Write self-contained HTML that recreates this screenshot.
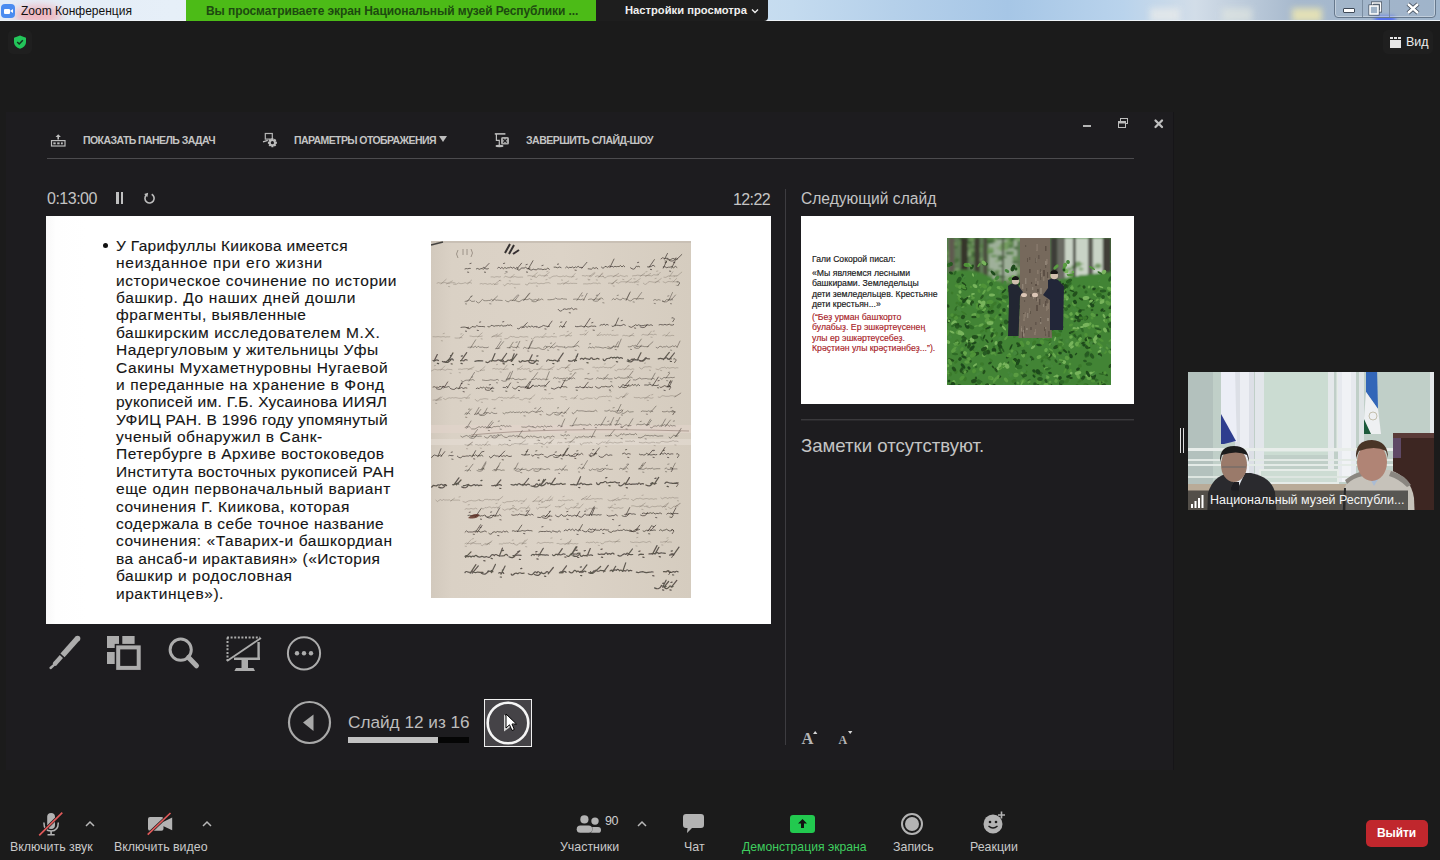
<!DOCTYPE html>
<html><head><meta charset="utf-8">
<style>
*{margin:0;padding:0;box-sizing:border-box}
html,body{width:1440px;height:860px;overflow:hidden;background:#1b1b1b;font-family:"Liberation Sans",sans-serif}
.a{position:absolute}
.t{position:absolute;white-space:nowrap;line-height:1}
svg{position:absolute;overflow:visible}
</style></head><body>
<!-- ===== title bar ===== -->
<div class="a" style="left:0;top:0;width:1440px;height:21px;overflow:hidden;background:linear-gradient(90deg,#e3ecf6 0%,#e6eff8 12%,#dbe8f4 40%,#c4dbef 55%,#b5d0ea 62%,#a6c6e6 70%,#b9d3ec 78%,#d2dde8 83%,#a7b9cd 90%,#9fb5cc 100%)">
  <div class="a" style="left:14px;top:6px;width:48px;height:18px;border-radius:50%;background:#f2a6ae;filter:blur(5px);opacity:.8"></div>
  <div class="a" style="left:1150px;top:8px;width:30px;height:14px;background:#e6e9ea;filter:blur(3px);opacity:.8"></div>
  <div class="a" style="left:1222px;top:8px;width:30px;height:14px;background:#dfe5e0;filter:blur(3px);opacity:.7"></div>
  <div class="a" style="left:1292px;top:8px;width:30px;height:14px;background:#f2eab0;filter:blur(3px);opacity:.8"></div>
  <div class="a" style="left:1375px;top:16px;width:20px;height:6px;background:#3050ff;filter:blur(2px);opacity:.8"></div>
</div>
<div class="a" style="left:0;top:20px;width:1440px;height:1px;background:#eef3f8"></div>
<div class="a" style="left:1px;top:4px;width:14px;height:14px;border-radius:4px;background:#4a8cf0"></div>
<div class="a" style="left:4px;top:9px;width:6px;height:5px;border-radius:1px;background:#fff"></div>
<div class="a" style="left:10px;top:9px;width:0;height:0;border-top:2.5px solid transparent;border-bottom:2.5px solid transparent;border-right:3px solid #fff"></div>
<div class="t" id="tb1" style="left:21px;top:5px;font-size:12px;color:#111">Zoom Конференция</div>
<div class="a" style="left:186px;top:0;width:410px;height:21px;background:#4cbb17"></div>
<div class="t" id="tb2" style="left:206px;top:5px;font-size:12px;letter-spacing:-0.08px;font-weight:bold;color:#1d4a10">Вы просматриваете экран Национальный музей Республики ...</div>
<div class="a" style="left:596px;top:0;width:172px;height:21px;background:#1e1e1e;border-bottom-right-radius:4px"></div>
<div class="t" id="tb3" style="left:625px;top:5px;font-size:11.2px;font-weight:bold;color:#f0f0f0">Настройки просмотра</div>
<svg style="left:751px;top:8px" width="8" height="6"><path d="M1 1.5 L4 4.5 L7 1.5" stroke="#eee" stroke-width="1.4" fill="none"/></svg>
<!-- window buttons -->
<div class="a" style="left:1334px;top:-4px;width:102px;height:22px;border:1px solid #66788c;border-radius:4px;background:rgba(160,178,198,.35);box-shadow:inset 0 0 0 1px rgba(255,255,255,.35)"></div>
<div class="a" style="left:1362px;top:0;width:1px;height:17px;background:#7a8ca0"></div>
<div class="a" style="left:1389px;top:0;width:1px;height:17px;background:#7a8ca0"></div>
<div class="a" style="left:1343px;top:8px;width:12px;height:5px;background:#fff;border:1px solid #3f4a58;border-radius:1px"></div>
<svg style="left:1369px;top:2px" width="13" height="13"><rect x="3.5" y="1" width="8" height="8" fill="none" stroke="#3f4a58" stroke-width="3"/><rect x="3.5" y="1" width="8" height="8" fill="none" stroke="#fff" stroke-width="1.5"/><rect x="1" y="4" width="8" height="8" fill="#8fa2b8" stroke="#3f4a58" stroke-width="3"/><rect x="1" y="4" width="8" height="8" fill="#9fb2c6" stroke="#fff" stroke-width="1.6"/></svg>
<svg style="left:1406px;top:3px" width="14" height="11"><path d="M2 1 L12 10 M12 1 L2 10" stroke="#3f4a58" stroke-width="4.2"/><path d="M2 1 L12 10 M12 1 L2 10" stroke="#fff" stroke-width="2.4"/></svg>
<!-- shield -->
<div class="a" style="left:8px;top:30px;width:24px;height:24px;border-radius:5px;background:#1f1f1f"></div>
<svg style="left:13px;top:35px" width="14" height="14"><path d="M7 0.5 L13 2.8 L13 7 C13 10.3 10.5 12.6 7 13.8 C3.5 12.6 1 10.3 1 7 L1 2.8 Z" fill="#23c55a"/><path d="M4.2 7 L6.2 9 L9.8 5.2" stroke="#13321f" stroke-width="1.5" fill="none"/></svg>
<!-- view button -->
<div class="a" style="left:1383px;top:30px;width:50px;height:24px;border-radius:5px;background:#1f1f1f"></div>
<svg style="left:1390px;top:37px" width="12" height="11"><rect x="0" y="3" width="11" height="8" fill="#e6e6e6"/><rect x="0" y="0" width="3" height="2" fill="#e6e6e6"/><rect x="4" y="0" width="3" height="2" fill="#e6e6e6"/><rect x="8" y="0" width="3" height="2" fill="#e6e6e6"/></svg>
<div class="t" id="vid" style="left:1406px;top:36px;font-size:12.5px;color:#eee">Вид</div>

<!-- ===== presenter window ===== -->
<div class="a" style="left:6px;top:112px;width:1168px;height:658px;background:#1d1c1f;border-right:1px solid #161518"></div>
<!-- toolbar -->
<svg style="left:50px;top:133px" width="17" height="14"><path d="M8.2 1.3 L10.9 4 L9 4 L9 6.6 L7.4 6.6 L7.4 4 L5.5 4 Z" fill="#bdbdbd"/><rect x="1.5" y="7.6" width="13.5" height="5.4" fill="none" stroke="#bdbdbd" stroke-width="1.2"/><rect x="3.3" y="9.4" width="2.4" height="1.9" fill="#bdbdbd"/><rect x="7.2" y="9.4" width="2.4" height="1.9" fill="#bdbdbd"/><rect x="11" y="9.4" width="1.8" height="1.9" fill="#bdbdbd"/></svg>
<svg style="left:262px;top:132px" width="18" height="18"><rect x="3.3" y="1.5" width="7" height="5.6" fill="none" stroke="#b5b5b5" stroke-width="1.2"/><path d="M1 9.8 L5.8 8.3" stroke="#c0c0c0" stroke-width="1.4"/><path d="M14.89 9.70 L14.89 11.70 L13.45 11.95 L13.45 11.97 L14.28 13.16 L12.86 14.58 L11.67 13.75 L11.65 13.75 L11.40 15.19 L9.40 15.19 L9.15 13.75 L9.13 13.75 L7.94 14.58 L6.52 13.16 L7.35 11.97 L7.35 11.95 L5.91 11.70 L5.91 9.70 L7.35 9.45 L7.35 9.43 L6.52 8.24 L7.94 6.82 L9.13 7.65 L9.15 7.65 L9.40 6.21 L11.40 6.21 L11.65 7.65 L11.67 7.65 L12.86 6.82 L14.28 8.24 L13.45 9.43 L13.45 9.45 Z" fill="#bdbdbd"/><circle cx="10.4" cy="10.7" r="1.6" fill="#1e1d20"/></svg>
<div class="t" id="tl1" style="left:83px;top:135px;font-size:10.5px;letter-spacing:-0.57px;font-weight:bold;color:#c4c4c4">ПОКАЗАТЬ ПАНЕЛЬ ЗАДАЧ</div>

<div class="t" id="tl2" style="left:294px;top:135px;font-size:10.5px;letter-spacing:-0.58px;font-weight:bold;color:#c4c4c4">ПАРАМЕТРЫ ОТОБРАЖЕНИЯ</div>
<svg style="left:439px;top:136px" width="9" height="7"><path d="M0 0 L8 0 L4 6 Z" fill="#bdbdbd"/></svg>
<svg style="left:494px;top:132px" width="17" height="16"><path d="M0.8 1.9 L11.4 1.9" stroke="#c4c4c4" stroke-width="1.5"/><path d="M2.4 2 L2.4 8.4 L5.3 8.4 L5.3 13.6" stroke="#bdbdbd" stroke-width="1.2" fill="none"/><ellipse cx="5.5" cy="14" rx="4" ry="1.2" fill="#bdbdbd"/><rect x="7" y="5" width="8" height="7.5" rx="1.5" fill="#aaaaaa"/><path d="M9.2 7 L12.8 10.6 M12.8 7 L9.2 10.6" stroke="#1e1d20" stroke-width="1.2"/></svg>
<div class="t" id="tl3" style="left:526px;top:135px;font-size:10.5px;letter-spacing:-0.5px;font-weight:bold;color:#c4c4c4">ЗАВЕРШИТЬ СЛАЙД-ШОУ</div>
<div class="a" style="left:47px;top:158px;width:1087px;height:1px;background:#4c4b4e"></div>
<!-- window ctrls -->
<div class="a" style="left:1083px;top:125px;width:8px;height:2px;background:#b5b5b5"></div>
<svg style="left:1118px;top:118px" width="10" height="10"><rect x="2.5" y="0.5" width="7" height="5" fill="none" stroke="#bdbdbd"/><rect x="0.5" y="3.5" width="7" height="6" fill="#1e1d20" stroke="#bdbdbd"/><rect x="0.5" y="3.5" width="7" height="2" fill="#bdbdbd"/></svg>
<svg style="left:1154px;top:119px" width="10" height="10"><path d="M1.5 1.5 L8 8 M8 1.5 L1.5 8" stroke="#bfbfbf" stroke-width="2.3" stroke-linecap="round"/></svg>
<!-- timer -->
<div class="t" id="timer" style="left:47px;top:191px;font-size:16px;letter-spacing:-0.5px;color:#c4c4c4">0:13:00</div>
<div class="a" style="left:116px;top:192px;width:2.7px;height:12px;background:#c0c0c0"></div>
<div class="a" style="left:120.7px;top:192px;width:2.7px;height:12px;background:#c0c0c0"></div>
<svg style="left:143px;top:191px" width="14" height="14"><path d="M8.7 3.3 A4.6 4.6 0 1 1 3.4 4" stroke="#bdbdbd" stroke-width="1.6" fill="none"/><path d="M5.2 1.8 L4.3 6.2 L1.2 3.1 Z" fill="#bdbdbd"/></svg>
<div class="t" id="clock" style="left:733px;top:191.5px;font-size:16px;letter-spacing:-0.6px;color:#c4c4c4">12:22</div>
<div class="a" style="left:785px;top:189px;width:1px;height:556px;background:#3d3c40"></div>
<div class="t" id="nexth" style="left:801px;top:191px;font-size:15.6px;color:#c4c4c4">Следующий слайд</div>
<!-- tools -->
<svg style="left:48px;top:636px" width="36" height="36"><path d="M29.6 2.4 L14.5 19.4" stroke="#acacac" stroke-width="5.5"/><circle cx="29.6" cy="2.6" r="2.75" fill="#acacac"/><path d="M13.4 20.6 L7.2 27.4" stroke="#acacac" stroke-width="4.4"/><circle cx="7" cy="27.7" r="2.2" fill="#acacac"/><path d="M5.5 29.3 L2.6 32" stroke="#acacac" stroke-width="2.4" stroke-linecap="round"/></svg>
<svg style="left:106px;top:636px" width="36" height="36"><rect x="1" y="0" width="12" height="12" fill="#acacac"/><rect x="16.3" y="0" width="12.3" height="10" fill="#acacac"/><rect x="1" y="16" width="10" height="12" fill="#acacac"/><rect x="8.7" y="7.9" width="27.5" height="27.5" fill="#1e1d20"/><rect x="12.2" y="11.4" width="20.5" height="20.5" fill="none" stroke="#acacac" stroke-width="4"/></svg>
<svg style="left:166px;top:636px" width="36" height="36"><circle cx="14.7" cy="13.7" r="10.6" fill="none" stroke="#acacac" stroke-width="3"/><path d="M22.5 21.5 L30.5 29.8" stroke="#acacac" stroke-width="5" stroke-linecap="round"/></svg>
<svg style="left:226px;top:636px" width="36" height="36"><path d="M1 1.5 L34 1.5 M1.5 1.5 L1.5 25" stroke="#acacac" stroke-width="2" stroke-dasharray="2 1.6" fill="none"/><path d="M1 25 L35 2" stroke="#acacac" stroke-width="1.8"/><path d="M32.6 6 L32.6 24 M8 22.8 L34 22.8" stroke="#acacac" stroke-width="2.4"/><rect x="15.5" y="23.5" width="6.5" height="9" fill="#acacac"/><path d="M8.4 35 L29 35 L27.5 32 L10 32 Z" fill="#acacac"/></svg>
<svg style="left:286px;top:636px" width="36" height="36"><circle cx="18" cy="17.3" r="16.1" fill="none" stroke="#acacac" stroke-width="2"/><circle cx="11" cy="17.3" r="2.2" fill="#acacac"/><circle cx="18" cy="17.3" r="2.2" fill="#acacac"/><circle cx="25" cy="17.3" r="2.2" fill="#acacac"/></svg>
<!-- nav -->
<svg style="left:287px;top:700px" width="45" height="45"><circle cx="22.5" cy="22.5" r="20.5" fill="none" stroke="#a9a9a9" stroke-width="2.2"/><path d="M16 22.5 L26.5 14.5 L26.5 31 Z" fill="#a9a9a9"/></svg>
<div class="t" id="slidenum" style="left:348px;top:713.5px;font-size:17.2px;color:#bdbdbd">Слайд 12 из 16</div>
<div class="a" style="left:348px;top:737px;width:121px;height:6px;background:#050505"></div>
<div class="a" style="left:348px;top:737px;width:90px;height:6px;background:#c2c2c2"></div>
<div class="a" style="left:484px;top:699px;width:48px;height:48px;background:#454347;border:1px solid #f0f0f0"></div>
<svg style="left:486px;top:701px" width="45" height="45"><circle cx="22" cy="22" r="20.3" fill="none" stroke="#f5f5f5" stroke-width="2.6"/><path d="M29 22.5 L18 13.5 L18 30.5 Z" fill="#d8d8d8"/></svg>
<svg style="left:505px;top:713px" width="14" height="20"><path d="M1 1 L1 15 L4.5 11.8 L7 17.5 L9.3 16.5 L7 11 L11.5 11 Z" fill="#fff" stroke="#000" stroke-width="1"/></svg>
<!-- notes -->
<div class="a" style="left:801px;top:418.5px;width:333px;height:1px;background:#3a393c"></div><div class="a" style="left:801px;top:419.5px;width:333px;height:1px;background:#29282b"></div>
<div class="t" id="notes" style="left:801px;top:437px;font-size:18.6px;color:#c4c4c4">Заметки отсутствуют.</div>
<div class="t" id="aplus" style="left:801.5px;top:730.5px;font-family:'Liberation Serif',serif;font-size:16.5px;font-weight:bold;color:#b5b5b5">A</div>
<svg style="left:812.7px;top:731px" width="5" height="4"><path d="M0 3 L2.2 0 L4.4 3 Z" fill="#d5d5d5"/></svg>
<div class="t" id="aminus" style="left:838.5px;top:734px;font-family:'Liberation Serif',serif;font-size:12px;font-weight:bold;color:#b5b5b5">A</div>
<svg style="left:847.7px;top:731px" width="5" height="4"><path d="M0 0 L4.4 0 L2.2 3 Z" fill="#d5d5d5"/></svg>
<!-- splitter -->
<div class="a" style="left:1180px;top:428px;width:1px;height:25px;background:#e0e0e0"></div>
<div class="a" style="left:1183px;top:428px;width:1px;height:25px;background:#e0e0e0"></div>

<!-- ===== current slide ===== -->
<div class="a" style="left:46px;top:216px;width:725px;height:408px;background:#fff"></div>
<div class="a" style="left:46px;top:216px;width:725px;height:408px;background:linear-gradient(90deg,#f8f8f8 0,#fefefe 10px,#fff 40px)"></div>
<div class="a" style="left:103px;top:243px;width:5.2px;height:5.2px;border-radius:50%;background:#111"></div>
<div class="a" id="slidetxt" style="left:0;top:0;font-size:15.5px;color:#151515;-webkit-text-stroke:0.12px #151515">
<div class="t" style="left:116px;top:237.90px;letter-spacing:0.326px">У Гарифуллы Киикова имеется</div>
<div class="t" style="left:116px;top:255.28px;letter-spacing:0.742px">неизданное при его жизни</div>
<div class="t" style="left:116px;top:272.66px;letter-spacing:0.589px">историческое сочинение по истории</div>
<div class="t" style="left:116px;top:290.04px;letter-spacing:0.624px">башкир. До наших дней дошли</div>
<div class="t" style="left:116px;top:307.42px;letter-spacing:0.469px">фрагменты, выявленные</div>
<div class="t" style="left:116px;top:324.80px;letter-spacing:0.583px">башкирским исследователем М.Х.</div>
<div class="t" style="left:116px;top:342.18px;letter-spacing:0.441px">Надергуловым у жительницы Уфы</div>
<div class="t" style="left:116px;top:359.56px;letter-spacing:0.583px">Сакины Мухаметнуровны Нугаевой</div>
<div class="t" style="left:116px;top:376.94px;letter-spacing:0.601px">и переданные на хранение в Фонд</div>
<div class="t" style="left:116px;top:394.32px;letter-spacing:0.341px">рукописей им. Г.Б. Хусаинова ИИЯЛ</div>
<div class="t" style="left:116px;top:411.70px;letter-spacing:0.293px">УФИЦ РАН. В 1996 году упомянутый</div>
<div class="t" style="left:116px;top:429.08px;letter-spacing:0.549px">ученый обнаружил в Санк-</div>
<div class="t" style="left:116px;top:446.46px;letter-spacing:0.49px">Петербурге в Архиве востоковедов</div>
<div class="t" style="left:116px;top:463.84px;letter-spacing:0.361px">Института восточных рукописей РАН</div>
<div class="t" style="left:116px;top:481.22px;letter-spacing:0.582px">еще один первоначальный вариант</div>
<div class="t" style="left:116px;top:498.60px;letter-spacing:0.522px">сочинения Г. Киикова, которая</div>
<div class="t" style="left:116px;top:515.98px;letter-spacing:0.447px">содержала в себе точное название</div>
<div class="t" style="left:116px;top:533.36px;letter-spacing:0.568px">сочинения: «Таварих-и башкордиан</div>
<div class="t" style="left:116px;top:550.74px;letter-spacing:0.429px">ва ансаб-и ирактавиян» («История</div>
<div class="t" style="left:116px;top:568.12px;letter-spacing:0.586px">башкир и родословная</div>
<div class="t" style="left:116px;top:585.50px;letter-spacing:0.548px">ирактинцев»).</div>
</div>
<svg style="left:431px;top:241px;overflow:hidden" width="260" height="357" viewBox="0 0 260 357">
<defs><linearGradient id="pg" x1="0" y1="0" x2="1" y2="0"><stop offset="0" stop-color="#d2c9bd"/><stop offset="0.08" stop-color="#dad1c5"/><stop offset="0.5" stop-color="#dcd3c7"/><stop offset="1" stop-color="#d5ccbf"/></linearGradient>
<filter id="msb"><feGaussianBlur stdDeviation="0.35"/></filter></defs>
<rect width="260" height="357" fill="url(#pg)"/>
<rect x="0" y="184" width="260" height="8" fill="#e3d3cb" opacity="0.6"/>
<rect x="0" y="198" width="260" height="6" fill="#e8e0d8" opacity="0.5"/>
<rect x="0" y="0" width="260" height="2" fill="#c9c0b5"/>
<g filter="url(#msb)"><path d="M237 17.4 Q235.2 17.1 233.5 17.5 Q231.7 15.6 230 17.8 M233.5 18.2 L236.5 12.4 M234.1 20 l1.2 0.2 M246.6 17.9 Q245.4 17.9 244.2 18.4 Q243 17.5 241.8 17.5 q-2 2.2 -5.9 0.6 M245.4 18.7 L250.8 13.5 M242.6 21.5 l1.2 0.2 M245 16.9 q-2 5 -7 2.5 M39.3 27.4 Q38 27.2 36.7 27.8 Q35.3 27.2 34 27.9 M36.5 31.1 l1.2 0.2 M38.9 22.6 l1.2 -0.3 M57.4 27.7 Q55.9 28.6 54.4 27.6 Q52.8 25.2 51.3 27.4 Q49.8 27.6 48.3 28.3 Q46.8 26.8 45.3 27.8 M52.2 28.5 L58.1 22.4 M53.4 31.1 l1.2 0.2 M87.2 27.2 Q85.7 25.2 84.3 27.7 Q82.8 25.2 81.3 27.2 Q79.8 25.1 78.3 26.8 Q76.9 26.4 75.4 27.4 Q73.9 25.4 72.4 27.7 Q70.9 25.2 69.4 27.5 Q68 24.6 66.5 27.1 M85.9 28 L90.6 22.2 M74.9 30.8 l1.2 0.2 M72.5 22.5 l1.2 -0.3 M99 27.2 Q97.6 27.8 96.1 27.5 Q94.7 25.2 93.3 27 Q91.9 27.2 90.5 26.9 q-2.3 3.8 -4.4 1.4 M97.2 28 L102 19.7 M95.4 31 l1.2 0.2 M95 23.7 l1.2 -0.3 M118.4 28.2 Q116.8 25.7 115.1 28.4 Q113.5 27.9 111.9 28.7 Q110.2 27.7 108.6 28.1 Q107 27.1 105.3 28.8 Q103.7 28.9 102.1 28 q-1.2 2.1 -4.3 0.2 M110.9 24.6 l1.2 -0.3 M130.1 26.5 Q128.4 25.2 126.6 26.8 Q124.9 25.9 123.1 26.1 M126.4 23.3 l1.2 -0.3 M151.3 26.5 Q149.9 26.4 148.5 26.4 Q147.1 24.1 145.7 26.5 Q144.3 25 142.9 27 Q141.5 25 140.1 26.6 Q138.7 25.9 137.3 27 Q135.9 24.3 134.5 26.7 M150.8 27.3 L155.9 21.3 M144 29.1 l1.2 0.2 M166.9 27.8 Q165.3 25.5 163.7 27.4 Q162 25.4 160.4 28.2 Q158.8 27.9 157.2 27.8 M193.8 25.7 Q192.4 23.2 191 26 Q189.5 23.3 188.1 25.6 Q186.7 25.3 185.3 25.7 Q183.9 24.7 182.5 26.1 Q181.1 24.6 179.7 25.7 Q178.3 24 176.8 26.3 Q175.4 25.5 174 25.4 q-1.7 3.2 -3.6 0.7 M178.9 26.5 L183 18.1 M208.8 25.9 Q207.8 24.4 206.7 25.9 Q205.7 23.8 204.7 26.1 q-1.6 3.9 -5.2 0.7 M206.5 21.6 l1.2 -0.3 M223.9 25.3 Q222 22.8 220.2 25.5 Q218.3 26.1 216.5 25.9 M218.2 26.1 L223.4 18.6 M219.4 28.4 l1.2 0.2 M246 26.3 Q244.3 24 242.6 26.8 Q240.8 24.4 239.1 26.2 Q237.4 25.9 235.7 26.7 Q233.9 25 232.2 25.9 M240.6 27.1 L244.3 19.5 M232.3 27.1 L235.6 20.1 M238.5 30.1 l1.2 0.2 M234.1 21.7 l1.2 -0.3 M145.9 68 Q144.2 67.1 142.4 68.6 Q140.7 65.7 139 68 Q137.2 67.4 135.5 68.4 Q133.7 67.3 132 68.4 q-2.4 3.6 -4.8 0 M138.2 71.7 l1.2 0.2 M37.7 86.4 Q35.8 87.1 33.9 86.1 Q31.9 86 30 86.4 M34.4 90.1 l1.2 0.2 M53.7 85.8 Q52.1 85.3 50.5 85.5 Q48.9 85.5 47.4 85.4 Q45.8 83.4 44.2 86.1 Q42.6 85.8 41 85.5 q-2.6 3.8 -5.3 1.3 M46.2 89.3 l1.2 0.2 M48.5 81.2 l1.2 -0.3 M81 84.8 Q79.5 83 78 84.4 Q76.5 83.3 75 84.9 Q73.5 84.7 72 85.2 Q70.5 83.2 69 85.1 Q67.5 84.1 66.1 84.8 Q64.6 84.5 63.1 85.3 Q61.6 84.3 60.1 84.4 q-1.5 2.8 -3.3 1.3 M71.6 80.9 l1.2 -0.3 M105.6 86 Q104.1 84.7 102.5 86.1 Q100.9 83.8 99.3 86 Q97.7 84.1 96.1 86.4 Q94.5 83.9 93 86.5 Q91.4 85.6 89.8 86.1 q-1.9 3.1 -3.4 1.5 M91 86.8 L96.3 81.7 M118.5 85.2 Q116.5 86 114.4 85 Q112.4 83.6 110.4 85.6 q-2.8 2.3 -4.8 0 M116.8 86 L121 80.1 M113.9 87.9 l1.2 0.2 M133.8 85.6 Q132.4 84.6 131.1 85.9 Q129.7 83.5 128.3 85.8 M131.7 86.4 L135.3 80.5 M129.6 81.3 l1.2 -0.3 M164.8 85.4 Q163.3 84.8 161.9 85.3 Q160.4 84.6 158.9 85.5 Q157.5 86.3 156 85.8 Q154.6 83.9 153.1 85.9 Q151.7 85.6 150.2 85 Q148.8 85.4 147.3 85.6 Q145.8 85.9 144.4 85.4 M153.3 86.2 L159.1 77.4 M162.1 89.1 l1.2 0.2 M160.7 81.8 l1.2 -0.3 M177.3 83.9 Q175.9 82.4 174.5 84.3 Q173.1 82 171.7 83.9 Q170.3 83.1 168.9 84.4 M194.4 84.2 Q192.6 82.4 190.9 84.3 Q189.1 85 187.4 84.4 Q185.6 84.3 183.9 84 q-2.2 2.8 -3 1.3 M184 85 L187.5 77 M190.2 79.7 l1.2 -0.3 M221.5 84.4 Q219.9 82.9 218.4 84.3 Q216.8 83.6 215.3 84.3 Q213.8 83.9 212.2 84.6 Q210.7 84.9 209.1 84.4 Q207.6 83.1 206.1 84.6 Q204.5 82.8 203 84.9 q-2.8 2.9 -5.1 0.6 M203.5 87 l1.2 0.2 M216.2 83.4 q-2 5 -7 2.5 M242.7 83.6 Q241.2 84.6 239.8 84 Q238.3 82.5 236.9 83.7 Q235.4 84.3 233.9 83.4 Q232.5 84.2 231 83.8 Q229.6 83.1 228.1 83.8 M18.8 146.2 Q17.4 144.9 16 146 Q14.6 146.7 13.2 145.9 Q11.8 144.8 10.4 146 Q9 144.3 7.6 146.5 Q6.2 145.9 4.8 146.4 Q3.4 145 2 146 M12.9 147 L16.7 140.9 M12.5 145.2 q-2 5 -7 2.5 M35.9 147 Q34.1 146.2 32.3 147.5 Q30.5 145.5 28.7 147.4 Q26.8 147.4 25 146.8 q-1.3 3.1 -5.6 0.7 M27.8 147.8 L30.8 141.8 M32.1 150.6 l1.2 0.2 M30.3 142.4 l1.2 -0.3 M62.8 147.2 Q61.3 146.9 59.8 147.5 Q58.4 146.6 56.9 147 Q55.5 145.3 54 147.5 Q52.5 144.6 51.1 147.2 Q49.6 144.8 48.1 147.7 Q46.7 146.3 45.2 147.5 M60.8 150 l1.2 0.2 M58.3 143.9 l1.2 -0.3 M61.4 146.2 q-2 5 -7 2.5 M76.9 146.3 Q75.7 144 74.5 146.6 Q73.3 146.3 72.1 146.4 M76.1 147.1 L79.6 142 M74.7 150.1 l1.2 0.2 M97.3 146.2 Q95.5 144.6 93.6 146.1 Q91.8 145.9 89.9 146.2 Q88.1 144.3 86.3 146.1 q-1.8 3.8 -4.7 0.4 M96.5 147 L99.9 140.6 M94.3 147 L99.2 140.4 M87.4 149.4 l1.2 0.2 M115.1 145.2 Q113.7 143.4 112.3 144.9 Q110.8 144.9 109.4 145.1 Q107.9 143 106.5 145.3 Q105.1 144.6 103.6 145.4 Q102.2 142.7 100.7 145.7 q-2.2 2.4 -4.6 1.4 M113.4 146 L118.5 140.2 M113.8 148.7 l1.2 0.2 M101.6 144.2 q-2 5 -7 2.5 M136 146.3 Q134.4 145.3 132.7 145.9 Q131 144.2 129.3 146.8 Q127.7 145.5 126 146.8 q-2.6 2.7 -5.7 0.5 M129.5 147.1 L134.2 138.7 M161.7 146.3 Q160.3 147.1 158.9 146.4 Q157.5 145.4 156.1 146.8 Q154.7 145.3 153.3 146.5 Q151.9 146.4 150.5 146.5 Q149.1 144.7 147.6 146.5 Q146.2 146 144.8 146.4 M152.4 147.1 L157.2 141.2 M145.2 149.1 l1.2 0.2 M182.1 145.6 Q180.6 143 179.1 145.8 Q177.7 146 176.2 145.8 Q174.7 144.8 173.2 145.8 Q171.8 145.8 170.3 145.6 q-2.3 3.3 -5.8 0 M178.3 149 l1.2 0.2 M208.7 144.5 Q207.2 142 205.7 144.9 Q204.2 142.5 202.6 144.3 Q201.1 142.3 199.6 145 Q198.1 145.1 196.6 144.6 Q195.1 144.6 193.5 144.4 Q192 142.4 190.5 144.8 q-1.1 3.4 -3 1 M193.5 145.3 L199.1 139 M197.9 143.5 q-2 5 -7 2.5 M227.5 144.1 Q225.7 144.9 224 144.5 Q222.3 144 220.5 144.1 Q218.8 142.2 217 144.2 Q215.3 143.8 213.6 144 M221.6 144.9 L227.3 136.1 M226.5 146.7 l1.2 0.2 M227 139.8 l1.2 -0.3 M238.6 145.4 Q236.9 146 235.2 145.3 Q233.6 143.9 231.9 145.5 q-2.3 2.2 -3.2 0.5 M238 146.2 L241.1 139.9 M236.3 146.2 L239.7 139.5 M233 149.3 l1.2 0.2 M238.5 141.3 l1.2 -0.3 M10.8 214.8 Q9.3 212.8 7.8 214.9 Q6.4 215 4.9 214.5 Q3.5 213.4 2 214.8 q-1.4 3.3 -3.7 0.1 M9.9 215.6 L13.8 210.6 M6.9 215.6 L10 207.7 M22.1 214.6 Q21 214.7 19.9 214.6 Q18.8 213.9 17.7 214.7 M20.8 218.1 l1.2 0.2 M20.2 211.3 l1.2 -0.3 M52 215.1 Q50.6 213.2 49.1 215 Q47.7 213.8 46.2 215.1 Q44.7 212.5 43.3 214.8 Q41.8 213.1 40.4 215.2 Q38.9 213.8 37.4 215.1 Q36 214.7 34.5 215.2 Q33 215.7 31.6 215.1 q-1.9 3.5 -5.3 0.1 M46.7 215.9 L51.1 210.5 M41.2 215.9 L44.6 209.7 M42.6 217.8 l1.2 0.2 M51.7 210.7 l1.2 -0.3 M80.5 215.2 Q79 215.9 77.4 215.3 Q75.9 213.4 74.3 215.3 Q72.7 214 71.2 215.4 Q69.6 213.8 68.1 215.5 Q66.5 214.7 64.9 215 Q63.4 213.4 61.8 214.9 q-2.2 3.9 -3.3 0.7 M68 216 L73.7 210.1 M71.2 218.7 l1.2 0.2 M98.5 213.6 Q96.5 214.2 94.6 213.8 Q92.6 214.3 90.7 213.6 M93.9 214.4 L97 208.4 M95.1 210.5 l1.2 -0.3 M112.3 213.6 Q110.2 212.4 108.1 214 Q106 214.1 103.9 213.4 q-2.7 3.3 -3.2 0.7 M106.7 216.7 l1.2 0.2 M104.7 210 l1.2 -0.3 M138.9 214.4 Q137.5 212.2 136 214.7 Q134.6 213.9 133.2 214 Q131.8 213.7 130.3 214.3 Q128.9 214.6 127.5 214.7 Q126.1 215.2 124.6 214.6 Q123.2 211.8 121.8 214.1 Q120.4 214.3 118.9 214.8 q-2.5 3.1 -5.2 0.8 M131.6 215.2 L136.6 207.1 M132.2 215.2 L137.5 207 M130.1 217.7 l1.2 0.2 M124.2 211.2 l1.2 -0.3 M129.6 213.4 q-2 5 -7 2.5 M152 213.3 Q150.5 211.1 149 213.6 Q147.5 214.2 146 213.4 Q144.6 211.9 143.1 213.1 q-2.8 3.7 -5.5 1.1 M143.7 217.3 l1.2 0.2 M145.7 210 l1.2 -0.3 M147.1 212.3 q-2 5 -7 2.5 M165.7 212.7 Q164 212.6 162.3 213.2 Q160.6 210.9 158.9 213.3 M163 213.5 L168.3 206.9 M159.1 215.4 l1.2 0.2 M161.6 208.8 l1.2 -0.3 M165.1 211.7 q-2 5 -7 2.5 M180.9 214.1 Q179.1 213.5 177.4 214.5 Q175.6 212.3 173.8 214.3 q-2.5 3.9 -5.9 0.8 M199.3 213 Q197.3 211.9 195.3 213.4 Q193.4 210.8 191.4 212.7 M196.7 216.3 l1.2 0.2 M194.5 208.8 l1.2 -0.3 M225.8 213.6 Q224.3 214.2 222.9 213.4 Q221.4 213.8 219.9 214 Q218.5 213.6 217 213.2 Q215.6 211 214.1 213.8 Q212.7 214.4 211.2 213.6 Q209.8 214.4 208.3 213.2 M217.1 214.4 L221.8 209.1 M222 216.3 l1.2 0.2 M222.3 209.7 l1.2 -0.3 M241.9 212.9 Q240.3 212.6 238.7 213.3 Q237.1 211.3 235.4 213.4 Q233.8 210.6 232.2 213.1 Q230.6 211.7 229 213.3 M229.1 213.7 L233.9 206.5 M236.5 216.4 l1.2 0.2 M232.3 209.6 l1.2 -0.3 M54.8 274.7 Q53.3 273.3 51.8 274.9 Q50.3 274.3 48.8 275.3 Q47.4 272.6 45.9 274.5 Q44.4 275.7 42.9 274.6 Q41.4 274.7 40 274.6 Q38.5 273.9 37 274.4 M44.6 275.5 L50.1 267.6 M49.4 278.1 l1.2 0.2 M38.2 271.4 l1.2 -0.3 M70.2 274.8 Q68.8 272.4 67.3 274.8 Q65.9 274.9 64.5 274.8 Q63.1 274.6 61.6 274.5 Q60.2 274 58.8 274.9 q-1.2 2.3 -4.2 0.4 M63.9 275.6 L68.6 266.9 M68.9 278.7 l1.2 0.2 M59.5 271.2 l1.2 -0.3 M62.9 273.8 q-2 5 -7 2.5 M102.3 274 Q100.8 271.9 99.2 274.1 Q97.7 272.3 96.1 274.5 Q94.6 274.3 93 274 Q91.5 273.6 89.9 273.6 Q88.4 272.2 86.8 274 Q85.3 273.4 83.7 274.2 Q82.2 274.6 80.7 273.9 M94.5 274.8 L98.4 269 M95.2 270.1 l1.2 -0.3 M120.9 275.2 Q119.3 274.7 117.7 275.4 Q116.1 274 114.5 275.5 Q113 274 111.4 275.2 q-1.6 2.2 -4.7 1.2 M114.1 276 L118.8 271.1 M118.7 278.8 l1.2 0.2 M118.3 270.5 l1.2 -0.3 M118.6 274.2 q-2 5 -7 2.5 M146.6 274.6 Q145.1 275.5 143.7 274.2 Q142.2 274.8 140.8 275.2 Q139.3 273.9 137.9 274.7 Q136.4 272.4 135 275.1 Q133.5 275.4 132.1 275.1 Q130.6 272.3 129.2 274.3 q-1.5 3.2 -4.7 0 M145.5 275.4 L148.7 270.4 M135.9 278.2 l1.2 0.2 M135.7 270.7 l1.2 -0.3 M170.2 273.8 Q168.7 274.5 167.3 273.6 Q165.8 274.5 164.3 273.8 Q162.8 273.5 161.4 273.9 Q159.9 272 158.4 274.1 Q157 273.9 155.5 274.1 Q154 271.8 152.6 273.9 q-1.6 3.9 -5.1 1.3 M160.4 274.6 L163.6 266.8 M158.3 274.6 L163 266 M153.6 270.3 l1.2 -0.3 M186.4 274.6 Q184.7 272.3 182.9 274.6 Q181.2 274.4 179.4 275 Q177.7 275.6 176 274.3 M181.5 278.5 l1.2 0.2 M204.4 273.3 Q202.6 272.5 200.9 273.1 Q199.1 271.7 197.3 273.2 Q195.6 273.1 193.8 273.4 M195 274.1 L198.7 266.6 M198.1 272.3 q-2 5 -7 2.5 M230.6 272.6 Q229 271 227.4 272.6 Q225.8 271.9 224.1 273 Q222.5 270.8 220.9 272.4 Q219.3 271.1 217.7 272.4 Q216.1 272.2 214.5 272.6 Q212.9 271.4 211.3 272.4 M224.6 276.5 l1.2 0.2 M216.6 271.6 q-2 5 -7 2.5 M247 272.6 Q245.6 272.6 244.2 272.4 Q242.8 272.3 241.3 273 Q239.9 271.3 238.5 272.5 Q237.1 271.3 235.7 273.1 M241.4 273.4 L244.9 266.9 M238.9 276.1 l1.2 0.2 M55.4 290.6 Q53.8 289.1 52.3 290.5 Q50.8 291.1 49.3 291.2 Q47.7 289.2 46.2 290.5 Q44.7 289.6 43.2 290.5 Q41.6 291.2 40.1 291 Q38.6 290.9 37.1 291.1 Q35.5 288.5 34 291.1 M44.3 291.4 L49.6 283.6 M46.3 291.4 L51.1 284.4 M42.2 293.2 l1.2 0.2 M49 286.5 l1.2 -0.3 M77.1 291.1 Q75.5 289.2 74 291 Q72.5 288.9 71 291.4 Q69.5 290.6 67.9 290.9 Q66.4 289.8 64.9 291.4 Q63.4 290.2 61.8 291.2 q-1.7 3.5 -4 1.1 M66.7 294.5 l1.2 0.2 M101.1 289.9 Q99.7 289.4 98.3 289.6 Q96.9 289 95.5 289.5 Q94.1 290.5 92.6 289.8 Q91.2 289.1 89.8 290.1 Q88.4 290.3 87 290.3 Q85.5 289.7 84.1 290.4 Q82.7 289.2 81.3 289.9 M86.3 290.7 L90.8 284.1 M92.6 292.5 l1.2 0.2 M129.6 290.8 Q128 288.4 126.5 291 Q124.9 291 123.4 290.4 Q121.8 288.8 120.3 291.3 Q118.7 289.9 117.2 290.5 Q115.6 289.7 114.1 290.6 Q112.5 290.4 111 290.5 Q109.4 290 107.9 291 M110.8 285.9 l1.2 -0.3 M149.9 289.3 Q148.2 287.8 146.5 289.6 Q144.8 287 143.2 289.7 Q141.5 286.7 139.8 289.3 Q138.1 286.7 136.4 289.7 Q134.8 287.9 133.1 289.7 M147.7 290.1 L151.4 283.6 M145.9 293.3 l1.2 0.2 M177.5 289 Q176 289.2 174.5 288.8 Q173.1 287.2 171.6 289.4 Q170.2 286.5 168.7 289.4 Q167.3 289.1 165.8 289.2 Q164.3 288.7 162.9 288.8 Q161.4 287.2 160 289 Q158.5 286.4 157.1 289.2 q-1.7 3.4 -5.7 0.2 M171.8 292.4 l1.2 0.2 M164.4 288 q-2 5 -7 2.5 M200.4 289.6 Q198.8 288.5 197.3 289.6 Q195.8 288.9 194.3 289.4 Q192.7 287.3 191.2 289.4 Q189.7 289.2 188.2 289.5 Q186.6 288.4 185.1 289.9 Q183.6 290.4 182.1 290 q-1.6 2.9 -4.5 0.6 M187.9 284.6 l1.2 -0.3 M208.5 288.5 Q207.4 288.8 206.3 289 Q205.1 286.7 204 289 q-1.7 2.2 -5.4 1.3 M204.8 289.3 L208.7 284.2 M205.9 292 l1.2 0.2 M207 287.5 q-2 5 -7 2.5 M224.4 289.2 Q222.9 288.4 221.5 289.5 Q220 289.3 218.6 288.8 Q217.1 290.1 215.6 289.2 q-2.9 2.3 -3.7 0.9 M219.2 290 L224.8 284.2 M217 290 L221 284.3 M217.6 292.7 l1.2 0.2 M221.7 285.7 l1.2 -0.3 M242.7 289.4 Q241.3 287.5 239.9 289.8 Q238.4 290.3 237 289.2 Q235.6 287.4 234.1 289 Q232.7 289.1 231.3 289.9 Q229.9 287.5 228.4 289.3" stroke="#2b241f" stroke-width="1.0" fill="none" opacity="0.62" stroke-linecap="round" stroke-linejoin="round"/><path d="M69.6 35.8 Q68 36.4 66.4 35.7 Q64.8 35.6 63.2 36.3 Q61.6 35.6 60 35.9 M68.6 39.5 l1.2 0.2 M91.7 36.1 Q90.2 36 88.6 36.2 Q87 36.4 85.5 36 Q83.9 35.1 82.4 36 Q80.8 35.2 79.3 36.3 Q77.7 36.6 76.1 35.8 Q74.6 34.6 73 36.2 M79.8 36.9 L83.2 33.4 M78.2 39.8 l1.2 0.2 M73.6 32.6 l1.2 -0.3 M104.3 35 Q102.4 35.7 100.5 35 Q98.6 34.2 96.7 34.8 M101.3 35.8 L106.2 31.8 M99.5 38.2 l1.2 0.2 M116.5 34.6 Q115 34.7 113.5 34.9 Q112 34.5 110.5 34.8 Q108.9 33.3 107.4 34.5 q-1.9 3.4 -4.1 1.4 M113 35.4 L118.3 31.4 M115.8 30.6 l1.2 -0.3 M143.1 35.5 Q141.5 35.8 140 35.8 Q138.4 36 136.8 35.5 Q135.2 34.1 133.7 35.5 Q132.1 34.3 130.5 35.6 Q129 35.9 127.4 35.5 Q125.8 34.2 124.3 35.1 Q122.7 34.9 121.1 35.7 q-2.3 2.4 -3.3 1.4 M140.8 36.3 L144.2 32.5 M130.4 39 l1.2 0.2 M159.9 34.9 Q158.4 34.3 157 35 Q155.6 34 154.2 35.1 Q152.7 34.4 151.3 34.6 M158.2 35.7 L163.4 31.5 M159.8 35.7 L164 32.2 M157 38.3 l1.2 0.2 M172.5 35.4 Q170.5 35.8 168.5 35.5 Q166.5 34 164.4 35.4 M167.1 36.2 L171.8 32.7 M168.1 36.2 L171.3 32 M165.3 38.9 l1.2 0.2 M196.6 35 Q195.2 34.2 193.7 35.5 Q192.3 35.2 190.9 34.9 Q189.4 33.7 188 35.4 Q186.6 35.7 185.1 34.7 Q183.7 34.9 182.3 35.3 Q180.8 34.7 179.4 34.8 Q178 35.3 176.5 35.1 q-2.8 3.8 -4.6 0 M182.2 35.8 L187.7 32.5 M191.7 38.4 l1.2 0.2 M218.2 34.6 Q216.5 34.3 214.8 34.7 Q213.2 34 211.5 34.2 Q209.8 35.2 208.1 34.3 Q206.5 33.9 204.8 34.6 Q203.1 34.5 201.5 34.9 M214.6 35.4 L219.6 32.5 M209.1 35.4 L213.8 32.1 M202.9 37.8 l1.2 0.2 M214.8 30.9 l1.2 -0.3 M227.7 33.7 Q226.5 32.5 225.3 34 Q224.1 34.2 222.9 33.6 q-2.1 2.2 -4.2 1.1 M226.3 34.5 L229.3 31.3 M225.6 30.3 l1.2 -0.3 M246 34.6 Q244.5 35 243 34.6 Q241.5 35.3 240 35 Q238.5 34.7 237.1 35.1 q-2.2 2.1 -4.2 1.2 M238.7 35.4 L241.9 30.8 M245.7 35.4 L250.8 31.1 M238.5 37.6 l1.2 0.2 M24.4 42.1 Q22.9 41.2 21.4 41.8 Q19.8 41.3 18.3 42.5 Q16.7 42.3 15.2 41.9 Q13.7 41.2 12.1 41.8 Q10.6 42.1 9.1 42.1 Q7.5 41.1 6 42.1 M15.4 42.9 L21.4 39.9 M10 42.9 L15.2 38.3 M17.5 45.5 l1.2 0.2 M40.6 42.1 Q39 41 37.4 41.9 Q35.7 42.8 34.1 41.7 Q32.5 42.4 30.8 42.6 Q29.2 42.8 27.6 42 q-2.7 2.4 -5.1 1.3 M36.6 42.9 L40.6 39.1 M67 42.9 Q65.5 43.6 64 43.4 Q62.5 41.9 61 43.5 Q59.5 42.1 58 42.9 Q56.5 43.7 55 42.7 Q53.5 42.3 52 43.1 Q50.5 42 49.1 42.8 M63.2 43.7 L68.9 39.2 M88.8 43.2 Q87.2 43.2 85.5 43.3 Q83.8 43.2 82.2 43.1 Q80.5 42 78.9 43.2 Q77.2 42 75.6 42.8 q-1.9 3.5 -3.1 1 M83.3 46.7 l1.2 0.2 M119.1 42.2 Q117.6 41.3 116.1 41.8 Q114.5 41.6 113 42.6 Q111.5 42.7 110 42.3 Q108.5 42.8 107 42.7 Q105.5 41.2 104 42.1 Q102.5 41.9 101 42.4 Q99.5 42.1 97.9 42 q-1.2 3.6 -3.5 1.5 M105.3 45 l1.2 0.2 M114.9 38.8 l1.2 -0.3 M145.8 42.5 Q144.2 42.4 142.6 42.3 Q141 42.7 139.4 42.2 Q137.8 43.1 136.1 42.4 Q134.5 41.5 132.9 42.3 Q131.3 41.8 129.7 42.9 Q128.1 42.9 126.5 42.8 M132.3 43.3 L137.7 40 M144.9 38.3 l1.2 -0.3 M169.3 42.4 Q167.9 41.2 166.5 42.7 Q165.1 41.9 163.7 42.1 Q162.3 41.7 160.9 42.5 Q159.5 43 158.1 42.6 Q156.7 43 155.3 42.9 Q153.9 42.8 152.5 42.9 M157.7 39.1 l1.2 -0.3 M182.5 42.2 Q181.2 42.9 179.9 42.2 Q178.6 42 177.4 42.2 M181.4 43 L185.2 39.2 M180.3 43 L186.2 38.9 M182.1 44.9 l1.2 0.2 M207.8 40.9 Q206.3 41.1 204.8 40.9 Q203.3 40.6 201.8 41.5 Q200.4 40.9 198.9 41.4 Q197.4 40.4 195.9 41 Q194.4 40.6 192.9 40.8 Q191.4 40.7 189.9 40.8 q-2.1 2.6 -4.8 0.7 M203.4 41.7 L209.2 37.7 M194.7 41.7 L200.6 37.6 M206.1 43.6 l1.2 0.2 M228.4 41 Q227 40 225.5 40.8 Q224.1 41.4 222.6 41.2 Q221.2 40.9 219.7 40.7 Q218.2 40.1 216.8 41.5 q-2.1 3.4 -4.5 0.8 M224.2 41.8 L230.2 37.6 M224 37.6 l1.2 -0.3 M246 40.5 Q244.5 41.1 243 40.8 Q241.6 39.6 240.1 40.8 Q238.6 40.5 237.1 40.5 q-2.5 2.5 -5 0.4 M241.8 41.3 L245.6 37.5 M245.1 44.3 l1.2 0.2 M242.9 35.7 l1.2 -0.3 M18.8 95.8 Q17.4 96 16 95.8 Q14.6 96.5 13.2 95.7 Q11.8 95.5 10.4 95.9 Q9 96.1 7.6 95.6 Q6.2 95.6 4.8 95.9 Q3.4 95.7 2 95.7 M10.3 99.7 l1.2 0.2 M12.1 92.7 l1.2 -0.3 M31.1 96.7 Q29.3 95.6 27.6 97 Q25.8 97.3 24 97 M28.7 97.5 L32.4 93.6 M29.7 93.1 l1.2 -0.3 M51.2 95.1 Q49.7 95.5 48.1 95.5 Q46.6 95.8 45.1 95.3 Q43.5 95.7 42 95.6 Q40.5 95.1 38.9 95 M46.7 95.9 L51.2 91.9 M50.1 97.8 l1.2 0.2 M70.3 95.2 Q68.8 94.9 67.2 95.4 Q65.6 93.8 64 95.4 Q62.4 94.6 60.8 95.7 M65.2 96 L71 92 M61 96 L66.5 93 M69.3 98 l1.2 0.2 M97 95.9 Q95.5 95.3 93.9 95.9 Q92.3 96.2 90.8 95.7 Q89.2 95 87.6 96.4 Q86 96.4 84.5 96.3 Q82.9 95.1 81.3 95.8 Q79.8 94.5 78.2 96.3 q-1.4 2 -4.4 1.5 M94.9 99.4 l1.2 0.2 M125.4 95.9 Q123.8 95.7 122.3 95.8 Q120.7 94.8 119.2 95.9 Q117.7 96.1 116.1 96 Q114.6 94.5 113 96.2 Q111.5 96.5 109.9 95.7 Q108.4 96.7 106.9 95.8 Q105.3 96.1 103.8 96 q-2.4 4 -3.5 1.3 M110.8 96.7 L115 92.3 M122.4 92.8 l1.2 -0.3 M140.7 94.7 Q139.2 95.4 137.7 94.4 Q136.2 94.9 134.7 94.9 Q133.2 93.1 131.8 94.4 Q130.3 94.3 128.8 95 M134.8 95.5 L140.5 91.7 M136.2 90.7 l1.2 -0.3 M155.1 93.6 Q153.6 92.3 152.1 93.5 Q150.6 93.8 149.1 93.6 M153.7 94.4 L157 90.9 M154.2 89.9 l1.2 -0.3 M187.1 94 Q185.6 93.8 184.1 94.5 Q182.6 93.9 181 94.4 Q179.5 92.5 178 94.2 Q176.5 92.4 175 94.3 Q173.5 92.7 171.9 94.2 Q170.4 93.2 168.9 94.2 Q167.4 94.7 165.9 94 M166.3 94.8 L169.4 91.5 M181.1 89.6 l1.2 -0.3 M203 94.7 Q201.6 94.1 200.1 94.5 Q198.7 94.7 197.3 95.1 Q195.9 94.2 194.4 94.7 Q193 93.4 191.6 94.7 M198.4 95.5 L202.5 92.5 M225.4 93.6 Q223.9 92.5 222.4 93.9 Q221 93.4 219.5 93.3 Q218 92.6 216.5 94 Q215.1 94.1 213.6 93.8 Q212.1 92.5 210.7 94 M217.1 94.4 L220.3 90.2 M219.9 96.1 l1.2 0.2 M222.2 90.3 l1.2 -0.3 M242.8 94.5 Q240.9 93.8 239.1 94.9 Q237.3 94.8 235.4 94.6 Q233.6 93.1 231.8 94.4 M234.8 95.3 L238.6 91.2 M21 128.7 Q19.4 128.4 17.9 128.4 Q16.3 127.6 14.7 129.2 Q13.1 129.1 11.5 128.4 Q9.9 128.3 8.3 128.6 Q6.8 129.3 5.2 128.6 Q3.6 127.6 2 129.1 q-2.7 2.8 -5.9 0.8 M9.3 129.5 L13.8 125 M19.1 132.2 l1.2 0.2 M3.3 124.8 l1.2 -0.3 M41.1 128 Q39.4 127.9 37.7 128 Q36 127.3 34.3 127.8 Q32.6 127.8 30.9 128.4 Q29.2 127.7 27.5 128.2 M37 128.8 L42.9 126 M28.2 131.6 l1.2 0.2 M53.6 129 Q52.4 129 51.2 129.4 Q50.1 128.5 48.9 129.5 q-1 2.2 -4 0.3 M49.3 129.8 L54 125.6 M77.1 128 Q75.6 127.7 74.1 128.4 Q72.5 128.4 71 128.2 Q69.4 127.3 67.9 128.3 Q66.4 127.3 64.8 128.1 Q63.3 126.8 61.7 127.7 M72.3 128.8 L76.1 124.1 M69.1 130.9 l1.2 0.2 M65.4 123.7 l1.2 -0.3 M99 128 Q97.4 126.9 95.8 128.2 Q94.3 127.5 92.7 128.3 Q91.1 126.5 89.5 128.5 Q87.9 127.5 86.3 127.6 M86.5 128.8 L91.4 124.9 M98.6 130.6 l1.2 0.2 M121.6 128.2 Q120.1 127.7 118.5 128.3 Q116.9 127.9 115.3 128.7 Q113.8 128.4 112.2 128.3 Q110.6 127.7 109 128 Q107.5 127.9 105.9 128.7 Q104.3 128.1 102.7 128.4 q-3 3.7 -4.6 1 M107.6 129 L111.4 125 M117.2 129 L123.1 125.6 M138.1 126.8 Q136.7 126.3 135.2 126.7 Q133.7 126.3 132.2 126.6 Q130.8 125.7 129.3 127.4 q-2.5 2.3 -3.3 1 M134.3 127.6 L138 123.5 M134.2 127.6 L139.2 123.5 M152.2 128.2 Q150.5 127.6 148.7 127.9 Q147 128.5 145.2 128.5 Q143.5 128.7 141.8 128.8 q-1.3 3.9 -4.7 0 M144 131.7 l1.2 0.2 M179.9 126.4 Q178.4 126.4 176.9 126.9 Q175.4 126.1 173.9 126.6 Q172.3 125.3 170.8 126.3 Q169.3 125.9 167.8 127 Q166.3 125.9 164.8 127 Q163.3 125.4 161.8 126.2 M179.7 127.2 L184.2 123.9 M166 129.8 l1.2 0.2 M173.2 123.1 l1.2 -0.3 M202.9 128.1 Q201.3 127.3 199.7 128.6 Q198.1 127.4 196.5 128.1 Q195 127.5 193.4 128.3 Q191.8 127.4 190.2 128.6 Q188.6 128 187 128.3 q-1.4 2.7 -3.2 0.9 M193.4 128.9 L197.5 124.6 M196.9 125 l1.2 -0.3 M220.2 126 Q218.2 125.1 216.2 125.9 Q214.2 125.6 212.2 126.4 q-1.5 3.4 -3.7 0 M218.4 129.2 l1.2 0.2 M213.4 122.3 l1.2 -0.3 M247 126.8 Q245.5 126.4 244.1 127.2 Q242.6 126.3 241.1 126.6 Q239.7 126.9 238.2 127.2 Q236.7 125.7 235.3 127.3 Q233.8 125.3 232.3 126.6 Q230.9 126.1 229.4 127.3 q-1.7 2.5 -4.4 0.8 M229.5 129.4 l1.2 0.2 M10.3 158.7 Q8.2 159.1 6.2 159.1 Q4.1 158.6 2 159.1 M5.5 159.5 L11 156 M4.5 159.5 L9.3 156.2 M4.5 162.3 l1.2 0.2 M38.6 156.9 Q37 157.2 35.5 157.1 Q33.9 155.8 32.3 156.8 Q30.8 157.5 29.2 157.3 Q27.6 157.4 26.1 156.9 Q24.5 156.3 22.9 157 Q21.4 156.3 19.8 157.1 Q18.2 156.4 16.7 157.3 q-2.1 2.6 -4.3 0.3 M34.9 157.7 L39.3 153.2 M29.2 159.8 l1.2 0.2 M56.9 158.1 Q54.9 157.6 53 157.7 Q51 158.4 49.1 158.3 q-3 3.7 -4.9 0.1 M50.3 161.2 l1.2 0.2 M87.8 156.7 Q86.3 156.5 84.7 157.3 Q83.2 155.6 81.7 156.8 Q80.2 156.7 78.7 157.1 Q77.1 155.8 75.6 157.1 Q74.1 156.7 72.6 157.1 Q71 155.9 69.5 156.5 Q68 155.3 66.5 157.3 q-1.6 2.5 -5.5 1.3 M79.9 157.5 L83.3 154.1 M70.4 159.5 l1.2 0.2 M100.3 157.6 Q98.5 158.1 96.8 157.9 Q95.1 156.6 93.3 157.6 q-1.6 2.3 -4.5 1 M98.6 158.4 L103.9 153.8 M97.8 161 l1.2 0.2 M122.2 157.5 Q120.7 157 119.2 158 Q117.6 157 116.1 158 Q114.6 156.2 113 158.1 Q111.5 156 110 158.1 M117.9 152.8 l1.2 -0.3 M135.2 155.9 Q133.9 155.2 132.6 156.1 Q131.3 155.6 130 155.6 M134.7 158.4 l1.2 0.2 M145.1 157.2 Q143.7 156.1 142.4 157.2 Q141.1 156.5 139.8 157.3 M143.1 158 L146.4 154.4 M161.3 157.3 Q159.7 157.4 158 157.3 Q156.3 156.5 154.6 157.1 q-2.6 2.3 -5.4 0.8 M180.7 155.7 Q179.1 154.1 177.4 155.7 Q175.8 154.4 174.2 155.6 Q172.6 155.2 170.9 155.6 Q169.3 155.9 167.7 156 q-2.1 4 -4.5 0.7 M177.9 159.6 l1.2 0.2 M179.1 151 l1.2 -0.3 M194 155.9 Q192.9 154.8 191.8 155.8 Q190.7 155.1 189.6 155.8 q-1.9 3.3 -4.7 1.3 M191.6 156.7 L195.7 152 M191.4 156.7 L197.1 152.8 M222.1 156.8 Q220.5 157.6 218.9 157 Q217.4 155.9 215.8 157 Q214.2 156.8 212.7 156.5 Q211.1 156.9 209.5 157.2 Q208 155.9 206.4 156.7 Q204.8 156.9 203.2 156.4 M213.6 157.6 L219 154.2 M216.2 159.3 l1.2 0.2 M220.6 153.8 l1.2 -0.3 M244.7 155 Q243 155.5 241.3 154.7 Q239.6 154.5 237.9 155.3 Q236.2 155.3 234.5 155.3 Q232.8 154.6 231.1 154.7 q-2.1 3 -3.9 1.5 M243.7 155.8 L249.5 152.5 M244.1 155.8 L249.9 151.9 M41.2 203.8 Q39.4 203.1 37.6 204.2 Q35.8 204.3 34 203.7 M36.6 204.6 L41 201.4 M36.9 204.6 L41.7 201.2 M35.4 207.6 l1.2 0.2 M59.3 203.8 Q57.8 202.5 56.4 204.4 Q54.9 202.5 53.4 203.9 Q51.9 202.7 50.5 204.3 Q49 203.2 47.5 204.3 Q46 203.3 44.6 203.5 M53.7 204.6 L57 200.4 M49.2 207.1 l1.2 0.2 M76.7 203.5 Q75.2 203.7 73.6 203.1 Q72.1 203.8 70.5 204.1 Q69 202.2 67.4 204 M96.9 202.9 Q95.3 203.4 93.7 203.3 Q92 203.4 90.4 202.9 Q88.8 202.1 87.2 202.9 Q85.6 202.7 83.9 202.5 Q82.3 203.5 80.7 203.2 q-1.2 2.9 -4.4 0.5 M88.5 203.7 L94.4 199.2 M111.9 202.4 Q110.5 203.1 109 202.3 Q107.5 201.2 106.1 202.9 Q104.6 202.3 103.1 202.7 M110.4 205.7 l1.2 0.2 M106.1 199.3 l1.2 -0.3 M120.2 202 Q118.9 200.7 117.7 201.7 Q116.4 200.5 115.2 201.7 q-2 3.8 -5.2 0.3 M118.5 202.8 L122.4 198.3 M117.7 202.8 L120.8 199.5 M115.5 206 l1.2 0.2 M118.7 197.8 l1.2 -0.3 M130.9 201.6 Q129.8 201.4 128.7 201.8 Q127.6 200.6 126.5 201.9 M143.6 201.1 Q142.1 201.1 140.5 200.8 Q138.9 200.6 137.4 200.8 Q135.8 201.6 134.2 201.4 M137.8 201.9 L143.4 198.2 M139.1 201.9 L142.5 198.2 M137.4 204.7 l1.2 0.2 M143.2 197.1 l1.2 -0.3 M161.1 201.7 Q159.6 200.3 158.1 202.2 Q156.7 201 155.2 202 Q153.7 201.8 152.2 202.1 q-2.4 3.7 -3 0.4 M191.4 201.5 Q189.9 200.6 188.3 201.7 Q186.8 202.1 185.2 201.8 Q183.7 200.6 182.1 202.1 Q180.6 201.6 179 201.2 Q177.5 202.3 175.9 202.1 Q174.4 200.1 172.8 201.4 Q171.2 200.1 169.7 202 q-2.4 2.7 -4.3 0.6 M175.2 202.3 L178.3 199 M174.6 205.5 l1.2 0.2 M203.7 200.4 Q202.2 199 200.7 200.6 Q199.1 199.5 197.6 200.3 Q196.1 200.3 194.6 200.2 M223.8 201.6 Q222.2 201 220.7 201.3 Q219.1 202.2 217.6 202 Q216 201.7 214.5 201.2 Q212.9 202.1 211.4 201.9 Q209.8 201.6 208.3 201.4 M223.1 204.5 l1.2 0.2 M247 200.5 Q245.4 199.8 243.7 200.3 Q242.1 198.9 240.4 200.3 Q238.8 200.2 237.1 201.1 Q235.5 201.1 233.8 200.9 Q232.2 200.1 230.5 200.5 q-1.6 2.5 -5.4 1.2 M243.8 203.9 l1.2 0.2 M28.7 259.3 Q27.2 258.9 25.8 259.1 Q24.3 259.1 22.8 259.2 Q21.3 258.3 19.8 259.7 Q18.4 258.2 16.9 259.1 Q15.4 258.8 13.9 259.1 Q12.4 257.7 11 259.6 Q9.5 257.7 8 259.3 q-1.3 2.7 -3.2 0 M19.8 260.1 L23.5 257.2 M28 256 l1.2 -0.3 M49.1 259.3 Q47.6 258.1 46.2 259.4 Q44.8 260.1 43.4 259.9 Q41.9 260 40.5 259.4 Q39.1 259.7 37.6 259.9 q-2.9 2.7 -5.6 0.8 M67.6 258.6 Q66.2 258.8 64.8 259.1 Q63.3 258.2 61.9 258.6 Q60.5 259.3 59 258.5 Q57.6 259.2 56.2 258.3 Q54.7 258.3 53.3 258.7 q-1.3 2.5 -4.8 0.2 M67.2 259.4 L71.8 255.5 M93.3 260.1 Q91.9 260.2 90.5 259.8 Q89 259.3 87.6 260.7 Q86.1 258.6 84.7 260.1 Q83.2 258.7 81.8 260.4 Q80.3 260.5 78.9 260.6 Q77.4 260.7 76 260.6 q-2.9 2.2 -4.3 0.9 M92.4 260.9 L95.6 257.9 M108.8 260 Q107 260.2 105.3 260.1 Q103.5 259.5 101.7 260.4 M102.4 260.8 L105.7 257.4 M107.9 260.8 L112 257.6 M107.6 263.3 l1.2 0.2 M106.8 256.2 l1.2 -0.3 M121.4 259 Q119.7 258.4 118 259.5 Q116.2 259.8 114.5 259.2 q-1.4 3.3 -5.4 0.2 M118.6 259.8 L122 256.5 M116 259.8 L120 255.1 M142.1 259.2 Q140.6 258 139.2 259.4 Q137.7 258.6 136.2 259.2 Q134.8 259.7 133.3 259.6 Q131.8 258.4 130.3 259.8 Q128.9 259 127.4 259.3 M132 255.7 l1.2 -0.3 M171.3 257.9 Q169.8 257.3 168.3 257.9 Q166.8 257.4 165.3 257.8 Q163.9 258.4 162.4 257.6 Q160.9 257.7 159.4 258.4 Q157.9 258.2 156.4 258.4 Q154.9 257.1 153.5 258.3 Q152 256.7 150.5 258.4 M150.6 258.7 L156 255.2 M155.1 258.7 L159.7 254.3 M164 260.5 l1.2 0.2 M188.3 259.3 Q186.9 258 185.5 259.5 Q184.1 258.2 182.6 259 Q181.2 259.1 179.8 259.8 Q178.4 260 177 258.9 M181.3 260.1 L187.2 256.8 M183.3 263.2 l1.2 0.2 M197.6 257.9 Q196.1 258.3 194.5 257.5 Q192.9 258 191.4 257.5 q-1.5 2.1 -4 0.9 M193.2 254.7 l1.2 -0.3 M225.7 257.9 Q224.2 257.4 222.6 258.3 Q221.1 257.4 219.6 257.8 Q218.1 258.7 216.6 257.7 Q215.1 257.2 213.6 257.8 Q212.1 258.7 210.6 257.7 Q209 256.4 207.5 257.7 Q206 257.2 204.5 257.9 q-2.2 3.2 -4 0.4 M211 254.4 l1.2 -0.3 M247 256.9 Q245.3 256.8 243.5 257 Q241.8 255.5 240.1 257 Q238.4 256 236.7 257.5 Q235 256 233.3 256.8 q-2.3 2.3 -3.5 0 M246.4 259.7 l1.2 0.2 M46.1 267.8 Q44.6 266.2 43 268 Q41.5 268 40 267.4 Q38.5 268.2 37 268 Q35.5 267 34 268.2 M37.1 263.9 l1.2 -0.3 M67.4 266.5 Q65.7 265.6 64 266.7 Q62.3 265.9 60.6 267 Q58.9 265 57.3 266.2 Q55.6 267.3 53.9 266.6 q-2.2 3.1 -3.1 0.4 M66.4 267.3 L70 263.9 M64.9 262.6 l1.2 -0.3 M85.4 268 Q83.9 267.1 82.3 267.6 Q80.7 267.6 79.1 268.2 Q77.6 268 76 268 q-2 2.7 -4.4 0.2 M78.6 268.8 L83.4 265.7 M81.7 270.6 l1.2 0.2 M81.4 264.8 l1.2 -0.3 M99 267.2 Q97.4 265.6 95.7 267.7 Q94 266.1 92.3 267 Q90.7 266.3 89 267.2 q-2.6 3.7 -5.3 0.8 M94.8 268 L98.1 264.7 M89.9 270 l1.2 0.2 M90.1 262.5 l1.2 -0.3 M115.3 266.2 Q113.6 266 111.9 266.3 Q110.2 266.6 108.5 266.4 q-2 3.1 -3.2 0.6 M114.6 267 L119.2 264.1 M110.5 261.7 l1.2 -0.3 M129.1 265.8 Q127.9 264.4 126.7 265.7 Q125.5 266 124.3 265.6 M127.9 266.6 L133.7 262.9 M148.4 266.5 Q147 267.2 145.6 266.7 Q144.2 265.7 142.8 266.2 Q141.3 267.2 139.9 266.2 q-2.7 3.9 -5.6 0.6 M148.2 267.3 L152.1 263 M142.7 267.3 L147.5 263 M145.9 262.5 l1.2 -0.3 M166.3 267.2 Q164.2 266.6 162.1 267.5 Q160.1 267.1 158 267.3 q-2.1 3.7 -3.1 0.3 M160.7 268 L163.8 265.1 M192.1 266.7 Q190.6 267.3 189.1 267.3 Q187.6 266.2 186.1 267 Q184.6 267.3 183.1 267.3 Q181.6 265.8 180.1 266.5 Q178.6 266.4 177.1 266.4 M178.4 267.5 L181.5 264 M180.8 269.7 l1.2 0.2 M217 265.1 Q215.4 264.6 213.7 265.6 Q212.1 263.7 210.4 265.3 Q208.7 264.7 207.1 265.6 Q205.4 265.8 203.8 265.1 Q202.1 264.5 200.5 264.9 M208.6 265.9 L214.2 262.1 M210.8 268.3 l1.2 0.2 M234.8 265.4 Q233.1 265.3 231.4 265.7 Q229.8 264.4 228.1 265.2 Q226.4 264.8 224.8 265.6 Q223.1 265.9 221.4 265.3 q-2.7 2.5 -5.9 0.5 M233.8 266.2 L237 262.7 M231.5 266.2 L237.4 261.9 M234.4 268.1 l1.2 0.2 M247 265.2 Q245.8 263.7 244.7 265.2 Q243.5 265 242.3 265.6 q-2.5 3.9 -4.8 0.6 M244.1 266 L248.6 262.4 M244.1 266 L249.4 262.5 M49.7 302.5 Q48.2 303 46.6 302.7 Q45 303 43.4 302.4 Q41.9 301.4 40.3 302.1 Q38.7 302.6 37.1 302.6 Q35.6 301.4 34 302.6 M39.6 303.3 L44.9 300.2 M35.9 303.3 L40.2 298.6 M34.2 305.2 l1.2 0.2 M41.3 297.9 l1.2 -0.3 M58.6 303.1 Q57.2 301.9 55.8 303.2 Q54.4 301.7 53 303.3 q-1.8 2.4 -3.1 0.8 M56 303.9 L61 299.9 M54.1 303.9 L60.1 301.1 M83 302.5 Q81.5 303.1 80 302.4 Q78.6 301 77.1 302.2 Q75.6 301.9 74.2 302.4 Q72.7 301.5 71.2 303.1 Q69.8 302.7 68.3 302.9 M81.2 299.3 l1.2 -0.3 M95.1 302.3 Q93.4 303 91.6 302.1 Q89.8 301.9 88.1 302.2 q-1.9 3.9 -5.6 0.2 M91.4 303.1 L96.4 298.4 M90.9 303.1 L94.2 299.1 M94.6 305.6 l1.2 0.2 M122.1 301.7 Q120.4 301.3 118.8 301.9 Q117.2 301 115.6 301.6 Q114 301.1 112.4 301.6 Q110.8 302.4 109.2 302.3 Q107.6 300.5 106 302.1 M119.9 297.2 l1.2 -0.3 M147 302.7 Q145.5 303.3 144 302.5 Q142.5 303.2 141 302.6 Q139.5 302 138 303 Q136.5 301.4 135 303 Q133.5 302.8 132 302.7 Q130.5 303.1 129 303.1 Q127.5 302.1 126 302.4 M133.8 303.5 L139.5 300.3 M136.9 303.5 L140.2 298.7 M129.5 298.5 l1.2 -0.3 M167.3 301.4 Q165.8 300.6 164.3 302 Q162.7 300 161.2 301.4 Q159.7 301 158.2 301.9 Q156.6 300.7 155.1 301.4 M167.2 304.3 l1.2 0.2 M189 300.7 Q187.4 300.9 185.9 300.4 Q184.4 300.7 182.9 300.7 Q181.4 301.3 179.9 300.5 Q178.3 299.6 176.8 300.6 Q175.3 300.8 173.8 301 q-2.8 3.5 -4.6 0.6 M183.9 301.5 L188.2 298.6 M219.9 301.2 Q218.5 299.7 217 300.8 Q215.6 301.9 214.1 301.2 Q212.6 300.4 211.2 300.9 Q209.7 301.4 208.3 301.6 Q206.8 301.1 205.4 301.2 Q203.9 300.9 202.5 301.5 Q201 301.5 199.5 300.8 M204.9 304.9 l1.2 0.2 M205.6 296.7 l1.2 -0.3 M240.6 301.1 Q238.8 300.5 236.9 301.3 Q235.1 299.8 233.2 300.7 Q231.3 301.5 229.5 301.1 M233.9 301.9 L237 298.8 M230.7 303.9 l1.2 0.2 M235.9 297.1 l1.2 -0.3" stroke="#5a4e44" stroke-width="0.7" fill="none" opacity="0.42" stroke-linecap="round" stroke-linejoin="round"/><path d="M43.7 60.1 Q42.1 60.8 40.4 60.3 Q38.8 57.6 37.2 59.7 Q35.6 59.9 34 60.5 M35.6 60.9 L41.1 54.5 M34.4 62.8 l1.2 0.2 M39.7 55.8 l1.2 -0.3 M71.2 59.5 Q69.7 59.3 68.2 59.3 Q66.7 58.8 65.1 59.3 Q63.6 57.3 62.1 59.5 Q60.6 57.3 59 59.5 Q57.5 59.3 56 59.7 Q54.5 59.8 53 59.6 Q51.4 57.2 49.9 59.9 q-2.5 4 -4.6 0.4 M60.9 60.3 L66.4 55.2 M58.7 62.7 l1.2 0.2 M84.2 59 Q82.9 59.7 81.7 59.4 Q80.4 59.1 79.2 59.2 q-1.5 3.1 -4.7 0.3 M81.1 59.8 L86.9 53.7 M83.7 59.8 L87.8 54.3 M112.1 58.6 Q110.6 57 109 58.9 Q107.5 59.3 106 59.2 Q104.5 57.7 103 59 Q101.4 59.5 99.9 58.5 Q98.4 56.8 96.9 58.5 Q95.3 58.8 93.8 58.4 Q92.3 58 90.8 59.1 q-2.3 3.1 -5.9 0.8 M93 59.4 L98.7 52.5 M92.6 59.4 L98.5 52.1 M107.7 57.6 q-2 5 -7 2.5 M135.6 58.2 Q134.1 57.9 132.5 58 Q131 56.8 129.4 58.2 Q127.8 58.1 126.3 58 Q124.7 56 123.2 58.2 Q121.6 58.6 120 58.6 Q118.5 58.9 116.9 58.7 M153.4 58.6 Q151.6 57.4 149.8 58.7 Q148 58.4 146.1 58.2 Q144.3 57.9 142.5 58.3 M145.9 59.4 L151.1 51.8 M152.4 59.4 L156.2 52.3 M150.6 55 l1.2 -0.3 M172.2 58.1 Q170.7 55.6 169.3 58 Q167.8 58.6 166.3 58.1 Q164.8 57.4 163.4 58.5 Q161.9 59 160.4 58 Q158.9 58 157.5 58.5 M163.1 58.9 L168.8 52.2 M171.8 61.7 l1.2 0.2 M165.3 54.4 l1.2 -0.3 M169.2 57.1 q-2 5 -7 2.5 M196.3 58.3 Q194.8 57.8 193.2 57.9 Q191.7 55.8 190.1 58.9 Q188.6 59.1 187 58 Q185.5 56.4 184 58.8 Q182.4 56.2 180.9 58.8 M195.1 59.1 L198.7 51.8 M195.4 59.1 L199.3 50.9 M186.2 54.5 l1.2 -0.3 M212.6 57.7 Q210.8 58.1 209 57.5 Q207.2 58.2 205.3 57.7 Q203.5 57.1 201.7 58.2 q-2.1 3.3 -4.7 0.6 M205.4 58.5 L210.6 51.5 M202.1 60.9 l1.2 0.2 M229.2 59 Q227.5 58 225.8 59.3 Q224.1 57.3 222.4 59.2 M223.2 62.4 l1.2 0.2 M241.8 58.8 Q240.3 57.1 238.7 58.7 Q237.2 59.1 235.6 58.6 q-1.9 3.3 -4.3 1.5 M237.8 59.6 L241.5 51.5 M239.7 59.6 L244.5 54 M239.4 62.6 l1.2 0.2 M236.7 55.1 l1.2 -0.3 M238.4 57.8 q-2 5 -7 2.5 M57.4 106.2 Q55.9 107.1 54.5 106.6 Q53 106.9 51.5 106 Q50.1 106.4 48.6 106.2 Q47.2 103.9 45.7 106.7 Q44.3 103.7 42.8 106.4 Q41.4 105.6 39.9 106.1 Q38.5 106.2 37 106.3 M39.5 107 L44.7 98.8 M51.1 110 l1.2 0.2 M68.9 107 Q67.8 107.4 66.8 107.6 Q65.7 107.2 64.7 107.6 M66.8 107.8 L72.5 100.7 M65 107.8 L70.1 100.1 M88.1 106.3 Q86.6 104.6 85.1 106.6 Q83.6 106.1 82.1 106.4 Q80.7 104.2 79.2 106.9 Q77.7 106.3 76.2 106.6 M85.6 107.1 L88.8 100.3 M78.2 107.1 L82.2 101.2 M82.1 109.2 l1.2 0.2 M85 101.3 l1.2 -0.3 M108.7 107 Q107 106.4 105.4 107.3 Q103.7 107.6 102.1 107.1 Q100.4 107 98.8 106.8 Q97.1 107.5 95.5 107.2 Q93.8 105.1 92.2 107.3 M97.5 107.8 L100.7 100.3 M97.7 107.8 L101.9 99.3 M96.6 110 l1.2 0.2 M119.9 106.3 Q118.1 104.2 116.3 106.2 Q114.4 103.8 112.6 106.4 M119 107.1 L124.3 102 M116.5 109.1 l1.2 0.2 M119.4 102.3 l1.2 -0.3 M116.3 105.3 q-2 5 -7 2.5 M133.9 105.9 Q132.3 106.5 130.7 105.8 Q129.1 105.9 127.5 105.7 Q125.9 104.1 124.4 105.7 q-1.8 2.4 -4.1 0.2 M126.7 108.7 l1.2 0.2 M148.1 105.6 Q146.3 103.3 144.4 105.3 Q142.6 105.3 140.7 106 Q138.9 106.1 137 105.8 q-2.3 2.5 -3.7 0.5 M142.3 106.4 L147.8 100.1 M144.1 109.2 l1.2 0.2 M175 106.5 Q173.6 106.2 172.1 107.1 Q170.6 106.6 169.1 106.4 Q167.6 106 166.1 106.2 Q164.7 105 163.2 107.1 Q161.7 105.2 160.2 106.9 Q158.7 105.1 157.2 106.8 M158.5 102.9 l1.2 -0.3 M187.3 105.6 Q186 105.4 184.8 105.8 Q183.6 105.2 182.4 105.5 q-2.5 2.6 -5.5 0.3 M183.9 106.4 L187.3 100.7 M186.8 106.4 L190.2 98.1 M184.2 108.5 l1.2 0.2 M182.9 104.6 q-2 5 -7 2.5 M217.7 105.2 Q216.2 106.1 214.8 105.6 Q213.3 105.8 211.8 105.2 Q210.4 105.4 208.9 105.3 Q207.4 105.4 206 105.7 Q204.5 102.9 203 105.2 Q201.6 103.8 200.1 105.5 Q198.6 106.1 197.2 105.8 M204.8 106 L210.3 98.1 M216.2 106 L221.9 100.8 M199.4 108.3 l1.2 0.2 M210.4 104.2 q-2 5 -7 2.5 M246 105.7 Q244.5 103.7 243.1 105.7 Q241.6 104 240.1 105.7 Q238.7 106.3 237.2 106.3 Q235.7 104.1 234.3 105.9 Q232.8 105.3 231.4 106.3 Q229.9 104.8 228.4 105.5 q-1.3 3 -3.3 1 M246 106.5 L249 100.1 M239.5 109.1 l1.2 0.2 M43.3 139.3 Q41.7 137.7 40.2 139 Q38.6 138.8 37.1 139.2 Q35.5 139.1 34 139.5 q-1.7 2.5 -3.8 0.3 M38 140.1 L43.5 131.4 M37 143.3 l1.2 0.2 M40.5 136.2 l1.2 -0.3 M67.6 139.1 Q66 137.3 64.4 139.1 Q62.8 139.6 61.1 139 Q59.5 138.4 57.9 139.3 Q56.3 139.6 54.7 139.5 Q53.1 139.3 51.4 139 M65.4 141.7 l1.2 0.2 M94.9 138.1 Q93.5 137.8 92 138.4 Q90.6 139.1 89.1 138.5 Q87.7 137.5 86.3 138.3 Q84.8 139 83.4 138.2 Q82 136.1 80.5 137.8 Q79.1 136.3 77.6 137.9 Q76.2 137.2 74.8 138.7 M78 138.9 L81.6 130.2 M75.3 138.9 L79.4 131.1 M86.2 141.3 l1.2 0.2 M77.7 137.1 q-2 5 -7 2.5 M117 138.3 Q115.3 138.6 113.6 138.2 Q111.9 137.5 110.3 138.8 Q108.6 137.3 106.9 138.3 Q105.3 136.5 103.6 138.4 Q101.9 138 100.2 138.8 M100.7 139.1 L106.6 131.6 M115 139.1 L118.3 130.7 M143.9 137.6 Q142.3 135.6 140.8 137.9 Q139.2 136.2 137.7 137.8 Q136.2 135.9 134.6 137.4 Q133.1 137.1 131.5 137.6 Q130 137.4 128.4 137.8 Q126.9 135.9 125.4 137.4 Q123.8 135.3 122.3 137.3 M138.6 138.4 L144.1 132 M127.8 140.8 l1.2 0.2 M139.1 133.1 l1.2 -0.3 M138.7 136.6 q-2 5 -7 2.5 M161.8 137.7 Q159.8 138.7 157.9 138.2 Q155.9 136.9 153.9 137.6 M156.8 132.8 l1.2 -0.3 M181.2 137.8 Q179.6 137.8 177.9 138 Q176.3 136.2 174.7 137.8 Q173.1 135.7 171.5 137.8 Q169.9 137 168.3 137.5 Q166.7 135.4 165.1 138 M172.6 138.6 L177.1 133.4 M179.6 140.6 l1.2 0.2 M201.3 136.6 Q199.8 135 198.3 136.9 Q196.8 134.2 195.4 136.8 Q193.9 137.3 192.4 137.2 Q190.9 136.8 189.5 137 Q188 135.1 186.5 136.6 q-1.1 2.2 -3.2 0.3 M196.4 137.4 L201.9 130.2 M223.5 138 Q221.9 135.9 220.3 138.1 Q218.6 138 217 138 Q215.3 137.2 213.7 137.6 Q212.1 137.8 210.4 138 Q208.8 135.9 207.1 137.8 q-2.3 2 -4.8 1.1 M220.4 138.8 L224.1 132.2 M218 141.8 l1.2 0.2 M243.4 136.4 Q241.6 137 239.8 136.4 Q238 137.2 236.2 136.6 Q234.4 136.6 232.6 136.5 q-2 3.3 -3.3 0.6 M234.9 137.2 L238.6 132.3 M235.6 139.6 l1.2 0.2 M237.3 131.5 l1.2 -0.3 M38.9 172.8 Q37.7 170.7 36.5 172.9 Q35.2 170.2 34 173.2 M35.3 173.6 L40.4 168 M34.6 176.2 l1.2 0.2 M37.5 168.3 l1.2 -0.3 M48.2 172.8 Q47 170.2 45.8 173 Q44.7 172.6 43.5 173.3 M45.8 173.6 L49.8 168.4 M43.8 173.6 L48 166.5 M65.8 172.4 Q64.1 172.9 62.4 172.3 Q60.7 169.9 59 172.7 Q57.3 170.9 55.7 172 Q54 170.8 52.3 172.5 q-2.5 3.4 -4.6 0.6 M52.9 173.2 L56.2 167.1 M63 167.5 l1.2 -0.3 M56 171.4 q-2 5 -7 2.5 M95.9 171.6 Q94.4 169.9 92.9 171.4 Q91.4 169.9 89.9 172 Q88.4 170.3 86.9 171.4 Q85.4 170.9 83.9 171.7 Q82.4 170.1 80.9 171.5 Q79.4 170.3 77.9 171.5 Q76.4 172.2 74.9 171.6 q-1.2 2.5 -3 0.5 M93 174.8 l1.2 0.2 M112 170.7 Q110.5 168.7 109 170.6 Q107.5 170.2 106 171.3 Q104.5 171.1 103.1 170.7 Q101.6 169.6 100.1 170.7 q-2.4 2.8 -4.2 0.4 M104.9 171.5 L109.8 166.3 M109 173.6 l1.2 0.2 M103.7 167.4 l1.2 -0.3 M135.3 171.9 Q133.9 169.6 132.5 172.2 Q131 170.7 129.6 171.8 Q128.2 172.5 126.8 172 Q125.3 170.7 123.9 171.7 Q122.5 171.2 121.1 172.3 q-1.4 3.5 -5.7 0.8 M133.2 172.7 L138.1 166.8 M130.9 174.8 l1.2 0.2 M126.4 167 l1.2 -0.3 M130.7 170.9 q-2 5 -7 2.5 M166.1 170.2 Q164.6 168 163 170.3 Q161.5 170.5 160 170.4 Q158.4 170.1 156.9 170.2 Q155.3 170.7 153.8 170.3 Q152.3 169.9 150.7 169.8 Q149.2 169.9 147.6 169.9 Q146.1 168.2 144.6 170.7 q-2.8 3.8 -3.4 0.9 M191.8 170 Q190.3 167.4 188.8 170 Q187.3 168.4 185.8 169.9 Q184.3 170.6 182.8 170.3 Q181.3 169.6 179.8 170.3 Q178.3 167.9 176.8 169.8 Q175.3 170.5 173.8 169.9 M186.4 170.8 L190 163.4 M190.3 173.9 l1.2 0.2 M182 166.9 l1.2 -0.3 M191.8 169 q-2 5 -7 2.5 M202.2 170.7 Q200.4 170.9 198.6 171.1 Q196.8 168.5 195 171 q-2.3 2.3 -4.1 1.3 M221.8 170.5 Q220.4 169.4 218.9 170.3 Q217.5 169.3 216 170.5 Q214.6 170.1 213.1 170.2 Q211.7 169.4 210.2 170.5 M219.6 171.3 L225 165.1 M215.3 173.1 l1.2 0.2 M244.6 170.9 Q243 170.4 241.3 170.9 Q239.6 170 238 171.1 Q236.3 169.4 234.7 170.7 Q233 171.1 231.4 170.6 M239.7 166.8 l1.2 -0.3 M39.5 186.6 Q38.1 184.2 36.7 186.3 Q35.4 184.3 34 186.7 M35.4 187.4 L40 180 M59.2 186.4 Q57.6 186.5 56.1 186.8 Q54.5 184.9 52.9 186.5 Q51.3 184.4 49.7 186.5 Q48.1 184.8 46.5 186.5 q-1.8 2.3 -6 1.5 M57.4 187.2 L62.3 181.3 M55.4 187.2 L61.1 180 M57.3 189.4 l1.2 0.2 M80.1 185.3 Q78.6 184.2 77.2 185.5 Q75.8 184 74.3 185.8 Q72.9 183.5 71.5 184.9 Q70 183.2 68.6 185.8 Q67.2 184.9 65.8 185.4 Q64.3 185.9 62.9 185.5 q-1.9 2.6 -5.2 0.4 M69.1 188.1 l1.2 0.2 M67.2 180.3 l1.2 -0.3 M102.3 186 Q100.9 185.9 99.4 185.6 Q98 184.2 96.5 185.7 Q95.1 186.7 93.6 186.1 Q92.1 186.4 90.7 185.9 M97.7 189 l1.2 0.2 M121.1 185.6 Q119.7 184.3 118.2 185.6 Q116.8 184.8 115.3 186.1 Q113.8 183.2 112.4 186 Q110.9 184.4 109.4 186.1 Q108 186.2 106.5 185.2 q-1.8 3.1 -4.9 0.5 M112.6 188.6 l1.2 0.2 M131.5 185.2 Q130.3 185.8 129.1 184.9 Q128 182.6 126.8 185.2 M130.1 186 L133.7 178 M160.3 184.2 Q158.8 181.7 157.3 184.1 Q155.8 184.8 154.3 183.9 Q152.7 183.9 151.2 183.9 Q149.7 182.8 148.2 183.9 Q146.7 184.2 145.2 184 Q143.7 183.6 142.1 184.6 Q140.6 184.9 139.1 184.7 M141.4 185 L145.7 176.9 M152.4 187.6 l1.2 0.2 M180.6 183.8 Q179.1 182 177.7 183.5 Q176.3 184.3 174.9 184 Q173.5 183.7 172.1 183.8 Q170.7 182.4 169.3 183.9 Q167.9 182.7 166.5 184.4 Q165.1 182 163.6 184.2 M169.9 184.6 L174.7 176.1 M178.9 184.6 L182.7 176.5 M164.3 186.5 l1.2 0.2 M176.7 180.4 l1.2 -0.3 M190.4 183.7 Q188.7 181.7 187 183.8 Q185.4 182.8 183.7 183.5 M184.7 184.5 L188.9 176.4 M190.1 186.3 l1.2 0.2 M185.1 179.9 l1.2 -0.3 M200 184.6 Q198.4 184.9 196.8 184.6 Q195.2 182.8 193.5 184.6 q-1.1 2 -3.7 1.4 M197.2 185.4 L201.9 177.7 M195 188 l1.2 0.2 M218.2 183.7 Q216.6 182.9 215 184 Q213.4 182 211.8 183.4 Q210.2 184 208.6 183.6 Q207 182.3 205.4 183.9 M216.5 184.5 L220.4 179.3 M215.5 184.5 L219.4 178.2 M209.1 180.6 l1.2 -0.3 M244.3 184.9 Q242.7 184 241.2 185 Q239.7 183.1 238.1 185.4 Q236.6 182.3 235 184.5 Q233.5 182.7 231.9 184.7 Q230.4 183.1 228.8 185.3 Q227.3 183.1 225.8 185.2 Q224.2 184.6 222.7 185.2 q-2.8 2.9 -3.3 1.1 M230.2 185.7 L234.5 178 M234.1 185.7 L239.4 179.1 M242.3 180.2 l1.2 -0.3 M50.4 195.2 Q48.8 195 47.1 195.4 Q45.5 194.1 43.8 195.7 Q42.2 195 40.6 195.8 Q38.9 193.5 37.3 195.4 Q35.6 193.8 34 195 q-2.8 2.5 -4.3 0.3 M40.8 196 L46.6 188.4 M45.6 194.2 q-2 5 -7 2.5 M71.8 194.8 Q70.1 192.4 68.4 194.6 Q66.7 192.5 65 195.4 Q63.3 193.8 61.6 195.3 Q59.9 193.7 58.2 195.3 q-1.4 3.5 -4.7 0.4 M67.8 193.8 q-2 5 -7 2.5 M91.1 195.4 Q89.4 195 87.7 195.5 Q85.9 193.7 84.2 195.5 Q82.5 193.4 80.7 195.2 Q79 194.8 77.3 195.4 q-1.4 2.3 -4.7 0.2 M86.8 196.2 L91.2 189.6 M78.1 199.3 l1.2 0.2 M110.6 195.9 Q109.1 195.3 107.6 196.5 Q106 196.8 104.5 195.7 Q102.9 194.2 101.4 196 Q99.8 193.8 98.3 196 Q96.8 194.3 95.2 195.6 q-1.1 2.6 -4.2 0.9 M107.5 199.3 l1.2 0.2 M123.3 195.7 Q121.4 193.9 119.5 196.2 Q117.6 195.2 115.7 195.8 q-2.3 3.4 -3 0 M138.5 194.3 Q137 193 135.6 194.7 Q134.1 192.1 132.7 194.8 Q131.2 194.5 129.8 194 M134 197.6 l1.2 0.2 M134.1 191.1 l1.2 -0.3 M164 195.7 Q162.4 194.7 160.7 195.9 Q159.1 194.3 157.4 196.2 Q155.8 195.8 154.2 196 Q152.5 194.1 150.9 196 Q149.2 196.3 147.6 195.8 q-1.7 2.7 -3.1 0.2 M160.5 196.5 L164.4 189.1 M180.6 194.6 Q179.1 195 177.5 194.4 Q176 195.1 174.4 194.9 M178 195.4 L183.5 188.8 M205.9 193.6 Q204.5 191.1 203.1 193.7 Q201.7 193.4 200.2 193.5 Q198.8 192 197.4 193.5 Q196 193.1 194.5 194.1 Q193.1 191.2 191.7 193.7 Q190.3 192.1 188.8 193.7 q-2.5 3.4 -4.7 0.1 M190 197.5 l1.2 0.2 M231.8 194.9 Q230.2 194.9 228.6 195 Q227 195.8 225.4 194.8 Q223.8 193.4 222.2 195 Q220.6 194.1 219 194.9 Q217.4 194.2 215.8 194.5 Q214.2 193.5 212.6 195.4 q-2.7 2.2 -5.2 1.3 M214.1 197.8 l1.2 0.2 M247 194.9 Q245.6 195.8 244.2 194.6 Q242.7 193.4 241.3 195.4 q-2.1 3.4 -3.2 0.7 M244.7 195.7 L250.2 187.3 M244 195.7 L249.4 190.4 M39.8 229.7 Q38.4 227.9 36.9 229.3 Q35.5 228.8 34 229.6 M36.2 230.5 L41.9 223.2 M34.8 225.4 l1.2 -0.3 M53.3 228.1 Q51.9 225.8 50.4 228.3 Q49 228.9 47.5 228.4 M51.3 228.9 L55 222 M50 228.9 L54.9 220.7 M53 227.1 q-2 5 -7 2.5 M73.3 229.1 Q71.8 228.6 70.4 229.5 Q68.9 228.4 67.5 228.7 Q66.1 228.1 64.6 229.3 Q63.2 226.9 61.7 229.6 M63.5 229.9 L67.7 224.9 M65 229.9 L69.2 221.6 M95 228.1 Q93.5 228.6 91.9 228.5 Q90.4 228 88.9 228.6 Q87.4 227 85.8 228.4 Q84.3 225.7 82.8 227.7 M83.6 228.9 L87.1 222 M89.6 231.5 l1.2 0.2 M91.4 227.1 q-2 5 -7 2.5 M118.8 228.3 Q117.2 227.2 115.7 228 Q114.1 229.3 112.6 228.3 Q111 227.5 109.4 228.2 Q107.9 227.4 106.3 228.1 Q104.8 227.3 103.2 228.2 Q101.7 226.7 100.1 228.6 q-2.2 2.1 -4.6 0.6 M109.9 227.3 q-2 5 -7 2.5 M136.6 229 Q135 228.4 133.4 229.1 Q131.8 226.6 130.3 228.9 Q128.7 226.8 127.1 228.8 Q125.6 228.6 124 229.1 M130.8 229.8 L134.8 224.7 M127.5 232.3 l1.2 0.2 M153.5 227.2 Q151.9 225.2 150.3 227.7 Q148.7 225.1 147 227.4 M151.3 228 L156.4 219.6 M147.5 230.9 l1.2 0.2 M150.1 223.5 l1.2 -0.3 M181.4 228.3 Q180 228.5 178.6 228.4 Q177.1 227.5 175.7 228.1 Q174.3 226.2 172.8 228.8 Q171.4 226.4 170 228.2 Q168.6 229.2 167.1 227.9 Q165.7 227.4 164.3 228.8 Q162.8 229 161.4 227.9 q-2.8 3.2 -3.2 0.7 M175.4 224.5 l1.2 -0.3 M173.2 227.3 q-2 5 -7 2.5 M197 227.6 Q195.6 225.2 194.2 227.9 Q192.7 228.4 191.3 227.9 Q189.9 226.3 188.4 228.1 M192 228.4 L197.7 223.3 M195 230.6 l1.2 0.2 M195.9 223.3 l1.2 -0.3 M228.9 227.7 Q227.4 227.7 225.9 227.7 Q224.3 227.8 222.8 228.2 Q221.3 226.2 219.8 227.7 Q218.3 227.3 216.7 227.9 Q215.2 226.2 213.7 227.8 Q212.2 228.7 210.7 228.2 Q209.2 227.2 207.6 227.4 M209.1 228.5 L214.6 221.3 M207.9 228.5 L212.4 222 M211.7 231.1 l1.2 0.2 M210.7 224.6 l1.2 -0.3 M246 227.9 Q244.5 227.9 243 227.9 Q241.4 227.3 239.9 228.1 Q238.4 228.5 236.9 228.5 Q235.3 225.7 233.8 227.6 M240.8 228.7 L244.3 222.1 M234.5 230.6 l1.2 0.2 M236.8 223.3 l1.2 -0.3" stroke="#3a322b" stroke-width="0.85" fill="none" opacity="0.52" stroke-linecap="round" stroke-linejoin="round"/><path d="M7.4 119.5 Q6 118.4 4.7 119.2 Q3.3 120.3 2 119.5 M3 120.3 L6.3 113.6 M6.4 122.4 l1.2 0.2 M22.3 119.1 Q20.9 116.7 19.6 119.3 Q18.2 116.6 16.9 119.4 q-2.8 2.8 -5.5 1.1 M17.3 119.9 L22 111.9 M20.1 122.8 l1.2 0.2 M19.5 114.6 l1.2 -0.3 M20 118.1 q-2 5 -7 2.5 M36.1 119.2 Q34.5 117.6 32.8 119.8 Q31.1 119.3 29.5 119.7 M29.9 120 L35.7 111.7 M30 122.4 l1.2 0.2 M30.3 115.2 l1.2 -0.3 M51.7 119.9 Q49.7 119.6 47.8 119.6 Q45.9 119.8 43.9 120.4 M72.4 119.5 Q70.7 118.3 69 119.6 Q67.3 118.3 65.6 119.7 Q63.9 120.3 62.2 119.5 Q60.5 119.9 58.8 120 q-1.7 2.5 -3.9 1 M60.7 120.3 L64 112.5 M69.9 120.3 L75.6 112.5 M72.1 122.7 l1.2 0.2 M81.5 119.6 Q80.2 117.9 79 119.5 Q77.8 118.8 76.6 119.4 q-1.4 2.2 -5.4 1.3 M80.5 120.4 L85.9 113.2 M80.2 120.4 L83.2 112.8 M81.3 123.5 l1.2 0.2 M107.4 120 Q105.8 119.1 104.1 120.6 Q102.5 119.3 100.9 119.8 Q99.3 118.6 97.7 119.7 Q96.1 119.4 94.4 120.3 Q92.8 120.4 91.2 119.6 q-1.9 2.8 -3.1 0.5 M97.8 120.8 L101.2 113.8 M105.5 123 l1.2 0.2 M105.8 115.1 l1.2 -0.3 M105.4 119 q-2 5 -7 2.5 M128.4 119.8 Q126.8 120.5 125.2 119.7 Q123.6 118.4 122 119.7 Q120.4 119.1 118.8 119.5 Q117.2 117.7 115.6 120.2 M126.4 120.6 L132.2 112.1 M121.7 122.5 l1.2 0.2 M145.5 119.6 Q143.5 118.2 141.5 119.8 Q139.4 120.4 137.4 119.6 M143.6 120.4 L146.9 112.8 M145.3 115.3 l1.2 -0.3 M168 118 Q166.4 116.6 164.9 118 Q163.3 118.8 161.8 118.1 Q160.2 115.6 158.7 118.5 Q157.1 117.8 155.6 118 Q154 116 152.5 118.4 Q150.9 116.5 149.4 118 M155.9 121.7 l1.2 0.2 M191.4 117.3 Q189.8 116.1 188.2 117.4 Q186.6 114.9 185 117.2 Q183.4 115.7 181.8 117 Q180.2 115.4 178.6 117.3 Q177 117.1 175.4 117.8 q-2.6 3.4 -3.3 0.3 M185.4 120.7 l1.2 0.2 M207.4 118.5 Q205.8 119.1 204.2 118.7 Q202.6 119.3 200.9 118.1 q-2.9 2.6 -4 0.4 M206.2 119.3 L210 111.7 M203.2 117.5 q-2 5 -7 2.5 M218.5 117.9 Q217.3 117.6 216 117.6 Q214.7 115.8 213.5 118.2 q-2.9 2.1 -3.7 1.4 M215 116.9 q-2 5 -7 2.5 M240.2 117.8 Q238.6 117.5 237 118.3 Q235.4 115.6 233.8 117.5 Q232.2 118 230.6 117.6 Q229 117.2 227.3 117.9 M232.5 118.6 L238.3 111.4 M238.2 118.6 L243.4 112 M239.3 120.3 l1.2 0.2 M15.6 244.6 Q13.9 242.5 12.2 244.6 Q10.5 242.1 8.8 244.2 Q7.1 243.2 5.4 245 Q3.7 244.4 2 244.4 q-1.2 2.9 -5.3 1 M14.7 243.6 q-2 5 -7 2.5 M27.7 243.1 Q26.2 240.9 24.7 243.2 Q23.2 243.5 21.7 243.6 M22.8 243.9 L27.9 236.8 M25.5 243.9 L30 239 M50.8 244.4 Q49.2 243.8 47.7 244.7 Q46.2 243.3 44.6 244.5 Q43.1 242.9 41.6 244.3 Q40.1 245.2 38.5 244.4 Q37 243.3 35.5 244 Q33.9 244.9 32.4 244.6 M49.9 239.6 l1.2 -0.3 M37.7 243.4 q-2 5 -7 2.5 M70.3 244.3 Q68.7 242.9 67.1 244 Q65.6 244.8 64 244.2 Q62.4 245 60.8 244.6 M64.7 245.1 L69.8 238.9 M68.7 247.3 l1.2 0.2 M98.5 243.7 Q96.9 242.3 95.4 244.2 Q93.8 243.2 92.3 243.3 Q90.7 244.3 89.2 243.3 Q87.7 241.8 86.1 244.2 Q84.6 242.6 83 244.2 Q81.5 243.9 80 243.5 M92 244.5 L97.6 237.5 M109.9 243.6 Q108.5 243.6 107.1 244 Q105.7 241.7 104.3 244.1 q-2.2 2.3 -4.4 0.7 M109.5 244.4 L114.6 238.4 M109.8 244.4 L112.8 238.5 M107.3 239.4 l1.2 -0.3 M109 242.6 q-2 5 -7 2.5 M134.3 242.9 Q132.9 242.9 131.5 243.5 Q130 241.5 128.6 243.1 Q127.1 243.2 125.7 242.9 Q124.2 243.8 122.8 243.5 Q121.4 243.9 119.9 242.7 Q118.5 241.5 117 242.9 Q115.6 240.4 114.1 243.2 q-3 2.7 -5.9 0.9 M119.8 243.7 L124.3 237.2 M160.7 243.3 Q159.2 243 157.7 243.7 Q156.2 243.8 154.7 243.5 Q153.2 242.3 151.7 243.5 Q150.2 241.1 148.7 243.1 Q147.2 242.8 145.7 243.6 Q144.2 244.2 142.7 243.4 Q141.2 243.8 139.7 243.6 M145.8 244.1 L149.6 235.7 M147.6 246.5 l1.2 0.2 M188.5 241.6 Q187 242.1 185.4 241.6 Q183.8 240.1 182.2 241.4 Q180.6 241.6 179.1 241.2 Q177.5 241.8 175.9 242 Q174.3 239.3 172.7 241.4 Q171.2 241.7 169.6 241.6 q-2.8 3.9 -4.1 0.2 M177.9 244.7 l1.2 0.2 M174.7 236.8 l1.2 -0.3 M212.5 242.9 Q211 242.2 209.6 243.4 Q208.2 240.6 206.8 243.3 Q205.3 242.4 203.9 243.2 Q202.5 243.1 201.1 243.1 Q199.6 243.9 198.2 242.6 Q196.8 243.9 195.3 243.2 Q193.9 241.2 192.5 243.1 q-2.9 3 -4.7 0.9 M194.2 243.7 L198.4 236.6 M195.2 246.6 l1.2 0.2 M225.1 242.5 Q223.7 243.3 222.4 242.5 Q221.1 241.1 219.8 242.7 M223.1 243.3 L227.7 236.4 M223.9 237.5 l1.2 -0.3 M221.9 241.5 q-2 5 -7 2.5 M247 241.7 Q245.4 242.6 243.7 242.2 Q242.1 242.6 240.5 242.2 Q238.8 242.3 237.2 241.5 Q235.6 240.3 233.9 242.3 M236.1 245.4 l1.2 0.2 M55.5 315.6 Q54 316.5 52.4 315.9 Q50.9 314.6 49.4 316 Q47.8 316.2 46.3 315.4 Q44.8 313.3 43.2 315.7 Q41.7 314.4 40.1 316.1 Q38.6 314.4 37.1 315.9 Q35.5 313.6 34 315.3 M34.6 316.4 L40 310.9 M52.8 319.6 l1.2 0.2 M76.7 314.5 Q75 312.1 73.3 314.6 Q71.7 314.7 70 315 Q68.3 314.6 66.6 314.4 Q64.9 312.6 63.3 314.5 Q61.6 312.9 59.9 314.6 q-1 2.5 -3.5 1.4 M68.3 315.3 L71.5 307 M60.1 317.4 l1.2 0.2 M71.4 309.6 l1.2 -0.3 M90.1 314.3 Q88.1 313.9 86.1 314.2 Q84 314.3 82 314.6 M82.9 315.1 L88.9 309.8 M88.3 318.3 l1.2 0.2 M86.8 310.6 l1.2 -0.3 M84.9 313.3 q-2 5 -7 2.5 M117.4 314.2 Q116 313.6 114.6 314.1 Q113.2 313.8 111.7 313.9 Q110.3 313.4 108.9 313.9 Q107.4 312.7 106 313.9 Q104.6 312.4 103.2 314.2 Q101.7 312.6 100.3 314.5 M107.6 315 L112.3 307.3 M105.9 317.9 l1.2 0.2 M104.8 310.8 l1.2 -0.3 M134 313.3 Q132.5 312.3 130.9 313.5 Q129.3 314.3 127.8 313.2 Q126.2 313.3 124.6 313.4 q-1.5 2.1 -3.1 0.4 M126.8 314.1 L131.3 307.7 M133.7 316 l1.2 0.2 M149.1 313.1 Q147.5 311.1 145.9 313.2 Q144.3 312.8 142.7 313.2 Q141.1 311.7 139.5 313.4 q-2 3.4 -3.7 1.2 M140.2 313.9 L145.1 305.7 M140.3 313.9 L145.9 305.8 M146.6 316.3 l1.2 0.2 M145 309.5 l1.2 -0.3 M148.9 312.1 q-2 5 -7 2.5 M161.6 314.4 Q160.1 313.4 158.5 314.2 Q157 313.4 155.5 314.2 Q154 315.2 152.4 314.3 q-2.5 2.1 -3.2 0 M156 315.2 L159.3 307.6 M153.2 309.8 l1.2 -0.3 M183 313 Q181.4 311.2 179.8 313.3 Q178.2 312.1 176.7 313.4 Q175.1 310.5 173.5 313.3 Q171.9 313.2 170.3 313.1 Q168.7 314 167.2 312.9 M170.4 316.2 l1.2 0.2 M170 308.3 l1.2 -0.3 M201.7 313.5 Q200 313.7 198.4 313.5 Q196.7 311 195 313.4 Q193.4 312.2 191.7 313.7 q-2.4 2.5 -4.8 0.6 M196.6 314.3 L201.4 308 M212.4 313.4 Q211.2 313.4 210.1 313.2 Q208.9 313.4 207.7 314 M211.8 316.1 l1.2 0.2 M207.9 310.3 l1.2 -0.3 M234.3 312.3 Q232.7 312 231 311.9 Q229.4 311.7 227.8 312.6 Q226.1 310.7 224.5 312.5 Q222.9 312.7 221.2 312.6 Q219.6 312.9 218 312.9 M221.5 313.1 L226 304.6 M224 313.1 L227.9 306.3 M228.2 315.6 l1.2 0.2 M243.1 313.5 Q241.9 312 240.8 313.6 Q239.6 313.8 238.5 314.1 M242.2 314.3 L248 306.2 M240.2 310.1 l1.2 -0.3 M52 331.4 Q50.5 331.4 49 331.4 Q47.5 331.1 46 331.2 Q44.5 332 43 331.2 Q41.5 329.2 40 331.5 Q38.5 331.2 37 331.2 Q35.5 329.7 34 331.5 M41.3 332.2 L47.3 324.9 M39.3 332.2 L44.9 323.7 M61.9 330.8 Q60.7 328.2 59.6 330.7 Q58.4 329.3 57.2 330.9 M60.5 331.6 L64.4 323.4 M57.3 329.8 q-2 5 -7 2.5 M72.7 332.4 Q71.5 330.3 70.3 332.8 Q69 330.9 67.8 332 M70 333.2 L74.1 325.1 M69.2 336 l1.2 0.2 M71.3 329.2 l1.2 -0.3 M93.1 332.2 Q91.6 332.4 90 332.1 Q88.4 331.2 86.8 332.7 Q85.2 331.8 83.7 332.5 q-2.8 3 -3.5 0.5 M89.7 327.6 l1.2 -0.3 M117.7 332 Q116.2 329.4 114.7 331.7 Q113.3 332.9 111.8 332.4 Q110.3 331.3 108.9 332 Q107.4 329.5 105.9 331.9 Q104.5 329.8 103 331.7 q-1.5 3.4 -5.7 1.1 M117.2 332.8 L122.3 326.5 M113.5 335.2 l1.2 0.2 M110.5 331 q-2 5 -7 2.5 M135.1 331.4 Q133.4 329.2 131.7 331.8 Q130.1 330 128.4 331.9 M130 332.2 L135.5 324.8 M154.9 330.7 Q153.3 329.4 151.8 331.3 Q150.2 329.4 148.6 331.3 Q147.1 329.3 145.5 330.8 Q144 328.2 142.4 330.5 q-1.3 2.8 -4.2 0.2 M150.1 331.5 L155.9 323.9 M149.5 334.5 l1.2 0.2 M149.3 326.2 l1.2 -0.3 M174.1 330.1 Q172.7 329.5 171.3 329.7 Q169.8 328.8 168.4 329.9 Q167 330.7 165.6 329.7 Q164.2 329.6 162.8 329.8 q-2.5 3.3 -3.3 0.8 M163.7 330.9 L169.6 325.5 M172.6 330.9 L177.3 324.4 M164.8 329.1 q-2 5 -7 2.5 M200.8 329.7 Q199.3 328.7 197.7 330 Q196.2 327.5 194.6 330.1 Q193.1 328.9 191.5 330.3 Q190 328.3 188.4 329.8 Q186.9 327.2 185.3 329.4 Q183.8 328.2 182.2 330.1 Q180.7 328.5 179.1 329.9 M181.4 330.5 L184.7 325.3 M191.7 330.5 L194.7 321.9 M222.1 331 Q220.4 330.5 218.8 331.2 Q217.1 331.2 215.4 331.6 Q213.8 331.5 212.1 330.7 Q210.4 331 208.7 331.2 Q207.1 331.9 205.4 331.1 M221.7 334.7 l1.2 0.2 M247 330.8 Q245.5 329.5 244.1 331.2 Q242.6 330.1 241.2 331.1 Q239.7 331.6 238.3 331.3 Q236.8 328.6 235.4 330.8 Q233.9 330.4 232.5 330.6 M241.5 333.8 l1.2 0.2 M235.1 345.4 Q233.9 345.8 232.6 345.3 Q231.3 344.6 230 345.1 M231.6 346.2 L235.1 339.2 M233 346.2 L237.6 340.5 M231.5 348.9 l1.2 0.2 M231.7 342.4 l1.2 -0.3 M230.5 344.4 q-2 5 -7 2.5 M242 345.4 Q241.1 346 240.2 345.9 Q239.3 344.2 238.4 345.6 q-2.7 3.4 -4.8 1 M240.4 346.2 L245.8 339.4 M238.9 348.9 l1.2 0.2 M239.9 341.5 l1.2 -0.3" stroke="#201a16" stroke-width="1.2" fill="none" opacity="0.66" stroke-linecap="round" stroke-linejoin="round"/><path d="M74 12 L79 3 M78 13 L83 4 M82 13 L88 9" stroke="#1a1418" stroke-width="2" opacity="0.85"/><path d="M27 9 q-3 4 0 8 M32 8 l0 6 M36 8 l0 6 M40 8 q3 4 0 8" stroke="#6a5e54" stroke-width="0.9" fill="none" opacity="0.6"/><path d="M0 4 L12 1" stroke="#222" stroke-width="1.6" opacity="0.8"/><path d="M37 277 q6 -6 12 -3 q-4 5 -12 3 Z" fill="#5a2a22" opacity="0.8"/><path d="M40 194 Q120 186 258 190" stroke="#6a5048" stroke-width="0.8" fill="none" opacity="0.5"/><path d="M245.7 41 q2 -1 3 1 l-2 3" stroke="#3a322b" stroke-width="0.9" fill="none" opacity="0.7"/><path d="M240.5 77 q2 -1 3 1 l-2 3" stroke="#3a322b" stroke-width="0.9" fill="none" opacity="0.7"/><path d="M242.3 118 q2 -1 3 1 l-2 3" stroke="#3a322b" stroke-width="0.9" fill="none" opacity="0.7"/><path d="M237 145 q2 -1 3 1 l-2 3" stroke="#3a322b" stroke-width="0.9" fill="none" opacity="0.7"/><path d="M240.6 170 q2 -1 3 1 l-2 3" stroke="#3a322b" stroke-width="0.9" fill="none" opacity="0.7"/><path d="M245.2 213 q2 -1 3 1 l-2 3" stroke="#3a322b" stroke-width="0.9" fill="none" opacity="0.7"/><path d="M239 227 q2 -1 3 1 l-2 3" stroke="#3a322b" stroke-width="0.9" fill="none" opacity="0.7"/><path d="M244.3 242 q2 -1 3 1 l-2 3" stroke="#3a322b" stroke-width="0.9" fill="none" opacity="0.7"/><path d="M239.4 273 q2 -1 3 1 l-2 3" stroke="#3a322b" stroke-width="0.9" fill="none" opacity="0.7"/><path d="M240 289 q2 -1 3 1 l-2 3" stroke="#3a322b" stroke-width="0.9" fill="none" opacity="0.7"/><path d="M239.4 313 q2 -1 3 1 l-2 3" stroke="#3a322b" stroke-width="0.9" fill="none" opacity="0.7"/><path d="M236.5 330 q2 -1 3 1 l-2 3" stroke="#3a322b" stroke-width="0.9" fill="none" opacity="0.7"/></g>
</svg>

<!-- ===== next slide ===== -->
<div class="a" style="left:801px;top:216px;width:333px;height:188px;background:#fff"></div>
<div class="a" id="ns1" style="left:812px;top:254px;font-size:8.6px;line-height:10px;color:#151515;-webkit-text-stroke:0.15px #151515;white-space:nowrap">Гали Сокорой писал:</div>
<div class="a" id="ns2" style="left:812px;top:268px;font-size:8.7px;line-height:10.3px;color:#151515;-webkit-text-stroke:0.15px #151515;white-space:nowrap">«Мы являемся лесными<br>башкирами. Земледельцы<br>дети земледельцев. Крестьяне<br>дети крестьян...»</div>
<div class="a" id="ns3" style="left:812px;top:312px;font-size:8.7px;line-height:10.4px;color:#a81c28;-webkit-text-stroke:0.15px #a81c28;white-space:nowrap">(“Беҙ урман башҡорто<br>булабыҙ. Ер эшкәртеүсенең<br>улы ер эшкәртеүсебеҙ.<br>Крәҫтиән улы крәҫтиәнбеҙ...”).</div>
<svg style="left:947px;top:238px;overflow:hidden" width="164" height="147" viewBox="0 0 164 147">
<defs><filter id="bl" x="-5%" y="-5%" width="110%" height="110%"><feGaussianBlur stdDeviation="0.8"/></filter>
<filter id="bl3"><feGaussianBlur stdDeviation="0.7"/></filter></defs>
<rect width="164" height="147" fill="#44873a"/>
<g filter="url(#bl)">
<rect x="0" y="0" width="164" height="60" fill="#5f7c55"/>
<rect x="42" y="2" width="28" height="40" fill="#9fb09a"/>
<rect x="117" y="0" width="40" height="40" fill="#c9d3c6"/>
<rect x="117" y="38" width="40" height="14" fill="#a9bca4"/>
<ellipse cx="43" cy="43" rx="3.7" ry="1.7" fill="#4f7a40" opacity="0.8"/><ellipse cx="69" cy="30" rx="2.3" ry="2.3" fill="#4f7a40" opacity="0.8"/><ellipse cx="52" cy="50" rx="3.4" ry="2.7" fill="#3f6634" opacity="0.8"/><ellipse cx="63" cy="46" rx="3.7" ry="1.2" fill="#3f6634" opacity="0.8"/><ellipse cx="43" cy="32" rx="3.7" ry="1.3" fill="#4f7a40" opacity="0.8"/><ellipse cx="14" cy="0" rx="2.7" ry="2.2" fill="#3f6634" opacity="0.8"/><ellipse cx="63" cy="9" rx="3.7" ry="1.5" fill="#4f7a40" opacity="0.8"/><ellipse cx="30" cy="22" rx="3.7" ry="1.4" fill="#3f6634" opacity="0.8"/><ellipse cx="9" cy="25" rx="2.2" ry="2.1" fill="#86a874" opacity="0.8"/><ellipse cx="44" cy="12" rx="2.9" ry="2.7" fill="#6f9a5a" opacity="0.8"/><ellipse cx="61" cy="40" rx="2.7" ry="1.9" fill="#86a874" opacity="0.8"/><ellipse cx="3" cy="16" rx="3.1" ry="1.2" fill="#4f7a40" opacity="0.8"/><ellipse cx="64" cy="44" rx="2.3" ry="1.5" fill="#5e8c4c" opacity="0.8"/><ellipse cx="27" cy="21" rx="3.0" ry="2.4" fill="#5e8c4c" opacity="0.8"/><ellipse cx="1" cy="39" rx="1.7" ry="1.4" fill="#6f9a5a" opacity="0.8"/><ellipse cx="18" cy="21" rx="3.9" ry="1.9" fill="#3f6634" opacity="0.8"/><ellipse cx="15" cy="5" rx="2.9" ry="2.3" fill="#5e8c4c" opacity="0.8"/><ellipse cx="31" cy="43" rx="2.9" ry="2.2" fill="#3f6634" opacity="0.8"/><ellipse cx="64" cy="6" rx="3.2" ry="2.5" fill="#4f7a40" opacity="0.8"/><ellipse cx="22" cy="15" rx="2.9" ry="2.6" fill="#86a874" opacity="0.8"/><ellipse cx="26" cy="33" rx="1.8" ry="1.6" fill="#86a874" opacity="0.8"/><ellipse cx="30" cy="9" rx="1.8" ry="2.0" fill="#4f7a40" opacity="0.8"/><ellipse cx="46" cy="36" rx="1.8" ry="1.4" fill="#4f7a40" opacity="0.8"/><ellipse cx="48" cy="2" rx="2.0" ry="2.6" fill="#86a874" opacity="0.8"/><ellipse cx="34" cy="21" rx="3.4" ry="1.4" fill="#6f9a5a" opacity="0.8"/><ellipse cx="65" cy="40" rx="2.4" ry="2.1" fill="#4f7a40" opacity="0.8"/><ellipse cx="71" cy="31" rx="2.5" ry="2.3" fill="#86a874" opacity="0.8"/><ellipse cx="70" cy="40" rx="2.5" ry="2.6" fill="#3f6634" opacity="0.8"/><ellipse cx="51" cy="10" rx="2.0" ry="1.3" fill="#86a874" opacity="0.8"/><ellipse cx="20" cy="40" rx="3.3" ry="1.4" fill="#6f9a5a" opacity="0.8"/><ellipse cx="9" cy="22" rx="3.4" ry="2.0" fill="#3f6634" opacity="0.8"/><ellipse cx="10" cy="50" rx="3.6" ry="2.5" fill="#86a874" opacity="0.8"/><ellipse cx="54" cy="47" rx="3.0" ry="2.1" fill="#6f9a5a" opacity="0.8"/><ellipse cx="44" cy="3" rx="3.8" ry="2.7" fill="#3f6634" opacity="0.8"/><ellipse cx="7" cy="5" rx="1.9" ry="1.4" fill="#5e8c4c" opacity="0.8"/><ellipse cx="35" cy="47" rx="1.7" ry="1.0" fill="#5e8c4c" opacity="0.8"/><ellipse cx="12" cy="40" rx="3.6" ry="2.0" fill="#6f9a5a" opacity="0.8"/><ellipse cx="31" cy="42" rx="1.8" ry="2.4" fill="#4f7a40" opacity="0.8"/><ellipse cx="24" cy="6" rx="2.7" ry="1.7" fill="#5e8c4c" opacity="0.8"/><ellipse cx="71" cy="2" rx="2.6" ry="1.4" fill="#86a874" opacity="0.8"/><ellipse cx="0" cy="15" rx="3.4" ry="2.6" fill="#6f9a5a" opacity="0.8"/><ellipse cx="26" cy="47" rx="2.3" ry="1.2" fill="#3f6634" opacity="0.8"/><ellipse cx="13" cy="43" rx="1.7" ry="1.1" fill="#86a874" opacity="0.8"/><ellipse cx="61" cy="44" rx="4.0" ry="1.5" fill="#6f9a5a" opacity="0.8"/><ellipse cx="31" cy="8" rx="2.7" ry="2.1" fill="#86a874" opacity="0.8"/><ellipse cx="20" cy="35" rx="2.2" ry="2.3" fill="#3f6634" opacity="0.8"/><ellipse cx="57" cy="7" rx="3.7" ry="2.9" fill="#6f9a5a" opacity="0.8"/><ellipse cx="44" cy="38" rx="1.7" ry="2.2" fill="#5e8c4c" opacity="0.8"/><ellipse cx="55" cy="39" rx="3.4" ry="1.7" fill="#3f6634" opacity="0.8"/><ellipse cx="36" cy="8" rx="3.7" ry="1.2" fill="#4f7a40" opacity="0.8"/><ellipse cx="22" cy="4" rx="2.8" ry="1.3" fill="#3f6634" opacity="0.8"/><ellipse cx="50" cy="23" rx="2.3" ry="1.2" fill="#86a874" opacity="0.8"/><ellipse cx="0" cy="45" rx="3.5" ry="1.9" fill="#86a874" opacity="0.8"/><ellipse cx="62" cy="15" rx="3.8" ry="1.5" fill="#3f6634" opacity="0.8"/><ellipse cx="63" cy="49" rx="3.8" ry="3.0" fill="#4f7a40" opacity="0.8"/><ellipse cx="25" cy="13" rx="3.6" ry="2.2" fill="#6f9a5a" opacity="0.8"/><ellipse cx="24" cy="7" rx="3.5" ry="2.4" fill="#86a874" opacity="0.8"/><ellipse cx="26" cy="16" rx="2.0" ry="2.7" fill="#3f6634" opacity="0.8"/><ellipse cx="60" cy="49" rx="3.1" ry="2.9" fill="#3f6634" opacity="0.8"/><ellipse cx="46" cy="48" rx="3.1" ry="2.0" fill="#6f9a5a" opacity="0.8"/><ellipse cx="63" cy="4" rx="2.9" ry="2.0" fill="#6f9a5a" opacity="0.8"/><ellipse cx="68" cy="20" rx="2.8" ry="1.9" fill="#5e8c4c" opacity="0.8"/><ellipse cx="23" cy="5" rx="2.3" ry="1.8" fill="#3f6634" opacity="0.8"/><ellipse cx="32" cy="12" rx="2.4" ry="2.8" fill="#6f9a5a" opacity="0.8"/><ellipse cx="58" cy="19" rx="1.7" ry="1.3" fill="#4f7a40" opacity="0.8"/><ellipse cx="68" cy="24" rx="2.8" ry="2.0" fill="#3f6634" opacity="0.8"/><ellipse cx="7" cy="6" rx="3.0" ry="1.6" fill="#6f9a5a" opacity="0.8"/><ellipse cx="69" cy="10" rx="2.4" ry="1.7" fill="#3f6634" opacity="0.8"/><ellipse cx="28" cy="33" rx="1.6" ry="2.3" fill="#3f6634" opacity="0.8"/><ellipse cx="66" cy="49" rx="2.2" ry="2.0" fill="#4f7a40" opacity="0.8"/><ellipse cx="54" cy="28" rx="2.7" ry="1.1" fill="#3f6634" opacity="0.8"/><ellipse cx="52" cy="42" rx="2.5" ry="1.7" fill="#6f9a5a" opacity="0.8"/><ellipse cx="3" cy="13" rx="3.6" ry="1.3" fill="#5e8c4c" opacity="0.8"/><ellipse cx="62" cy="1" rx="3.2" ry="1.7" fill="#6f9a5a" opacity="0.8"/><ellipse cx="9" cy="41" rx="2.4" ry="1.8" fill="#3f6634" opacity="0.8"/><ellipse cx="26" cy="18" rx="4.0" ry="1.0" fill="#3f6634" opacity="0.8"/><ellipse cx="31" cy="26" rx="2.8" ry="2.8" fill="#6f9a5a" opacity="0.8"/><ellipse cx="18" cy="2" rx="2.7" ry="2.9" fill="#4f7a40" opacity="0.8"/><ellipse cx="13" cy="43" rx="3.9" ry="2.4" fill="#3f6634" opacity="0.8"/><ellipse cx="30" cy="41" rx="2.5" ry="1.4" fill="#4f7a40" opacity="0.8"/><ellipse cx="31" cy="24" rx="2.8" ry="2.3" fill="#3f6634" opacity="0.8"/><ellipse cx="8" cy="36" rx="2.1" ry="1.7" fill="#86a874" opacity="0.8"/><ellipse cx="25" cy="1" rx="3.0" ry="2.7" fill="#6f9a5a" opacity="0.8"/><ellipse cx="9" cy="24" rx="1.5" ry="2.4" fill="#3f6634" opacity="0.8"/><ellipse cx="26" cy="40" rx="2.5" ry="1.0" fill="#6f9a5a" opacity="0.8"/><ellipse cx="19" cy="7" rx="2.6" ry="2.8" fill="#6f9a5a" opacity="0.8"/><ellipse cx="65" cy="41" rx="1.9" ry="2.7" fill="#4f7a40" opacity="0.8"/><ellipse cx="11" cy="33" rx="2.9" ry="2.2" fill="#4f7a40" opacity="0.8"/><ellipse cx="71" cy="1" rx="3.7" ry="1.7" fill="#86a874" opacity="0.8"/><ellipse cx="13" cy="40" rx="3.8" ry="1.2" fill="#4f7a40" opacity="0.8"/><ellipse cx="6" cy="21" rx="3.2" ry="2.1" fill="#4f7a40" opacity="0.8"/><ellipse cx="51" cy="38" rx="3.1" ry="1.3" fill="#3f6634" opacity="0.8"/><ellipse cx="72" cy="34" rx="1.9" ry="2.7" fill="#86a874" opacity="0.8"/><ellipse cx="54" cy="10" rx="1.9" ry="2.9" fill="#6f9a5a" opacity="0.8"/><ellipse cx="51" cy="33" rx="2.9" ry="1.6" fill="#6f9a5a" opacity="0.8"/><ellipse cx="24" cy="39" rx="1.7" ry="2.3" fill="#86a874" opacity="0.8"/><ellipse cx="4" cy="21" rx="3.6" ry="2.4" fill="#86a874" opacity="0.8"/><ellipse cx="60" cy="5" rx="3.1" ry="1.5" fill="#6f9a5a" opacity="0.8"/><ellipse cx="42" cy="3" rx="3.0" ry="2.8" fill="#3f6634" opacity="0.8"/><ellipse cx="65" cy="15" rx="2.2" ry="2.0" fill="#5e8c4c" opacity="0.8"/><ellipse cx="28" cy="42" rx="2.5" ry="2.6" fill="#86a874" opacity="0.8"/><ellipse cx="43" cy="14" rx="3.7" ry="1.7" fill="#5e8c4c" opacity="0.8"/><ellipse cx="34" cy="44" rx="2.6" ry="1.4" fill="#4f7a40" opacity="0.8"/><ellipse cx="2" cy="27" rx="2.5" ry="1.1" fill="#5e8c4c" opacity="0.8"/><ellipse cx="33" cy="22" rx="2.9" ry="1.3" fill="#86a874" opacity="0.8"/><ellipse cx="49" cy="35" rx="3.0" ry="2.2" fill="#4f7a40" opacity="0.8"/><ellipse cx="65" cy="49" rx="2.5" ry="2.9" fill="#5e8c4c" opacity="0.8"/><ellipse cx="37" cy="23" rx="2.6" ry="1.8" fill="#5e8c4c" opacity="0.8"/><ellipse cx="29" cy="46" rx="1.6" ry="1.3" fill="#4f7a40" opacity="0.8"/><ellipse cx="53" cy="43" rx="2.5" ry="1.3" fill="#5e8c4c" opacity="0.8"/><ellipse cx="21" cy="17" rx="3.6" ry="1.3" fill="#86a874" opacity="0.8"/><ellipse cx="65" cy="2" rx="2.6" ry="2.0" fill="#3f6634" opacity="0.8"/><ellipse cx="47" cy="18" rx="3.6" ry="1.3" fill="#5e8c4c" opacity="0.8"/><ellipse cx="16" cy="31" rx="2.6" ry="2.6" fill="#3f6634" opacity="0.8"/><ellipse cx="43" cy="0" rx="3.8" ry="1.8" fill="#5e8c4c" opacity="0.8"/><ellipse cx="59" cy="10" rx="2.5" ry="2.7" fill="#6f9a5a" opacity="0.8"/><ellipse cx="9" cy="9" rx="1.6" ry="1.5" fill="#3f6634" opacity="0.8"/><ellipse cx="10" cy="32" rx="2.8" ry="2.0" fill="#86a874" opacity="0.8"/><ellipse cx="53" cy="20" rx="2.3" ry="2.9" fill="#3f6634" opacity="0.8"/><ellipse cx="25" cy="8" rx="3.1" ry="1.6" fill="#4f7a40" opacity="0.8"/><ellipse cx="151" cy="28" rx="3.2" ry="2.4" fill="#5e8c4c" opacity="0.8"/><ellipse cx="124" cy="36" rx="3.0" ry="2.9" fill="#86a874" opacity="0.8"/><ellipse cx="146" cy="30" rx="1.9" ry="1.4" fill="#5e8c4c" opacity="0.8"/><ellipse cx="157" cy="37" rx="3.6" ry="2.4" fill="#6f9a5a" opacity="0.8"/><ellipse cx="124" cy="39" rx="2.6" ry="2.1" fill="#86a874" opacity="0.8"/><ellipse cx="122" cy="54" rx="2.9" ry="2.8" fill="#86a874" opacity="0.8"/><ellipse cx="131" cy="26" rx="3.1" ry="2.6" fill="#5e8c4c" opacity="0.8"/><ellipse cx="155" cy="40" rx="3.3" ry="1.7" fill="#86a874" opacity="0.8"/><ellipse cx="141" cy="42" rx="2.3" ry="1.7" fill="#5e8c4c" opacity="0.8"/><ellipse cx="132" cy="26" rx="1.9" ry="2.5" fill="#5e8c4c" opacity="0.8"/><ellipse cx="126" cy="36" rx="1.6" ry="2.9" fill="#5e8c4c" opacity="0.8"/><ellipse cx="128" cy="51" rx="3.9" ry="1.1" fill="#5e8c4c" opacity="0.8"/><ellipse cx="133" cy="44" rx="3.4" ry="2.0" fill="#86a874" opacity="0.8"/><ellipse cx="140" cy="49" rx="3.1" ry="2.5" fill="#6f9a5a" opacity="0.8"/><ellipse cx="135" cy="38" rx="3.2" ry="1.3" fill="#5e8c4c" opacity="0.8"/><ellipse cx="157" cy="54" rx="2.2" ry="2.6" fill="#6f9a5a" opacity="0.8"/><ellipse cx="124" cy="42" rx="2.9" ry="2.3" fill="#5e8c4c" opacity="0.8"/><ellipse cx="134" cy="31" rx="2.6" ry="1.6" fill="#6f9a5a" opacity="0.8"/><ellipse cx="127" cy="54" rx="1.8" ry="1.4" fill="#6f9a5a" opacity="0.8"/><ellipse cx="143" cy="50" rx="2.3" ry="1.7" fill="#5e8c4c" opacity="0.8"/><ellipse cx="161" cy="28" rx="3.4" ry="1.5" fill="#5e8c4c" opacity="0.8"/><ellipse cx="129" cy="53" rx="2.2" ry="2.4" fill="#6f9a5a" opacity="0.8"/><ellipse cx="159" cy="55" rx="3.7" ry="2.8" fill="#86a874" opacity="0.8"/><ellipse cx="134" cy="45" rx="2.4" ry="1.2" fill="#5e8c4c" opacity="0.8"/><ellipse cx="122" cy="42" rx="1.9" ry="2.7" fill="#86a874" opacity="0.8"/><ellipse cx="122" cy="31" rx="3.1" ry="1.6" fill="#5e8c4c" opacity="0.8"/><ellipse cx="118" cy="50" rx="3.2" ry="1.6" fill="#86a874" opacity="0.8"/><ellipse cx="133" cy="26" rx="3.7" ry="1.1" fill="#86a874" opacity="0.8"/><ellipse cx="151" cy="42" rx="2.8" ry="2.8" fill="#5e8c4c" opacity="0.8"/><ellipse cx="144" cy="40" rx="3.7" ry="1.5" fill="#5e8c4c" opacity="0.8"/><ellipse cx="127" cy="29" rx="3.1" ry="2.0" fill="#5e8c4c" opacity="0.8"/><ellipse cx="138" cy="50" rx="2.2" ry="1.3" fill="#6f9a5a" opacity="0.8"/><ellipse cx="139" cy="53" rx="3.9" ry="1.6" fill="#6f9a5a" opacity="0.8"/><ellipse cx="130" cy="45" rx="2.5" ry="2.4" fill="#5e8c4c" opacity="0.8"/><ellipse cx="151" cy="43" rx="1.6" ry="2.5" fill="#5e8c4c" opacity="0.8"/><ellipse cx="148" cy="42" rx="3.6" ry="2.2" fill="#86a874" opacity="0.8"/><ellipse cx="123" cy="41" rx="2.6" ry="2.1" fill="#86a874" opacity="0.8"/><ellipse cx="159" cy="41" rx="2.5" ry="1.2" fill="#86a874" opacity="0.8"/><ellipse cx="139" cy="41" rx="2.0" ry="2.8" fill="#6f9a5a" opacity="0.8"/><ellipse cx="141" cy="46" rx="3.1" ry="1.8" fill="#6f9a5a" opacity="0.8"/>
<rect x="2" y="0" width="5.5" height="50" fill="#5f5a50"/>
<rect x="14" y="0" width="6.7" height="35" fill="#36352c"/>
<rect x="27.5" y="0" width="5.2" height="45" fill="#3d3c33"/>
<rect x="36.5" y="0" width="3.5" height="52" fill="#4a4a3e"/>
<rect x="55" y="0" width="2" height="50" fill="#4f5a44"/>
<rect x="103.7" y="0" width="6.8" height="95" fill="#3c3c38"/>
<rect x="110.5" y="0" width="7.5" height="70" fill="#6a6a64"/>
<rect x="126" y="0" width="2.6" height="147" fill="#3a3a34"/>
<rect x="141" y="0" width="5" height="75" fill="#5c5c55"/>
<rect x="155.8" y="0" width="8" height="110" fill="#3f3e38"/>
<path d="M0 36 Q20 26 45 40 T95 46 T164 34 L164 147 L0 147 Z" fill="#428434"/>
</g>
<g filter="url(#bl3)"><ellipse cx="103" cy="117" rx="3.0" ry="2.1" fill="#22501c" transform="rotate(-66 103 117)"/><ellipse cx="76" cy="143" rx="2.7" ry="2.1" fill="#4f9338" transform="rotate(-18 76 143)"/><ellipse cx="145" cy="72" rx="1.4" ry="1.1" fill="#275a20" transform="rotate(-13 145 72)"/><ellipse cx="27" cy="133" rx="2.1" ry="1.9" fill="#4f9338" transform="rotate(-51 27 133)"/><ellipse cx="146" cy="50" rx="1.7" ry="2.2" fill="#66a84c" transform="rotate(-29 146 50)"/><ellipse cx="161" cy="92" rx="2.8" ry="1.1" fill="#275a20" transform="rotate(65 161 92)"/><ellipse cx="150" cy="62" rx="2.0" ry="1.0" fill="#66a84c" transform="rotate(-33 150 62)"/><ellipse cx="53" cy="127" rx="2.5" ry="1.6" fill="#78b45c" transform="rotate(-61 53 127)"/><ellipse cx="57" cy="63" rx="2.8" ry="1.1" fill="#5a9c42" transform="rotate(29 57 63)"/><ellipse cx="6" cy="147" rx="1.3" ry="1.8" fill="#2f6a26" transform="rotate(-67 6 147)"/><ellipse cx="131" cy="70" rx="2.5" ry="0.8" fill="#3a7a2c" transform="rotate(29 131 70)"/><ellipse cx="103" cy="144" rx="1.5" ry="1.1" fill="#5a9c42" transform="rotate(-22 103 144)"/><ellipse cx="57" cy="90" rx="3.0" ry="1.0" fill="#78b45c" transform="rotate(50 57 90)"/><ellipse cx="2" cy="143" rx="1.4" ry="1.3" fill="#1f4a1a" transform="rotate(-19 2 143)"/><ellipse cx="21" cy="59" rx="2.8" ry="0.9" fill="#78b45c" transform="rotate(-27 21 59)"/><ellipse cx="133" cy="103" rx="2.9" ry="1.2" fill="#5a9c42" transform="rotate(-47 133 103)"/><ellipse cx="4" cy="148" rx="2.4" ry="1.4" fill="#275a20" transform="rotate(34 4 148)"/><ellipse cx="55" cy="56" rx="2.7" ry="1.0" fill="#3a7a2c" transform="rotate(42 55 56)"/><ellipse cx="53" cy="50" rx="3.5" ry="1.6" fill="#66a84c" transform="rotate(18 53 50)"/><ellipse cx="22" cy="130" rx="1.9" ry="1.4" fill="#1f4a1a" transform="rotate(49 22 130)"/><ellipse cx="164" cy="81" rx="2.3" ry="1.8" fill="#5a9c42" transform="rotate(-32 164 81)"/><ellipse cx="77" cy="138" rx="1.5" ry="2.0" fill="#22501c" transform="rotate(64 77 138)"/><ellipse cx="104" cy="87" rx="2.0" ry="0.9" fill="#44863a" transform="rotate(2 104 87)"/><ellipse cx="90" cy="87" rx="1.3" ry="1.9" fill="#78b45c" transform="rotate(27 90 87)"/><ellipse cx="110" cy="120" rx="2.0" ry="1.8" fill="#44863a" transform="rotate(47 110 120)"/><ellipse cx="42" cy="148" rx="2.8" ry="2.1" fill="#78b45c" transform="rotate(21 42 148)"/><ellipse cx="39" cy="109" rx="2.3" ry="1.9" fill="#78b45c" transform="rotate(-21 39 109)"/><ellipse cx="107" cy="117" rx="3.1" ry="1.3" fill="#66a84c" transform="rotate(52 107 117)"/><ellipse cx="114" cy="147" rx="3.4" ry="1.5" fill="#22501c" transform="rotate(67 114 147)"/><ellipse cx="30" cy="70" rx="3.2" ry="1.2" fill="#4f9338" transform="rotate(31 30 70)"/><ellipse cx="122" cy="46" rx="3.0" ry="1.6" fill="#2f6a26" transform="rotate(-28 122 46)"/><ellipse cx="91" cy="133" rx="1.8" ry="2.2" fill="#275a20" transform="rotate(-48 91 133)"/><ellipse cx="72" cy="106" rx="1.7" ry="1.8" fill="#3a7a2c" transform="rotate(68 72 106)"/><ellipse cx="165" cy="45" rx="1.5" ry="2.2" fill="#5a9c42" transform="rotate(-43 165 45)"/><ellipse cx="2" cy="83" rx="2.1" ry="1.7" fill="#1f4a1a" transform="rotate(-41 2 83)"/><ellipse cx="119" cy="71" rx="2.0" ry="2.1" fill="#2f6a26" transform="rotate(51 119 71)"/><ellipse cx="114" cy="93" rx="3.4" ry="1.6" fill="#44863a" transform="rotate(-57 114 93)"/><ellipse cx="90" cy="67" rx="2.5" ry="2.1" fill="#66a84c" transform="rotate(-11 90 67)"/><ellipse cx="136" cy="105" rx="2.0" ry="1.0" fill="#1f4a1a" transform="rotate(-16 136 105)"/><ellipse cx="78" cy="49" rx="1.5" ry="0.9" fill="#3a7a2c" transform="rotate(-17 78 49)"/><ellipse cx="52" cy="139" rx="2.4" ry="1.3" fill="#1f4a1a" transform="rotate(-17 52 139)"/><ellipse cx="70" cy="53" rx="1.9" ry="2.2" fill="#2f6a26" transform="rotate(-16 70 53)"/><ellipse cx="123" cy="62" rx="1.8" ry="0.8" fill="#44863a" transform="rotate(-1 123 62)"/><ellipse cx="45" cy="84" rx="1.5" ry="1.7" fill="#5a9c42" transform="rotate(-36 45 84)"/><ellipse cx="79" cy="95" rx="1.8" ry="1.5" fill="#3a7a2c" transform="rotate(-36 79 95)"/><ellipse cx="42" cy="44" rx="1.9" ry="1.7" fill="#5a9c42" transform="rotate(3 42 44)"/><ellipse cx="145" cy="135" rx="3.3" ry="0.8" fill="#66a84c" transform="rotate(-28 145 135)"/><ellipse cx="88" cy="66" rx="1.9" ry="1.5" fill="#5a9c42" transform="rotate(-21 88 66)"/><ellipse cx="113" cy="126" rx="1.5" ry="0.8" fill="#22501c" transform="rotate(-6 113 126)"/><ellipse cx="154" cy="136" rx="2.5" ry="0.8" fill="#2f6a26" transform="rotate(13 154 136)"/><ellipse cx="115" cy="144" rx="2.7" ry="2.0" fill="#2f6a26" transform="rotate(-3 115 144)"/><ellipse cx="113" cy="115" rx="3.3" ry="1.5" fill="#4f9338" transform="rotate(-27 113 115)"/><ellipse cx="-3" cy="122" rx="2.5" ry="1.7" fill="#5a9c42" transform="rotate(57 -3 122)"/><ellipse cx="21" cy="84" rx="2.5" ry="1.5" fill="#78b45c" transform="rotate(5 21 84)"/><ellipse cx="69" cy="92" rx="1.3" ry="1.8" fill="#44863a" transform="rotate(45 69 92)"/><ellipse cx="132" cy="108" rx="1.3" ry="1.8" fill="#4f9338" transform="rotate(70 132 108)"/><ellipse cx="117" cy="30" rx="1.7" ry="1.7" fill="#4f9338" transform="rotate(30 117 30)"/><ellipse cx="19" cy="61" rx="3.3" ry="1.0" fill="#1f4a1a" transform="rotate(-44 19 61)"/><ellipse cx="92" cy="107" rx="2.9" ry="1.2" fill="#1f4a1a" transform="rotate(11 92 107)"/><ellipse cx="124" cy="135" rx="1.5" ry="1.4" fill="#78b45c" transform="rotate(26 124 135)"/><ellipse cx="80" cy="69" rx="2.7" ry="2.1" fill="#66a84c" transform="rotate(28 80 69)"/><ellipse cx="22" cy="104" rx="2.4" ry="2.1" fill="#22501c" transform="rotate(7 22 104)"/><ellipse cx="139" cy="60" rx="3.4" ry="1.9" fill="#78b45c" transform="rotate(-7 139 60)"/><ellipse cx="55" cy="96" rx="1.3" ry="2.0" fill="#22501c" transform="rotate(13 55 96)"/><ellipse cx="37" cy="134" rx="2.3" ry="1.3" fill="#22501c" transform="rotate(-66 37 134)"/><ellipse cx="160" cy="110" rx="1.7" ry="1.0" fill="#5a9c42" transform="rotate(45 160 110)"/><ellipse cx="20" cy="103" rx="2.0" ry="1.1" fill="#78b45c" transform="rotate(60 20 103)"/><ellipse cx="117" cy="124" rx="2.1" ry="1.8" fill="#78b45c" transform="rotate(21 117 124)"/><ellipse cx="134" cy="79" rx="3.2" ry="1.5" fill="#1f4a1a" transform="rotate(69 134 79)"/><ellipse cx="33" cy="47" rx="1.3" ry="0.9" fill="#66a84c" transform="rotate(-42 33 47)"/><ellipse cx="3" cy="136" rx="2.3" ry="1.9" fill="#3a7a2c" transform="rotate(-10 3 136)"/><ellipse cx="48" cy="142" rx="3.3" ry="1.3" fill="#5a9c42" transform="rotate(-56 48 142)"/><ellipse cx="62" cy="135" rx="1.5" ry="1.2" fill="#44863a" transform="rotate(45 62 135)"/><ellipse cx="125" cy="109" rx="1.3" ry="2.1" fill="#78b45c" transform="rotate(59 125 109)"/><ellipse cx="59" cy="142" rx="2.8" ry="1.7" fill="#5a9c42" transform="rotate(49 59 142)"/><ellipse cx="23" cy="123" rx="1.9" ry="1.4" fill="#275a20" transform="rotate(32 23 123)"/><ellipse cx="24" cy="49" rx="1.3" ry="1.1" fill="#4f9338" transform="rotate(16 24 49)"/><ellipse cx="153" cy="113" rx="2.8" ry="1.1" fill="#78b45c" transform="rotate(-30 153 113)"/><ellipse cx="122" cy="114" rx="1.6" ry="1.1" fill="#275a20" transform="rotate(62 122 114)"/><ellipse cx="107" cy="78" rx="3.4" ry="0.8" fill="#3a7a2c" transform="rotate(-7 107 78)"/><ellipse cx="113" cy="45" rx="1.3" ry="2.0" fill="#22501c" transform="rotate(9 113 45)"/><ellipse cx="158" cy="114" rx="1.7" ry="1.9" fill="#4f9338" transform="rotate(61 158 114)"/><ellipse cx="5" cy="55" rx="1.3" ry="1.4" fill="#3a7a2c" transform="rotate(-63 5 55)"/><ellipse cx="139" cy="80" rx="2.7" ry="2.0" fill="#275a20" transform="rotate(-45 139 80)"/><ellipse cx="83" cy="75" rx="2.4" ry="0.9" fill="#78b45c" transform="rotate(41 83 75)"/><ellipse cx="11" cy="148" rx="1.6" ry="0.9" fill="#275a20" transform="rotate(17 11 148)"/><ellipse cx="72" cy="69" rx="2.2" ry="1.9" fill="#22501c" transform="rotate(18 72 69)"/><ellipse cx="121" cy="139" rx="1.9" ry="1.4" fill="#275a20" transform="rotate(8 121 139)"/><ellipse cx="20" cy="85" rx="3.0" ry="1.2" fill="#2f6a26" transform="rotate(-26 20 85)"/><ellipse cx="11" cy="78" rx="2.5" ry="1.1" fill="#3a7a2c" transform="rotate(-1 11 78)"/><ellipse cx="39" cy="113" rx="3.0" ry="2.0" fill="#4f9338" transform="rotate(-60 39 113)"/><ellipse cx="128" cy="72" rx="3.0" ry="0.8" fill="#44863a" transform="rotate(22 128 72)"/><ellipse cx="127" cy="96" rx="2.2" ry="1.9" fill="#3a7a2c" transform="rotate(32 127 96)"/><ellipse cx="117" cy="58" rx="3.1" ry="1.3" fill="#66a84c" transform="rotate(-25 117 58)"/><ellipse cx="163" cy="128" rx="2.2" ry="1.2" fill="#1f4a1a" transform="rotate(-68 163 128)"/><ellipse cx="58" cy="45" rx="1.6" ry="2.2" fill="#44863a" transform="rotate(4 58 45)"/><ellipse cx="25" cy="113" rx="2.2" ry="2.1" fill="#2f6a26" transform="rotate(-53 25 113)"/><ellipse cx="51" cy="139" rx="2.3" ry="1.4" fill="#5a9c42" transform="rotate(-63 51 139)"/><ellipse cx="142" cy="110" rx="1.7" ry="0.8" fill="#1f4a1a" transform="rotate(-37 142 110)"/><ellipse cx="117" cy="69" rx="2.3" ry="1.1" fill="#275a20" transform="rotate(-28 117 69)"/><ellipse cx="85" cy="120" rx="3.0" ry="1.3" fill="#275a20" transform="rotate(44 85 120)"/><ellipse cx="110" cy="138" rx="1.3" ry="1.5" fill="#78b45c" transform="rotate(-50 110 138)"/><ellipse cx="139" cy="86" rx="1.3" ry="1.0" fill="#4f9338" transform="rotate(36 139 86)"/><ellipse cx="44" cy="140" rx="3.0" ry="1.9" fill="#5a9c42" transform="rotate(26 44 140)"/><ellipse cx="144" cy="103" rx="3.0" ry="1.3" fill="#3a7a2c" transform="rotate(-56 144 103)"/><ellipse cx="100" cy="102" rx="3.1" ry="0.8" fill="#3a7a2c" transform="rotate(15 100 102)"/><ellipse cx="84" cy="87" rx="2.5" ry="1.8" fill="#5a9c42" transform="rotate(68 84 87)"/><ellipse cx="136" cy="140" rx="2.8" ry="1.7" fill="#22501c" transform="rotate(-49 136 140)"/><ellipse cx="68" cy="145" rx="1.2" ry="1.9" fill="#275a20" transform="rotate(-30 68 145)"/><ellipse cx="96" cy="120" rx="2.8" ry="1.2" fill="#3a7a2c" transform="rotate(-32 96 120)"/><ellipse cx="119" cy="33" rx="2.7" ry="2.1" fill="#78b45c" transform="rotate(26 119 33)"/><ellipse cx="140" cy="117" rx="2.6" ry="1.1" fill="#22501c" transform="rotate(-57 140 117)"/><ellipse cx="17" cy="67" rx="3.0" ry="1.4" fill="#3a7a2c" transform="rotate(24 17 67)"/><ellipse cx="61" cy="119" rx="2.4" ry="1.1" fill="#1f4a1a" transform="rotate(-25 61 119)"/><ellipse cx="52" cy="130" rx="3.2" ry="1.8" fill="#78b45c" transform="rotate(-35 52 130)"/><ellipse cx="13" cy="61" rx="3.0" ry="1.9" fill="#4f9338" transform="rotate(56 13 61)"/><ellipse cx="25" cy="104" rx="3.0" ry="1.1" fill="#4f9338" transform="rotate(10 25 104)"/><ellipse cx="104" cy="105" rx="2.5" ry="1.4" fill="#275a20" transform="rotate(-10 104 105)"/><ellipse cx="87" cy="138" rx="1.9" ry="1.2" fill="#1f4a1a" transform="rotate(55 87 138)"/><ellipse cx="53" cy="77" rx="1.5" ry="1.2" fill="#22501c" transform="rotate(14 53 77)"/><ellipse cx="28" cy="48" rx="2.6" ry="1.7" fill="#78b45c" transform="rotate(32 28 48)"/><ellipse cx="7" cy="85" rx="3.1" ry="2.1" fill="#78b45c" transform="rotate(-43 7 85)"/><ellipse cx="76" cy="72" rx="3.3" ry="2.1" fill="#1f4a1a" transform="rotate(48 76 72)"/><ellipse cx="102" cy="37" rx="2.9" ry="1.9" fill="#66a84c" transform="rotate(30 102 37)"/><ellipse cx="155" cy="145" rx="2.6" ry="2.2" fill="#4f9338" transform="rotate(-19 155 145)"/><ellipse cx="136" cy="49" rx="1.9" ry="1.0" fill="#4f9338" transform="rotate(-36 136 49)"/><ellipse cx="158" cy="83" rx="1.2" ry="2.2" fill="#78b45c" transform="rotate(-51 158 83)"/><ellipse cx="-3" cy="72" rx="2.0" ry="1.8" fill="#5a9c42" transform="rotate(36 -3 72)"/><ellipse cx="120" cy="61" rx="1.5" ry="1.5" fill="#78b45c" transform="rotate(35 120 61)"/><ellipse cx="30" cy="67" rx="1.5" ry="2.1" fill="#4f9338" transform="rotate(11 30 67)"/><ellipse cx="47" cy="66" rx="3.2" ry="1.5" fill="#3a7a2c" transform="rotate(-39 47 66)"/><ellipse cx="166" cy="58" rx="2.9" ry="1.0" fill="#4f9338" transform="rotate(7 166 58)"/><ellipse cx="70" cy="47" rx="3.1" ry="2.0" fill="#275a20" transform="rotate(-57 70 47)"/><ellipse cx="57" cy="126" rx="1.2" ry="1.9" fill="#78b45c" transform="rotate(43 57 126)"/><ellipse cx="-0" cy="95" rx="3.4" ry="2.0" fill="#4f9338" transform="rotate(-63 -0 95)"/><ellipse cx="34" cy="147" rx="2.2" ry="1.5" fill="#4f9338" transform="rotate(64 34 147)"/><ellipse cx="99" cy="130" rx="2.3" ry="0.8" fill="#66a84c" transform="rotate(-15 99 130)"/><ellipse cx="130" cy="79" rx="2.6" ry="2.1" fill="#1f4a1a" transform="rotate(19 130 79)"/><ellipse cx="2" cy="27" rx="2.2" ry="2.0" fill="#2f6a26" transform="rotate(58 2 27)"/><ellipse cx="61" cy="150" rx="2.9" ry="2.0" fill="#66a84c" transform="rotate(-28 61 150)"/><ellipse cx="29" cy="129" rx="1.4" ry="1.3" fill="#2f6a26" transform="rotate(-11 29 129)"/><ellipse cx="43" cy="83" rx="1.9" ry="1.7" fill="#4f9338" transform="rotate(38 43 83)"/><ellipse cx="126" cy="34" rx="1.3" ry="1.4" fill="#66a84c" transform="rotate(-42 126 34)"/><ellipse cx="-1" cy="128" rx="3.4" ry="1.6" fill="#66a84c" transform="rotate(-4 -1 128)"/><ellipse cx="9" cy="70" rx="2.6" ry="0.8" fill="#2f6a26" transform="rotate(-58 9 70)"/><ellipse cx="19" cy="106" rx="2.0" ry="1.1" fill="#44863a" transform="rotate(3 19 106)"/><ellipse cx="164" cy="112" rx="1.4" ry="1.0" fill="#2f6a26" transform="rotate(-18 164 112)"/><ellipse cx="59" cy="84" rx="2.5" ry="2.2" fill="#275a20" transform="rotate(65 59 84)"/><ellipse cx="62" cy="54" rx="2.7" ry="0.9" fill="#3a7a2c" transform="rotate(38 62 54)"/><ellipse cx="68" cy="88" rx="2.6" ry="1.9" fill="#3a7a2c" transform="rotate(43 68 88)"/><ellipse cx="37" cy="111" rx="3.2" ry="1.9" fill="#22501c" transform="rotate(-28 37 111)"/><ellipse cx="73" cy="107" rx="3.3" ry="1.3" fill="#22501c" transform="rotate(-31 73 107)"/><ellipse cx="96" cy="99" rx="2.1" ry="1.3" fill="#66a84c" transform="rotate(13 96 99)"/><ellipse cx="113" cy="105" rx="1.3" ry="1.1" fill="#1f4a1a" transform="rotate(-16 113 105)"/><ellipse cx="155" cy="62" rx="2.5" ry="2.0" fill="#66a84c" transform="rotate(-6 155 62)"/><ellipse cx="93" cy="29" rx="1.5" ry="2.0" fill="#78b45c" transform="rotate(65 93 29)"/><ellipse cx="41" cy="59" rx="3.0" ry="1.8" fill="#44863a" transform="rotate(-35 41 59)"/><ellipse cx="0" cy="56" rx="1.6" ry="1.9" fill="#44863a" transform="rotate(13 0 56)"/><ellipse cx="147" cy="139" rx="3.1" ry="1.6" fill="#1f4a1a" transform="rotate(-63 147 139)"/><ellipse cx="123" cy="95" rx="1.2" ry="0.9" fill="#1f4a1a" transform="rotate(-1 123 95)"/><ellipse cx="16" cy="115" rx="2.6" ry="1.7" fill="#275a20" transform="rotate(5 16 115)"/><ellipse cx="116" cy="113" rx="2.9" ry="1.6" fill="#3a7a2c" transform="rotate(-61 116 113)"/><ellipse cx="75" cy="106" rx="3.3" ry="1.8" fill="#4f9338" transform="rotate(64 75 106)"/><ellipse cx="113" cy="58" rx="2.1" ry="1.2" fill="#5a9c42" transform="rotate(-28 113 58)"/><ellipse cx="-4" cy="120" rx="2.4" ry="2.1" fill="#5a9c42" transform="rotate(-17 -4 120)"/><ellipse cx="109" cy="143" rx="1.9" ry="1.7" fill="#5a9c42" transform="rotate(-58 109 143)"/><ellipse cx="103" cy="106" rx="1.6" ry="1.0" fill="#5a9c42" transform="rotate(-46 103 106)"/><ellipse cx="82" cy="142" rx="2.0" ry="0.8" fill="#2f6a26" transform="rotate(-33 82 142)"/><ellipse cx="81" cy="92" rx="3.3" ry="1.6" fill="#66a84c" transform="rotate(-11 81 92)"/><ellipse cx="131" cy="129" rx="1.9" ry="1.0" fill="#44863a" transform="rotate(-10 131 129)"/><ellipse cx="142" cy="89" rx="2.3" ry="1.8" fill="#4f9338" transform="rotate(64 142 89)"/><ellipse cx="16" cy="121" rx="2.0" ry="0.9" fill="#44863a" transform="rotate(48 16 121)"/><ellipse cx="96" cy="30" rx="2.1" ry="1.7" fill="#44863a" transform="rotate(-56 96 30)"/><ellipse cx="144" cy="135" rx="1.9" ry="1.2" fill="#78b45c" transform="rotate(-13 144 135)"/><ellipse cx="27" cy="143" rx="3.0" ry="2.1" fill="#22501c" transform="rotate(-13 27 143)"/><ellipse cx="158" cy="92" rx="2.7" ry="1.8" fill="#78b45c" transform="rotate(61 158 92)"/><ellipse cx="159" cy="83" rx="1.4" ry="1.9" fill="#4f9338" transform="rotate(16 159 83)"/><ellipse cx="12" cy="106" rx="2.7" ry="1.3" fill="#4f9338" transform="rotate(-32 12 106)"/><ellipse cx="91" cy="147" rx="2.2" ry="1.1" fill="#22501c" transform="rotate(67 91 147)"/><ellipse cx="19" cy="107" rx="1.6" ry="1.1" fill="#22501c" transform="rotate(-60 19 107)"/><ellipse cx="49" cy="132" rx="2.7" ry="1.2" fill="#22501c" transform="rotate(58 49 132)"/><ellipse cx="95" cy="87" rx="1.9" ry="1.8" fill="#44863a" transform="rotate(-6 95 87)"/><ellipse cx="65" cy="113" rx="1.4" ry="1.6" fill="#5a9c42" transform="rotate(27 65 113)"/><ellipse cx="121" cy="37" rx="1.5" ry="1.0" fill="#4f9338" transform="rotate(31 121 37)"/><ellipse cx="40" cy="82" rx="2.8" ry="1.9" fill="#5a9c42" transform="rotate(-55 40 82)"/><ellipse cx="96" cy="56" rx="2.0" ry="0.9" fill="#22501c" transform="rotate(-53 96 56)"/><ellipse cx="127" cy="66" rx="2.6" ry="1.7" fill="#5a9c42" transform="rotate(52 127 66)"/><ellipse cx="86" cy="100" rx="2.6" ry="0.9" fill="#44863a" transform="rotate(-51 86 100)"/><ellipse cx="68" cy="76" rx="3.4" ry="1.0" fill="#275a20" transform="rotate(36 68 76)"/><ellipse cx="121" cy="24" rx="1.9" ry="2.0" fill="#44863a" transform="rotate(-11 121 24)"/><ellipse cx="140" cy="109" rx="2.0" ry="1.8" fill="#22501c" transform="rotate(-24 140 109)"/><ellipse cx="115" cy="123" rx="1.2" ry="1.6" fill="#3a7a2c" transform="rotate(5 115 123)"/><ellipse cx="79" cy="83" rx="2.1" ry="1.1" fill="#3a7a2c" transform="rotate(-3 79 83)"/><ellipse cx="17" cy="50" rx="3.4" ry="2.0" fill="#275a20" transform="rotate(23 17 50)"/><ellipse cx="145" cy="105" rx="3.3" ry="1.1" fill="#275a20" transform="rotate(11 145 105)"/><ellipse cx="124" cy="87" rx="2.2" ry="1.2" fill="#4f9338" transform="rotate(-18 124 87)"/><ellipse cx="99" cy="119" rx="2.2" ry="1.8" fill="#3a7a2c" transform="rotate(55 99 119)"/><ellipse cx="76" cy="48" rx="1.6" ry="1.0" fill="#5a9c42" transform="rotate(56 76 48)"/><ellipse cx="77" cy="60" rx="1.4" ry="1.9" fill="#1f4a1a" transform="rotate(17 77 60)"/><ellipse cx="140" cy="101" rx="2.8" ry="2.0" fill="#1f4a1a" transform="rotate(-41 140 101)"/><ellipse cx="108" cy="80" rx="2.4" ry="2.2" fill="#78b45c" transform="rotate(-42 108 80)"/><ellipse cx="88" cy="136" rx="1.6" ry="1.4" fill="#3a7a2c" transform="rotate(-10 88 136)"/><ellipse cx="48" cy="116" rx="2.1" ry="1.0" fill="#4f9338" transform="rotate(55 48 116)"/><ellipse cx="115" cy="51" rx="2.1" ry="1.4" fill="#2f6a26" transform="rotate(65 115 51)"/><ellipse cx="43" cy="90" rx="1.7" ry="1.8" fill="#44863a" transform="rotate(37 43 90)"/><ellipse cx="146" cy="140" rx="3.0" ry="1.4" fill="#22501c" transform="rotate(54 146 140)"/><ellipse cx="119" cy="80" rx="1.6" ry="1.3" fill="#44863a" transform="rotate(30 119 80)"/><ellipse cx="145" cy="30" rx="3.4" ry="1.0" fill="#4f9338" transform="rotate(29 145 30)"/><ellipse cx="70" cy="127" rx="2.6" ry="1.1" fill="#22501c" transform="rotate(-49 70 127)"/><ellipse cx="91" cy="145" rx="3.1" ry="1.3" fill="#4f9338" transform="rotate(-2 91 145)"/><ellipse cx="59" cy="149" rx="2.9" ry="1.3" fill="#5a9c42" transform="rotate(-33 59 149)"/><ellipse cx="94" cy="136" rx="2.0" ry="2.2" fill="#2f6a26" transform="rotate(-46 94 136)"/><ellipse cx="69" cy="79" rx="3.1" ry="1.1" fill="#44863a" transform="rotate(-55 69 79)"/><ellipse cx="84" cy="122" rx="2.3" ry="0.9" fill="#1f4a1a" transform="rotate(-26 84 122)"/><ellipse cx="10" cy="65" rx="1.6" ry="1.3" fill="#3a7a2c" transform="rotate(-27 10 65)"/><ellipse cx="10" cy="105" rx="3.3" ry="1.7" fill="#3a7a2c" transform="rotate(-2 10 105)"/><ellipse cx="147" cy="51" rx="1.9" ry="1.4" fill="#1f4a1a" transform="rotate(-7 147 51)"/><ellipse cx="8" cy="109" rx="1.8" ry="1.2" fill="#4f9338" transform="rotate(13 8 109)"/><ellipse cx="9" cy="71" rx="2.2" ry="1.0" fill="#2f6a26" transform="rotate(-58 9 71)"/><ellipse cx="55" cy="50" rx="2.8" ry="1.4" fill="#4f9338" transform="rotate(46 55 50)"/><ellipse cx="81" cy="28" rx="2.8" ry="2.1" fill="#1f4a1a" transform="rotate(-38 81 28)"/><ellipse cx="45" cy="57" rx="3.1" ry="1.5" fill="#78b45c" transform="rotate(2 45 57)"/><ellipse cx="12" cy="88" rx="3.2" ry="1.4" fill="#275a20" transform="rotate(16 12 88)"/><ellipse cx="66" cy="78" rx="1.5" ry="1.4" fill="#3a7a2c" transform="rotate(-27 66 78)"/><ellipse cx="59" cy="100" rx="2.6" ry="1.0" fill="#5a9c42" transform="rotate(-50 59 100)"/><ellipse cx="49" cy="96" rx="2.6" ry="1.8" fill="#3a7a2c" transform="rotate(-61 49 96)"/><ellipse cx="10" cy="103" rx="1.9" ry="1.7" fill="#3a7a2c" transform="rotate(-9 10 103)"/><ellipse cx="47" cy="112" rx="2.4" ry="2.2" fill="#1f4a1a" transform="rotate(49 47 112)"/><ellipse cx="141" cy="102" rx="3.1" ry="1.0" fill="#5a9c42" transform="rotate(70 141 102)"/><ellipse cx="43" cy="140" rx="2.0" ry="1.7" fill="#4f9338" transform="rotate(-15 43 140)"/><ellipse cx="143" cy="150" rx="1.5" ry="1.8" fill="#22501c" transform="rotate(-6 143 150)"/><ellipse cx="44" cy="46" rx="2.1" ry="2.1" fill="#2f6a26" transform="rotate(-26 44 46)"/><ellipse cx="30" cy="44" rx="2.4" ry="1.0" fill="#2f6a26" transform="rotate(-65 30 44)"/><ellipse cx="137" cy="107" rx="1.8" ry="1.5" fill="#1f4a1a" transform="rotate(23 137 107)"/><ellipse cx="13" cy="66" rx="2.0" ry="2.0" fill="#3a7a2c" transform="rotate(-64 13 66)"/><ellipse cx="82" cy="58" rx="2.4" ry="0.9" fill="#275a20" transform="rotate(69 82 58)"/><ellipse cx="53" cy="64" rx="2.0" ry="0.8" fill="#4f9338" transform="rotate(36 53 64)"/><ellipse cx="15" cy="111" rx="1.5" ry="2.1" fill="#4f9338" transform="rotate(38 15 111)"/><ellipse cx="150" cy="98" rx="3.3" ry="1.3" fill="#78b45c" transform="rotate(-34 150 98)"/><ellipse cx="25" cy="58" rx="1.4" ry="1.0" fill="#5a9c42" transform="rotate(47 25 58)"/><ellipse cx="128" cy="83" rx="1.7" ry="0.9" fill="#22501c" transform="rotate(-39 128 83)"/><ellipse cx="124" cy="140" rx="1.9" ry="1.1" fill="#1f4a1a" transform="rotate(-2 124 140)"/><ellipse cx="140" cy="118" rx="2.6" ry="1.3" fill="#2f6a26" transform="rotate(-21 140 118)"/><ellipse cx="42" cy="51" rx="3.1" ry="1.6" fill="#5a9c42" transform="rotate(-49 42 51)"/><ellipse cx="-2" cy="98" rx="1.7" ry="0.8" fill="#44863a" transform="rotate(-58 -2 98)"/><ellipse cx="37" cy="72" rx="2.7" ry="1.1" fill="#66a84c" transform="rotate(-41 37 72)"/><ellipse cx="117" cy="116" rx="2.3" ry="2.0" fill="#44863a" transform="rotate(27 117 116)"/><ellipse cx="10" cy="48" rx="2.3" ry="1.6" fill="#4f9338" transform="rotate(25 10 48)"/><ellipse cx="106" cy="96" rx="3.4" ry="2.2" fill="#3a7a2c" transform="rotate(-28 106 96)"/><ellipse cx="92" cy="100" rx="2.7" ry="1.2" fill="#44863a" transform="rotate(47 92 100)"/><ellipse cx="143" cy="100" rx="2.0" ry="1.1" fill="#22501c" transform="rotate(8 143 100)"/><ellipse cx="29" cy="37" rx="1.2" ry="1.5" fill="#44863a" transform="rotate(6 29 37)"/><ellipse cx="30" cy="114" rx="1.8" ry="2.0" fill="#44863a" transform="rotate(-59 30 114)"/><ellipse cx="56" cy="112" rx="2.6" ry="0.8" fill="#275a20" transform="rotate(62 56 112)"/><ellipse cx="135" cy="72" rx="3.1" ry="0.9" fill="#2f6a26" transform="rotate(-2 135 72)"/><ellipse cx="22" cy="108" rx="2.9" ry="1.5" fill="#22501c" transform="rotate(-61 22 108)"/><ellipse cx="166" cy="74" rx="2.6" ry="1.1" fill="#44863a" transform="rotate(-24 166 74)"/><ellipse cx="114" cy="70" rx="2.6" ry="1.7" fill="#66a84c" transform="rotate(60 114 70)"/><ellipse cx="118" cy="113" rx="2.8" ry="1.1" fill="#1f4a1a" transform="rotate(40 118 113)"/><ellipse cx="110" cy="60" rx="3.5" ry="1.4" fill="#5a9c42" transform="rotate(3 110 60)"/><ellipse cx="120" cy="120" rx="2.3" ry="2.1" fill="#5a9c42" transform="rotate(18 120 120)"/><ellipse cx="37" cy="54" rx="2.8" ry="1.1" fill="#66a84c" transform="rotate(-58 37 54)"/><ellipse cx="130" cy="106" rx="2.4" ry="1.9" fill="#66a84c" transform="rotate(-68 130 106)"/><ellipse cx="116" cy="110" rx="1.5" ry="1.0" fill="#3a7a2c" transform="rotate(46 116 110)"/><ellipse cx="7" cy="78" rx="3.3" ry="2.1" fill="#3a7a2c" transform="rotate(-23 7 78)"/><ellipse cx="128" cy="91" rx="2.7" ry="1.7" fill="#78b45c" transform="rotate(30 128 91)"/><ellipse cx="163" cy="86" rx="2.3" ry="1.7" fill="#22501c" transform="rotate(-25 163 86)"/><ellipse cx="128" cy="98" rx="1.2" ry="2.2" fill="#275a20" transform="rotate(-43 128 98)"/><ellipse cx="156" cy="59" rx="1.9" ry="1.9" fill="#275a20" transform="rotate(-8 156 59)"/><ellipse cx="7" cy="87" rx="3.3" ry="1.1" fill="#2f6a26" transform="rotate(-34 7 87)"/><ellipse cx="22" cy="64" rx="3.0" ry="2.1" fill="#78b45c" transform="rotate(37 22 64)"/><ellipse cx="40" cy="91" rx="2.6" ry="0.9" fill="#4f9338" transform="rotate(-56 40 91)"/><ellipse cx="48" cy="42" rx="1.7" ry="1.3" fill="#66a84c" transform="rotate(-64 48 42)"/><ellipse cx="150" cy="77" rx="1.2" ry="1.2" fill="#22501c" transform="rotate(30 150 77)"/><ellipse cx="123" cy="126" rx="1.2" ry="1.2" fill="#5a9c42" transform="rotate(-51 123 126)"/><ellipse cx="120" cy="103" rx="2.0" ry="2.1" fill="#44863a" transform="rotate(-31 120 103)"/><ellipse cx="71" cy="145" rx="1.2" ry="1.5" fill="#5a9c42" transform="rotate(-56 71 145)"/><ellipse cx="86" cy="33" rx="1.5" ry="1.6" fill="#22501c" transform="rotate(17 86 33)"/><ellipse cx="86" cy="109" rx="2.7" ry="1.5" fill="#78b45c" transform="rotate(-42 86 109)"/><ellipse cx="118" cy="27" rx="2.2" ry="2.1" fill="#5a9c42" transform="rotate(-23 118 27)"/><ellipse cx="36" cy="64" rx="2.3" ry="1.1" fill="#5a9c42" transform="rotate(-2 36 64)"/><ellipse cx="8" cy="35" rx="2.5" ry="1.2" fill="#2f6a26" transform="rotate(-64 8 35)"/><ellipse cx="149" cy="142" rx="2.7" ry="0.9" fill="#2f6a26" transform="rotate(2 149 142)"/><ellipse cx="114" cy="122" rx="2.2" ry="1.1" fill="#5a9c42" transform="rotate(10 114 122)"/><ellipse cx="145" cy="80" rx="1.6" ry="1.3" fill="#4f9338" transform="rotate(54 145 80)"/><ellipse cx="47" cy="148" rx="1.9" ry="2.1" fill="#1f4a1a" transform="rotate(61 47 148)"/><ellipse cx="109" cy="138" rx="2.8" ry="0.9" fill="#78b45c" transform="rotate(-18 109 138)"/><ellipse cx="131" cy="131" rx="2.1" ry="1.4" fill="#1f4a1a" transform="rotate(-33 131 131)"/><ellipse cx="67" cy="143" rx="2.6" ry="1.9" fill="#3a7a2c" transform="rotate(-22 67 143)"/><ellipse cx="4" cy="122" rx="3.3" ry="1.4" fill="#22501c" transform="rotate(16 4 122)"/><ellipse cx="78" cy="115" rx="2.2" ry="1.1" fill="#275a20" transform="rotate(-15 78 115)"/><ellipse cx="93" cy="72" rx="1.9" ry="1.1" fill="#66a84c" transform="rotate(-12 93 72)"/><ellipse cx="44" cy="122" rx="2.3" ry="1.0" fill="#3a7a2c" transform="rotate(36 44 122)"/><ellipse cx="53" cy="112" rx="3.0" ry="1.0" fill="#275a20" transform="rotate(63 53 112)"/><ellipse cx="71" cy="124" rx="3.3" ry="1.7" fill="#1f4a1a" transform="rotate(-66 71 124)"/><ellipse cx="133" cy="99" rx="1.4" ry="1.9" fill="#22501c" transform="rotate(-67 133 99)"/><ellipse cx="114" cy="65" rx="1.8" ry="0.8" fill="#3a7a2c" transform="rotate(51 114 65)"/><ellipse cx="92" cy="143" rx="2.8" ry="2.0" fill="#4f9338" transform="rotate(28 92 143)"/><ellipse cx="34" cy="149" rx="1.6" ry="1.6" fill="#78b45c" transform="rotate(-30 34 149)"/><ellipse cx="149" cy="101" rx="2.8" ry="1.0" fill="#5a9c42" transform="rotate(-30 149 101)"/><ellipse cx="102" cy="117" rx="1.9" ry="1.2" fill="#78b45c" transform="rotate(-65 102 117)"/><ellipse cx="45" cy="74" rx="2.6" ry="1.9" fill="#275a20" transform="rotate(-33 45 74)"/><ellipse cx="99" cy="147" rx="2.6" ry="2.0" fill="#66a84c" transform="rotate(-0 99 147)"/><ellipse cx="69" cy="83" rx="2.1" ry="1.9" fill="#1f4a1a" transform="rotate(-34 69 83)"/><ellipse cx="142" cy="149" rx="3.0" ry="1.7" fill="#275a20" transform="rotate(12 142 149)"/><ellipse cx="122" cy="68" rx="1.5" ry="1.9" fill="#275a20" transform="rotate(37 122 68)"/><ellipse cx="63" cy="41" rx="1.7" ry="1.7" fill="#4f9338" transform="rotate(-32 63 41)"/><ellipse cx="-4" cy="98" rx="3.0" ry="1.6" fill="#275a20" transform="rotate(11 -4 98)"/><ellipse cx="150" cy="88" rx="2.3" ry="1.0" fill="#66a84c" transform="rotate(7 150 88)"/><ellipse cx="100" cy="139" rx="2.6" ry="1.5" fill="#66a84c" transform="rotate(18 100 139)"/><ellipse cx="66" cy="58" rx="2.8" ry="1.3" fill="#3a7a2c" transform="rotate(-12 66 58)"/><ellipse cx="166" cy="98" rx="2.3" ry="1.5" fill="#2f6a26" transform="rotate(44 166 98)"/><ellipse cx="52" cy="68" rx="2.9" ry="1.8" fill="#2f6a26" transform="rotate(-53 52 68)"/><ellipse cx="120" cy="143" rx="2.9" ry="1.8" fill="#3a7a2c" transform="rotate(-43 120 143)"/><ellipse cx="135" cy="91" rx="3.4" ry="1.3" fill="#2f6a26" transform="rotate(69 135 91)"/><ellipse cx="54" cy="73" rx="1.5" ry="1.8" fill="#4f9338" transform="rotate(24 54 73)"/><ellipse cx="85" cy="33" rx="3.3" ry="1.4" fill="#78b45c" transform="rotate(-16 85 33)"/><ellipse cx="99" cy="48" rx="3.5" ry="0.9" fill="#44863a" transform="rotate(-33 99 48)"/><ellipse cx="122" cy="138" rx="2.6" ry="1.1" fill="#1f4a1a" transform="rotate(-25 122 138)"/><ellipse cx="18" cy="100" rx="1.2" ry="1.4" fill="#275a20" transform="rotate(-63 18 100)"/><ellipse cx="-4" cy="71" rx="1.8" ry="1.5" fill="#4f9338" transform="rotate(-7 -4 71)"/><ellipse cx="9" cy="134" rx="1.6" ry="1.9" fill="#3a7a2c" transform="rotate(40 9 134)"/><ellipse cx="95" cy="104" rx="2.5" ry="2.0" fill="#4f9338" transform="rotate(45 95 104)"/><ellipse cx="77" cy="137" rx="3.2" ry="1.6" fill="#275a20" transform="rotate(15 77 137)"/><ellipse cx="143" cy="112" rx="2.1" ry="1.0" fill="#4f9338" transform="rotate(29 143 112)"/><ellipse cx="77" cy="58" rx="2.0" ry="2.1" fill="#5a9c42" transform="rotate(12 77 58)"/><ellipse cx="37" cy="48" rx="3.3" ry="2.0" fill="#4f9338" transform="rotate(32 37 48)"/><ellipse cx="63" cy="84" rx="2.8" ry="1.2" fill="#1f4a1a" transform="rotate(-3 63 84)"/><ellipse cx="-1" cy="26" rx="3.3" ry="1.0" fill="#2f6a26" transform="rotate(58 -1 26)"/><ellipse cx="41" cy="67" rx="1.4" ry="1.2" fill="#275a20" transform="rotate(-19 41 67)"/><ellipse cx="140" cy="147" rx="2.8" ry="1.1" fill="#2f6a26" transform="rotate(31 140 147)"/><ellipse cx="80" cy="126" rx="1.3" ry="2.2" fill="#22501c" transform="rotate(7 80 126)"/><ellipse cx="167" cy="125" rx="3.4" ry="2.1" fill="#4f9338" transform="rotate(-53 167 125)"/><ellipse cx="18" cy="117" rx="2.0" ry="0.9" fill="#5a9c42" transform="rotate(62 18 117)"/><ellipse cx="156" cy="53" rx="3.3" ry="1.5" fill="#275a20" transform="rotate(-5 156 53)"/><ellipse cx="89" cy="57" rx="2.9" ry="1.3" fill="#275a20" transform="rotate(29 89 57)"/><ellipse cx="68" cy="71" rx="2.5" ry="0.8" fill="#5a9c42" transform="rotate(33 68 71)"/><ellipse cx="95" cy="65" rx="2.4" ry="2.0" fill="#4f9338" transform="rotate(70 95 65)"/><ellipse cx="132" cy="82" rx="2.3" ry="2.1" fill="#22501c" transform="rotate(-59 132 82)"/><ellipse cx="120" cy="129" rx="2.5" ry="2.0" fill="#275a20" transform="rotate(70 120 129)"/><ellipse cx="167" cy="144" rx="1.3" ry="0.9" fill="#78b45c" transform="rotate(-10 167 144)"/><ellipse cx="59" cy="150" rx="1.7" ry="2.2" fill="#66a84c" transform="rotate(-34 59 150)"/><ellipse cx="60" cy="33" rx="2.5" ry="1.6" fill="#44863a" transform="rotate(32 60 33)"/><ellipse cx="122" cy="58" rx="2.2" ry="1.3" fill="#2f6a26" transform="rotate(68 122 58)"/><ellipse cx="72" cy="55" rx="3.4" ry="2.1" fill="#66a84c" transform="rotate(-41 72 55)"/><ellipse cx="95" cy="123" rx="1.7" ry="1.1" fill="#2f6a26" transform="rotate(-47 95 123)"/><ellipse cx="57" cy="128" rx="2.1" ry="1.0" fill="#78b45c" transform="rotate(-59 57 128)"/><ellipse cx="53" cy="108" rx="3.1" ry="1.8" fill="#1f4a1a" transform="rotate(56 53 108)"/><ellipse cx="99" cy="72" rx="2.5" ry="1.6" fill="#66a84c" transform="rotate(-66 99 72)"/><ellipse cx="108" cy="88" rx="1.2" ry="1.5" fill="#4f9338" transform="rotate(20 108 88)"/><ellipse cx="53" cy="54" rx="2.6" ry="1.6" fill="#44863a" transform="rotate(-48 53 54)"/><ellipse cx="13" cy="121" rx="2.0" ry="1.7" fill="#22501c" transform="rotate(-49 13 121)"/><ellipse cx="148" cy="57" rx="2.6" ry="1.1" fill="#66a84c" transform="rotate(28 148 57)"/><ellipse cx="27" cy="77" rx="2.7" ry="1.8" fill="#66a84c" transform="rotate(-12 27 77)"/><ellipse cx="87" cy="133" rx="1.6" ry="1.9" fill="#1f4a1a" transform="rotate(-43 87 133)"/><ellipse cx="130" cy="148" rx="1.7" ry="1.8" fill="#2f6a26" transform="rotate(17 130 148)"/><ellipse cx="164" cy="102" rx="3.0" ry="0.8" fill="#5a9c42" transform="rotate(-34 164 102)"/><ellipse cx="141" cy="138" rx="2.8" ry="1.4" fill="#78b45c" transform="rotate(21 141 138)"/><ellipse cx="7" cy="112" rx="3.5" ry="1.9" fill="#5a9c42" transform="rotate(-43 7 112)"/><ellipse cx="113" cy="69" rx="2.3" ry="1.6" fill="#44863a" transform="rotate(29 113 69)"/><ellipse cx="114" cy="78" rx="2.3" ry="1.1" fill="#5a9c42" transform="rotate(-10 114 78)"/><ellipse cx="80" cy="74" rx="2.3" ry="1.3" fill="#5a9c42" transform="rotate(-69 80 74)"/><ellipse cx="168" cy="123" rx="1.3" ry="2.0" fill="#44863a" transform="rotate(-22 168 123)"/><ellipse cx="149" cy="142" rx="1.4" ry="1.7" fill="#2f6a26" transform="rotate(-39 149 142)"/><ellipse cx="11" cy="94" rx="2.6" ry="1.9" fill="#5a9c42" transform="rotate(-35 11 94)"/><ellipse cx="133" cy="73" rx="1.6" ry="1.9" fill="#1f4a1a" transform="rotate(50 133 73)"/><ellipse cx="154" cy="49" rx="2.4" ry="0.9" fill="#78b45c" transform="rotate(20 154 49)"/><ellipse cx="70" cy="130" rx="1.5" ry="1.2" fill="#78b45c" transform="rotate(-33 70 130)"/><ellipse cx="114" cy="102" rx="2.0" ry="1.7" fill="#2f6a26" transform="rotate(-51 114 102)"/><ellipse cx="111" cy="97" rx="3.2" ry="2.0" fill="#3a7a2c" transform="rotate(-24 111 97)"/><ellipse cx="18" cy="134" rx="3.5" ry="1.4" fill="#275a20" transform="rotate(-23 18 134)"/><ellipse cx="64" cy="55" rx="2.5" ry="2.1" fill="#66a84c" transform="rotate(4 64 55)"/><ellipse cx="109" cy="109" rx="3.1" ry="1.8" fill="#22501c" transform="rotate(-28 109 109)"/><ellipse cx="153" cy="145" rx="2.7" ry="1.2" fill="#1f4a1a" transform="rotate(-23 153 145)"/><ellipse cx="146" cy="77" rx="2.8" ry="1.9" fill="#5a9c42" transform="rotate(35 146 77)"/><ellipse cx="49" cy="79" rx="3.2" ry="1.0" fill="#4f9338" transform="rotate(-59 49 79)"/><ellipse cx="3" cy="99" rx="2.2" ry="1.6" fill="#44863a" transform="rotate(2 3 99)"/><ellipse cx="58" cy="75" rx="1.3" ry="2.1" fill="#4f9338" transform="rotate(-47 58 75)"/><ellipse cx="61" cy="125" rx="2.0" ry="0.8" fill="#275a20" transform="rotate(-50 61 125)"/><ellipse cx="137" cy="49" rx="1.5" ry="1.8" fill="#22501c" transform="rotate(-28 137 49)"/><ellipse cx="62" cy="117" rx="1.9" ry="1.4" fill="#66a84c" transform="rotate(-52 62 117)"/><ellipse cx="158" cy="136" rx="3.5" ry="1.1" fill="#275a20" transform="rotate(32 158 136)"/><ellipse cx="117" cy="54" rx="2.7" ry="1.6" fill="#1f4a1a" transform="rotate(-1 117 54)"/><ellipse cx="82" cy="144" rx="1.5" ry="1.1" fill="#1f4a1a" transform="rotate(44 82 144)"/><ellipse cx="20" cy="115" rx="3.1" ry="1.9" fill="#44863a" transform="rotate(5 20 115)"/><ellipse cx="34" cy="65" rx="3.3" ry="1.5" fill="#3a7a2c" transform="rotate(54 34 65)"/><ellipse cx="27" cy="99" rx="1.9" ry="1.9" fill="#3a7a2c" transform="rotate(18 27 99)"/><ellipse cx="102" cy="86" rx="3.3" ry="2.0" fill="#3a7a2c" transform="rotate(32 102 86)"/><ellipse cx="120" cy="49" rx="2.3" ry="1.2" fill="#275a20" transform="rotate(-48 120 49)"/><ellipse cx="125" cy="49" rx="2.0" ry="1.1" fill="#5a9c42" transform="rotate(-67 125 49)"/><ellipse cx="27" cy="105" rx="2.8" ry="1.3" fill="#1f4a1a" transform="rotate(-15 27 105)"/><ellipse cx="68" cy="55" rx="2.6" ry="2.1" fill="#22501c" transform="rotate(10 68 55)"/><ellipse cx="-4" cy="58" rx="2.1" ry="0.9" fill="#4f9338" transform="rotate(-50 -4 58)"/><ellipse cx="99" cy="112" rx="1.7" ry="2.1" fill="#66a84c" transform="rotate(19 99 112)"/><ellipse cx="69" cy="73" rx="3.4" ry="2.1" fill="#66a84c" transform="rotate(-45 69 73)"/><ellipse cx="74" cy="100" rx="1.2" ry="1.2" fill="#44863a" transform="rotate(8 74 100)"/><ellipse cx="97" cy="31" rx="3.4" ry="1.9" fill="#44863a" transform="rotate(-24 97 31)"/><ellipse cx="12" cy="42" rx="3.5" ry="2.1" fill="#275a20" transform="rotate(-60 12 42)"/><ellipse cx="71" cy="54" rx="1.6" ry="1.3" fill="#4f9338" transform="rotate(-67 71 54)"/><ellipse cx="10" cy="111" rx="2.0" ry="1.2" fill="#44863a" transform="rotate(-53 10 111)"/><ellipse cx="70" cy="88" rx="1.3" ry="1.6" fill="#3a7a2c" transform="rotate(-66 70 88)"/><ellipse cx="60" cy="128" rx="2.9" ry="2.1" fill="#78b45c" transform="rotate(63 60 128)"/><ellipse cx="145" cy="67" rx="2.7" ry="2.1" fill="#1f4a1a" transform="rotate(51 145 67)"/><ellipse cx="84" cy="56" rx="2.2" ry="1.7" fill="#2f6a26" transform="rotate(67 84 56)"/><ellipse cx="114" cy="88" rx="3.1" ry="1.5" fill="#275a20" transform="rotate(37 114 88)"/><ellipse cx="133" cy="143" rx="3.1" ry="1.1" fill="#3a7a2c" transform="rotate(-28 133 143)"/><ellipse cx="152" cy="98" rx="2.3" ry="1.7" fill="#1f4a1a" transform="rotate(28 152 98)"/><ellipse cx="82" cy="75" rx="2.5" ry="1.2" fill="#22501c" transform="rotate(-11 82 75)"/><ellipse cx="117" cy="68" rx="2.7" ry="1.1" fill="#5a9c42" transform="rotate(22 117 68)"/><ellipse cx="105" cy="148" rx="2.1" ry="0.9" fill="#1f4a1a" transform="rotate(65 105 148)"/><ellipse cx="132" cy="48" rx="1.9" ry="1.0" fill="#2f6a26" transform="rotate(-41 132 48)"/><ellipse cx="37" cy="99" rx="2.8" ry="0.9" fill="#1f4a1a" transform="rotate(-66 37 99)"/><ellipse cx="113" cy="92" rx="2.8" ry="1.8" fill="#2f6a26" transform="rotate(51 113 92)"/><ellipse cx="1" cy="104" rx="2.3" ry="1.8" fill="#78b45c" transform="rotate(27 1 104)"/><ellipse cx="53" cy="115" rx="2.7" ry="1.1" fill="#22501c" transform="rotate(-4 53 115)"/><ellipse cx="87" cy="49" rx="3.1" ry="1.5" fill="#3a7a2c" transform="rotate(48 87 49)"/><ellipse cx="85" cy="98" rx="2.3" ry="1.1" fill="#4f9338" transform="rotate(-65 85 98)"/><ellipse cx="2" cy="83" rx="1.4" ry="1.4" fill="#78b45c" transform="rotate(11 2 83)"/><ellipse cx="114" cy="48" rx="1.8" ry="1.0" fill="#275a20" transform="rotate(-17 114 48)"/><ellipse cx="102" cy="121" rx="2.2" ry="1.1" fill="#2f6a26" transform="rotate(36 102 121)"/><ellipse cx="33" cy="143" rx="2.9" ry="0.9" fill="#2f6a26" transform="rotate(25 33 143)"/><ellipse cx="10" cy="87" rx="2.6" ry="1.4" fill="#22501c" transform="rotate(-35 10 87)"/><ellipse cx="114" cy="105" rx="3.4" ry="1.6" fill="#5a9c42" transform="rotate(38 114 105)"/><ellipse cx="103" cy="102" rx="1.4" ry="1.9" fill="#3a7a2c" transform="rotate(33 103 102)"/><ellipse cx="14" cy="95" rx="3.5" ry="2.0" fill="#78b45c" transform="rotate(31 14 95)"/><ellipse cx="41" cy="114" rx="2.3" ry="2.2" fill="#22501c" transform="rotate(56 41 114)"/><ellipse cx="45" cy="92" rx="1.9" ry="2.1" fill="#66a84c" transform="rotate(10 45 92)"/><ellipse cx="12" cy="71" rx="2.8" ry="1.6" fill="#44863a" transform="rotate(39 12 71)"/><ellipse cx="127" cy="92" rx="3.3" ry="1.1" fill="#4f9338" transform="rotate(-5 127 92)"/><ellipse cx="25" cy="114" rx="2.2" ry="1.3" fill="#4f9338" transform="rotate(-28 25 114)"/><ellipse cx="9" cy="105" rx="2.9" ry="0.9" fill="#78b45c" transform="rotate(-20 9 105)"/><ellipse cx="131" cy="90" rx="1.4" ry="1.1" fill="#78b45c" transform="rotate(12 131 90)"/><ellipse cx="153" cy="107" rx="3.4" ry="1.4" fill="#4f9338" transform="rotate(38 153 107)"/><ellipse cx="163" cy="41" rx="2.9" ry="1.4" fill="#275a20" transform="rotate(-63 163 41)"/><ellipse cx="128" cy="56" rx="3.2" ry="1.8" fill="#22501c" transform="rotate(-51 128 56)"/><ellipse cx="131" cy="138" rx="3.2" ry="1.5" fill="#66a84c" transform="rotate(65 131 138)"/><ellipse cx="144" cy="105" rx="1.6" ry="2.1" fill="#44863a" transform="rotate(53 144 105)"/><ellipse cx="32" cy="111" rx="1.6" ry="2.1" fill="#44863a" transform="rotate(-48 32 111)"/><ellipse cx="90" cy="91" rx="2.8" ry="1.3" fill="#1f4a1a" transform="rotate(32 90 91)"/><ellipse cx="25" cy="29" rx="2.8" ry="1.6" fill="#22501c" transform="rotate(-60 25 29)"/><ellipse cx="47" cy="92" rx="1.7" ry="1.0" fill="#3a7a2c" transform="rotate(-27 47 92)"/><ellipse cx="33" cy="74" rx="3.1" ry="1.8" fill="#2f6a26" transform="rotate(6 33 74)"/><ellipse cx="54" cy="87" rx="1.3" ry="1.8" fill="#22501c" transform="rotate(21 54 87)"/><ellipse cx="134" cy="61" rx="2.5" ry="1.0" fill="#22501c" transform="rotate(27 134 61)"/><ellipse cx="34" cy="131" rx="1.8" ry="2.2" fill="#5a9c42" transform="rotate(18 34 131)"/><ellipse cx="103" cy="135" rx="1.9" ry="1.2" fill="#1f4a1a" transform="rotate(5 103 135)"/><ellipse cx="69" cy="55" rx="1.7" ry="1.3" fill="#66a84c" transform="rotate(41 69 55)"/><ellipse cx="115" cy="70" rx="2.3" ry="1.0" fill="#66a84c" transform="rotate(57 115 70)"/><ellipse cx="40" cy="103" rx="2.5" ry="0.9" fill="#1f4a1a" transform="rotate(53 40 103)"/><ellipse cx="168" cy="61" rx="2.2" ry="2.1" fill="#5a9c42" transform="rotate(-7 168 61)"/><ellipse cx="97" cy="128" rx="1.7" ry="1.1" fill="#275a20" transform="rotate(53 97 128)"/><ellipse cx="35" cy="93" rx="2.4" ry="1.2" fill="#3a7a2c" transform="rotate(-30 35 93)"/><ellipse cx="130" cy="76" rx="1.5" ry="2.1" fill="#66a84c" transform="rotate(-38 130 76)"/><ellipse cx="50" cy="40" rx="2.5" ry="1.8" fill="#44863a" transform="rotate(-34 50 40)"/><ellipse cx="119" cy="51" rx="1.2" ry="0.8" fill="#4f9338" transform="rotate(-45 119 51)"/><ellipse cx="88" cy="69" rx="2.0" ry="2.1" fill="#78b45c" transform="rotate(-26 88 69)"/><ellipse cx="27" cy="79" rx="2.8" ry="1.3" fill="#22501c" transform="rotate(-1 27 79)"/><ellipse cx="25" cy="110" rx="3.4" ry="1.7" fill="#1f4a1a" transform="rotate(-46 25 110)"/><ellipse cx="46" cy="98" rx="3.2" ry="1.6" fill="#5a9c42" transform="rotate(-16 46 98)"/><ellipse cx="54" cy="130" rx="2.5" ry="1.1" fill="#5a9c42" transform="rotate(-41 54 130)"/><ellipse cx="145" cy="63" rx="2.9" ry="0.9" fill="#3a7a2c" transform="rotate(-4 145 63)"/><ellipse cx="124" cy="37" rx="3.1" ry="1.2" fill="#4f9338" transform="rotate(-5 124 37)"/><ellipse cx="105" cy="128" rx="1.4" ry="0.9" fill="#44863a" transform="rotate(58 105 128)"/><ellipse cx="46" cy="35" rx="3.1" ry="1.4" fill="#1f4a1a" transform="rotate(47 46 35)"/><ellipse cx="29" cy="116" rx="3.3" ry="1.9" fill="#22501c" transform="rotate(-22 29 116)"/><ellipse cx="167" cy="94" rx="2.0" ry="1.0" fill="#4f9338" transform="rotate(55 167 94)"/><ellipse cx="146" cy="88" rx="1.5" ry="1.7" fill="#66a84c" transform="rotate(21 146 88)"/><ellipse cx="-2" cy="122" rx="2.9" ry="2.2" fill="#44863a" transform="rotate(61 -2 122)"/><ellipse cx="96" cy="95" rx="2.0" ry="1.3" fill="#5a9c42" transform="rotate(1 96 95)"/><ellipse cx="133" cy="128" rx="1.9" ry="1.7" fill="#3a7a2c" transform="rotate(-15 133 128)"/><ellipse cx="17" cy="75" rx="3.4" ry="1.0" fill="#3a7a2c" transform="rotate(33 17 75)"/><ellipse cx="5" cy="94" rx="2.8" ry="1.0" fill="#78b45c" transform="rotate(26 5 94)"/><ellipse cx="62" cy="118" rx="2.7" ry="1.6" fill="#4f9338" transform="rotate(7 62 118)"/><ellipse cx="89" cy="57" rx="3.0" ry="0.9" fill="#4f9338" transform="rotate(55 89 57)"/><ellipse cx="75" cy="73" rx="2.9" ry="0.8" fill="#66a84c" transform="rotate(-34 75 73)"/><ellipse cx="79" cy="102" rx="1.7" ry="1.6" fill="#44863a" transform="rotate(-49 79 102)"/><ellipse cx="34" cy="49" rx="1.4" ry="0.8" fill="#4f9338" transform="rotate(-65 34 49)"/><ellipse cx="139" cy="97" rx="1.7" ry="2.0" fill="#4f9338" transform="rotate(-4 139 97)"/><ellipse cx="161" cy="79" rx="2.8" ry="1.1" fill="#22501c" transform="rotate(-29 161 79)"/><ellipse cx="100" cy="117" rx="1.3" ry="1.8" fill="#2f6a26" transform="rotate(-56 100 117)"/><ellipse cx="7" cy="131" rx="2.8" ry="1.8" fill="#22501c" transform="rotate(53 7 131)"/><ellipse cx="15" cy="67" rx="1.2" ry="1.9" fill="#2f6a26" transform="rotate(25 15 67)"/><ellipse cx="109" cy="52" rx="2.0" ry="1.8" fill="#4f9338" transform="rotate(-7 109 52)"/><ellipse cx="3" cy="124" rx="3.4" ry="1.6" fill="#5a9c42" transform="rotate(67 3 124)"/><ellipse cx="138" cy="80" rx="1.8" ry="2.1" fill="#3a7a2c" transform="rotate(-65 138 80)"/><ellipse cx="100" cy="46" rx="2.0" ry="1.2" fill="#3a7a2c" transform="rotate(56 100 46)"/><ellipse cx="82" cy="123" rx="3.3" ry="2.0" fill="#44863a" transform="rotate(-67 82 123)"/><ellipse cx="41" cy="90" rx="3.1" ry="1.1" fill="#1f4a1a" transform="rotate(-23 41 90)"/><ellipse cx="76" cy="117" rx="2.5" ry="1.9" fill="#66a84c" transform="rotate(65 76 117)"/><ellipse cx="55" cy="129" rx="3.5" ry="0.9" fill="#4f9338" transform="rotate(-28 55 129)"/><ellipse cx="108" cy="57" rx="2.4" ry="0.9" fill="#78b45c" transform="rotate(-3 108 57)"/><ellipse cx="21" cy="88" rx="2.3" ry="1.1" fill="#78b45c" transform="rotate(34 21 88)"/><ellipse cx="25" cy="102" rx="2.6" ry="2.1" fill="#78b45c" transform="rotate(55 25 102)"/><ellipse cx="5" cy="77" rx="1.6" ry="1.9" fill="#4f9338" transform="rotate(46 5 77)"/><ellipse cx="41" cy="68" rx="2.4" ry="1.2" fill="#275a20" transform="rotate(32 41 68)"/><ellipse cx="104" cy="93" rx="2.4" ry="0.8" fill="#275a20" transform="rotate(-54 104 93)"/><ellipse cx="38" cy="26" rx="2.8" ry="1.7" fill="#1f4a1a" transform="rotate(1 38 26)"/><ellipse cx="69" cy="31" rx="1.4" ry="1.6" fill="#275a20" transform="rotate(-8 69 31)"/><ellipse cx="88" cy="58" rx="2.0" ry="2.1" fill="#4f9338" transform="rotate(-34 88 58)"/><ellipse cx="149" cy="96" rx="2.2" ry="1.1" fill="#3a7a2c" transform="rotate(15 149 96)"/><ellipse cx="152" cy="43" rx="1.8" ry="0.9" fill="#44863a" transform="rotate(-55 152 43)"/><ellipse cx="92" cy="119" rx="2.5" ry="1.8" fill="#66a84c" transform="rotate(-17 92 119)"/><ellipse cx="95" cy="98" rx="2.8" ry="1.5" fill="#4f9338" transform="rotate(53 95 98)"/><ellipse cx="119" cy="59" rx="3.0" ry="1.6" fill="#66a84c" transform="rotate(17 119 59)"/><ellipse cx="104" cy="91" rx="3.1" ry="1.0" fill="#1f4a1a" transform="rotate(-35 104 91)"/><ellipse cx="96" cy="62" rx="2.8" ry="0.9" fill="#5a9c42" transform="rotate(-65 96 62)"/><ellipse cx="164" cy="69" rx="2.9" ry="1.4" fill="#22501c" transform="rotate(-40 164 69)"/><ellipse cx="162" cy="59" rx="2.1" ry="1.3" fill="#5a9c42" transform="rotate(51 162 59)"/><ellipse cx="13" cy="148" rx="2.7" ry="1.6" fill="#1f4a1a" transform="rotate(18 13 148)"/><ellipse cx="134" cy="101" rx="1.3" ry="1.4" fill="#44863a" transform="rotate(4 134 101)"/><ellipse cx="116" cy="47" rx="3.2" ry="1.9" fill="#4f9338" transform="rotate(-9 116 47)"/><ellipse cx="37" cy="117" rx="2.1" ry="2.2" fill="#66a84c" transform="rotate(47 37 117)"/><ellipse cx="97" cy="70" rx="1.8" ry="0.9" fill="#3a7a2c" transform="rotate(-66 97 70)"/><ellipse cx="99" cy="131" rx="1.9" ry="1.3" fill="#5a9c42" transform="rotate(-42 99 131)"/><ellipse cx="40" cy="147" rx="2.2" ry="1.7" fill="#22501c" transform="rotate(-19 40 147)"/><ellipse cx="16" cy="128" rx="3.2" ry="1.5" fill="#1f4a1a" transform="rotate(53 16 128)"/><ellipse cx="53" cy="101" rx="2.0" ry="2.1" fill="#44863a" transform="rotate(53 53 101)"/><ellipse cx="17" cy="102" rx="3.1" ry="1.7" fill="#275a20" transform="rotate(-40 17 102)"/><ellipse cx="18" cy="134" rx="1.7" ry="1.5" fill="#5a9c42" transform="rotate(-56 18 134)"/><ellipse cx="72" cy="129" rx="3.5" ry="2.2" fill="#2f6a26" transform="rotate(6 72 129)"/><ellipse cx="95" cy="88" rx="2.6" ry="1.6" fill="#275a20" transform="rotate(51 95 88)"/><ellipse cx="84" cy="107" rx="3.3" ry="1.7" fill="#44863a" transform="rotate(-56 84 107)"/><ellipse cx="154" cy="110" rx="1.2" ry="2.1" fill="#78b45c" transform="rotate(-68 154 110)"/><ellipse cx="1" cy="136" rx="2.1" ry="1.6" fill="#5a9c42" transform="rotate(18 1 136)"/><ellipse cx="8" cy="116" rx="3.1" ry="1.2" fill="#2f6a26" transform="rotate(5 8 116)"/><ellipse cx="21" cy="148" rx="1.7" ry="1.7" fill="#44863a" transform="rotate(36 21 148)"/><ellipse cx="17" cy="50" rx="2.4" ry="1.0" fill="#4f9338" transform="rotate(20 17 50)"/><ellipse cx="23" cy="150" rx="2.0" ry="1.7" fill="#3a7a2c" transform="rotate(59 23 150)"/><ellipse cx="159" cy="143" rx="1.3" ry="1.8" fill="#3a7a2c" transform="rotate(-67 159 143)"/><ellipse cx="107" cy="69" rx="1.5" ry="1.3" fill="#78b45c" transform="rotate(34 107 69)"/><ellipse cx="67" cy="39" rx="2.6" ry="1.5" fill="#78b45c" transform="rotate(23 67 39)"/><ellipse cx="125" cy="50" rx="1.8" ry="1.7" fill="#66a84c" transform="rotate(-35 125 50)"/><ellipse cx="31" cy="150" rx="1.4" ry="0.9" fill="#66a84c" transform="rotate(-30 31 150)"/><ellipse cx="145" cy="117" rx="2.2" ry="0.8" fill="#3a7a2c" transform="rotate(68 145 117)"/><ellipse cx="26" cy="56" rx="2.0" ry="1.0" fill="#78b45c" transform="rotate(-7 26 56)"/><ellipse cx="124" cy="76" rx="1.8" ry="1.8" fill="#66a84c" transform="rotate(63 124 76)"/><ellipse cx="117" cy="53" rx="1.5" ry="1.0" fill="#4f9338" transform="rotate(54 117 53)"/><ellipse cx="112" cy="87" rx="2.4" ry="1.8" fill="#4f9338" transform="rotate(-6 112 87)"/><ellipse cx="147" cy="136" rx="3.1" ry="1.2" fill="#44863a" transform="rotate(-31 147 136)"/><ellipse cx="97" cy="91" rx="1.7" ry="1.6" fill="#44863a" transform="rotate(19 97 91)"/><ellipse cx="55" cy="85" rx="1.8" ry="1.1" fill="#3a7a2c" transform="rotate(-9 55 85)"/><ellipse cx="148" cy="104" rx="1.8" ry="1.5" fill="#78b45c" transform="rotate(47 148 104)"/><ellipse cx="142" cy="140" rx="2.6" ry="2.0" fill="#66a84c" transform="rotate(5 142 140)"/><ellipse cx="153" cy="117" rx="2.4" ry="1.7" fill="#22501c" transform="rotate(46 153 117)"/><ellipse cx="118" cy="47" rx="1.6" ry="1.0" fill="#22501c" transform="rotate(-46 118 47)"/><ellipse cx="32" cy="97" rx="2.6" ry="0.8" fill="#66a84c" transform="rotate(-4 32 97)"/><ellipse cx="17" cy="46" rx="2.9" ry="0.9" fill="#1f4a1a" transform="rotate(40 17 46)"/><ellipse cx="93" cy="51" rx="3.0" ry="1.2" fill="#1f4a1a" transform="rotate(-16 93 51)"/><ellipse cx="-2" cy="92" rx="1.6" ry="1.2" fill="#4f9338" transform="rotate(-30 -2 92)"/><ellipse cx="64" cy="109" rx="3.3" ry="0.9" fill="#1f4a1a" transform="rotate(-67 64 109)"/><ellipse cx="111" cy="53" rx="2.7" ry="1.4" fill="#22501c" transform="rotate(66 111 53)"/><ellipse cx="110" cy="78" rx="3.5" ry="2.1" fill="#5a9c42" transform="rotate(61 110 78)"/><ellipse cx="35" cy="126" rx="2.1" ry="1.8" fill="#3a7a2c" transform="rotate(-3 35 126)"/><ellipse cx="97" cy="138" rx="2.6" ry="1.8" fill="#44863a" transform="rotate(33 97 138)"/><ellipse cx="75" cy="145" rx="3.4" ry="0.9" fill="#66a84c" transform="rotate(-66 75 145)"/><ellipse cx="163" cy="77" rx="1.6" ry="2.1" fill="#66a84c" transform="rotate(22 163 77)"/><ellipse cx="26" cy="37" rx="1.8" ry="0.9" fill="#78b45c" transform="rotate(68 26 37)"/><ellipse cx="72" cy="46" rx="3.3" ry="1.0" fill="#22501c" transform="rotate(-35 72 46)"/><ellipse cx="156" cy="112" rx="3.0" ry="1.9" fill="#44863a" transform="rotate(51 156 112)"/><ellipse cx="125" cy="94" rx="3.0" ry="1.0" fill="#22501c" transform="rotate(-23 125 94)"/><ellipse cx="118" cy="133" rx="3.0" ry="0.9" fill="#4f9338" transform="rotate(-65 118 133)"/><ellipse cx="93" cy="51" rx="2.1" ry="1.4" fill="#1f4a1a" transform="rotate(19 93 51)"/><ellipse cx="57" cy="53" rx="3.0" ry="0.9" fill="#1f4a1a" transform="rotate(-43 57 53)"/><ellipse cx="125" cy="53" rx="2.7" ry="0.9" fill="#1f4a1a" transform="rotate(19 125 53)"/><ellipse cx="165" cy="112" rx="2.2" ry="2.1" fill="#275a20" transform="rotate(-56 165 112)"/><ellipse cx="109" cy="73" rx="1.9" ry="1.6" fill="#78b45c" transform="rotate(-44 109 73)"/><ellipse cx="101" cy="83" rx="2.8" ry="1.9" fill="#22501c" transform="rotate(26 101 83)"/><ellipse cx="13" cy="96" rx="2.7" ry="1.1" fill="#78b45c" transform="rotate(4 13 96)"/><ellipse cx="106" cy="105" rx="1.9" ry="1.2" fill="#66a84c" transform="rotate(68 106 105)"/><ellipse cx="141" cy="136" rx="3.5" ry="1.5" fill="#1f4a1a" transform="rotate(61 141 136)"/><ellipse cx="13" cy="49" rx="2.1" ry="1.8" fill="#5a9c42" transform="rotate(-57 13 49)"/><ellipse cx="157" cy="78" rx="2.3" ry="1.1" fill="#78b45c" transform="rotate(63 157 78)"/><ellipse cx="67" cy="90" rx="1.9" ry="1.8" fill="#1f4a1a" transform="rotate(11 67 90)"/><ellipse cx="54" cy="81" rx="1.5" ry="1.4" fill="#66a84c" transform="rotate(18 54 81)"/><ellipse cx="162" cy="51" rx="2.3" ry="2.0" fill="#4f9338" transform="rotate(56 162 51)"/><ellipse cx="15" cy="61" rx="2.3" ry="1.4" fill="#275a20" transform="rotate(37 15 61)"/><ellipse cx="98" cy="55" rx="3.3" ry="1.1" fill="#2f6a26" transform="rotate(7 98 55)"/><ellipse cx="152" cy="93" rx="2.6" ry="2.1" fill="#5a9c42" transform="rotate(-13 152 93)"/><ellipse cx="143" cy="86" rx="1.3" ry="1.8" fill="#66a84c" transform="rotate(37 143 86)"/><ellipse cx="32" cy="53" rx="1.3" ry="2.0" fill="#4f9338" transform="rotate(-26 32 53)"/><ellipse cx="107" cy="103" rx="1.3" ry="2.1" fill="#44863a" transform="rotate(-58 107 103)"/><ellipse cx="15" cy="131" rx="1.5" ry="1.8" fill="#22501c" transform="rotate(-2 15 131)"/><ellipse cx="69" cy="137" rx="2.7" ry="2.2" fill="#5a9c42" transform="rotate(2 69 137)"/><ellipse cx="26" cy="117" rx="3.3" ry="2.1" fill="#4f9338" transform="rotate(-32 26 117)"/><ellipse cx="76" cy="114" rx="2.8" ry="2.0" fill="#275a20" transform="rotate(-35 76 114)"/><ellipse cx="129" cy="116" rx="1.5" ry="0.8" fill="#1f4a1a" transform="rotate(-46 129 116)"/><ellipse cx="146" cy="143" rx="2.2" ry="1.5" fill="#4f9338" transform="rotate(15 146 143)"/><ellipse cx="16" cy="48" rx="2.2" ry="1.6" fill="#4f9338" transform="rotate(14 16 48)"/><ellipse cx="7" cy="144" rx="1.5" ry="2.0" fill="#66a84c" transform="rotate(-26 7 144)"/><ellipse cx="53" cy="105" rx="2.6" ry="2.0" fill="#22501c" transform="rotate(-33 53 105)"/><ellipse cx="82" cy="144" rx="1.7" ry="1.4" fill="#5a9c42" transform="rotate(-16 82 144)"/><ellipse cx="109" cy="101" rx="2.0" ry="1.3" fill="#44863a" transform="rotate(-7 109 101)"/><ellipse cx="165" cy="24" rx="2.0" ry="1.5" fill="#44863a" transform="rotate(45 165 24)"/><ellipse cx="88" cy="146" rx="1.8" ry="1.7" fill="#275a20" transform="rotate(2 88 146)"/><ellipse cx="113" cy="107" rx="3.0" ry="1.7" fill="#3a7a2c" transform="rotate(-35 113 107)"/><ellipse cx="148" cy="101" rx="2.4" ry="1.7" fill="#78b45c" transform="rotate(-46 148 101)"/><ellipse cx="57" cy="146" rx="2.5" ry="1.3" fill="#44863a" transform="rotate(-1 57 146)"/><ellipse cx="12" cy="58" rx="3.0" ry="1.0" fill="#5a9c42" transform="rotate(38 12 58)"/><ellipse cx="10" cy="89" rx="1.6" ry="2.2" fill="#275a20" transform="rotate(-60 10 89)"/><ellipse cx="24" cy="89" rx="3.3" ry="2.1" fill="#2f6a26" transform="rotate(27 24 89)"/><ellipse cx="116" cy="62" rx="2.5" ry="1.3" fill="#5a9c42" transform="rotate(-43 116 62)"/><ellipse cx="123" cy="133" rx="2.2" ry="1.3" fill="#4f9338" transform="rotate(-50 123 133)"/><ellipse cx="155" cy="64" rx="2.6" ry="1.8" fill="#78b45c" transform="rotate(-26 155 64)"/><ellipse cx="31" cy="104" rx="1.4" ry="1.6" fill="#44863a" transform="rotate(-3 31 104)"/><ellipse cx="71" cy="79" rx="2.7" ry="1.8" fill="#78b45c" transform="rotate(31 71 79)"/><ellipse cx="25" cy="65" rx="2.8" ry="1.8" fill="#22501c" transform="rotate(-66 25 65)"/><ellipse cx="63" cy="68" rx="3.2" ry="1.5" fill="#78b45c" transform="rotate(-10 63 68)"/><ellipse cx="9" cy="124" rx="1.3" ry="2.0" fill="#3a7a2c" transform="rotate(54 9 124)"/><ellipse cx="66" cy="81" rx="3.2" ry="2.1" fill="#66a84c" transform="rotate(-36 66 81)"/><ellipse cx="140" cy="116" rx="2.9" ry="1.9" fill="#275a20" transform="rotate(-48 140 116)"/><ellipse cx="35" cy="149" rx="2.0" ry="1.6" fill="#2f6a26" transform="rotate(2 35 149)"/><ellipse cx="46" cy="115" rx="2.5" ry="1.3" fill="#5a9c42" transform="rotate(-21 46 115)"/><ellipse cx="115" cy="51" rx="3.0" ry="1.9" fill="#1f4a1a" transform="rotate(-47 115 51)"/><ellipse cx="1" cy="68" rx="1.7" ry="1.4" fill="#22501c" transform="rotate(58 1 68)"/><ellipse cx="153" cy="35" rx="2.9" ry="1.0" fill="#2f6a26" transform="rotate(30 153 35)"/><ellipse cx="33" cy="67" rx="2.8" ry="1.7" fill="#1f4a1a" transform="rotate(-58 33 67)"/><ellipse cx="139" cy="54" rx="1.6" ry="1.6" fill="#2f6a26" transform="rotate(51 139 54)"/><ellipse cx="101" cy="125" rx="2.8" ry="2.0" fill="#44863a" transform="rotate(3 101 125)"/><ellipse cx="-1" cy="80" rx="1.7" ry="1.4" fill="#78b45c" transform="rotate(11 -1 80)"/><ellipse cx="150" cy="52" rx="3.4" ry="1.3" fill="#3a7a2c" transform="rotate(-47 150 52)"/><ellipse cx="132" cy="99" rx="3.4" ry="1.5" fill="#2f6a26" transform="rotate(-47 132 99)"/><ellipse cx="166" cy="33" rx="3.5" ry="0.9" fill="#2f6a26" transform="rotate(14 166 33)"/><ellipse cx="81" cy="105" rx="2.1" ry="2.0" fill="#5a9c42" transform="rotate(34 81 105)"/><ellipse cx="8" cy="107" rx="1.7" ry="1.8" fill="#44863a" transform="rotate(-26 8 107)"/><ellipse cx="152" cy="57" rx="2.9" ry="2.2" fill="#2f6a26" transform="rotate(-9 152 57)"/><ellipse cx="34" cy="69" rx="2.6" ry="1.8" fill="#5a9c42" transform="rotate(42 34 69)"/><ellipse cx="17" cy="119" rx="2.8" ry="1.3" fill="#1f4a1a" transform="rotate(21 17 119)"/><ellipse cx="167" cy="149" rx="3.0" ry="2.0" fill="#5a9c42" transform="rotate(5 167 149)"/><ellipse cx="96" cy="82" rx="2.3" ry="1.8" fill="#3a7a2c" transform="rotate(64 96 82)"/><ellipse cx="113" cy="110" rx="1.5" ry="1.8" fill="#4f9338" transform="rotate(-20 113 110)"/><ellipse cx="128" cy="64" rx="2.3" ry="1.9" fill="#1f4a1a" transform="rotate(58 128 64)"/><ellipse cx="45" cy="81" rx="3.3" ry="1.4" fill="#3a7a2c" transform="rotate(23 45 81)"/><ellipse cx="21" cy="89" rx="1.5" ry="1.9" fill="#1f4a1a" transform="rotate(16 21 89)"/><ellipse cx="82" cy="40" rx="1.8" ry="1.1" fill="#44863a" transform="rotate(56 82 40)"/><ellipse cx="154" cy="102" rx="3.0" ry="1.1" fill="#4f9338" transform="rotate(28 154 102)"/><ellipse cx="125" cy="81" rx="1.7" ry="1.3" fill="#66a84c" transform="rotate(12 125 81)"/><ellipse cx="97" cy="41" rx="3.2" ry="1.3" fill="#2f6a26" transform="rotate(18 97 41)"/><ellipse cx="26" cy="60" rx="1.9" ry="1.2" fill="#5a9c42" transform="rotate(-17 26 60)"/><ellipse cx="32" cy="144" rx="2.5" ry="2.1" fill="#2f6a26" transform="rotate(62 32 144)"/><ellipse cx="99" cy="83" rx="1.2" ry="0.9" fill="#1f4a1a" transform="rotate(68 99 83)"/><ellipse cx="124" cy="99" rx="1.8" ry="1.7" fill="#66a84c" transform="rotate(-18 124 99)"/><ellipse cx="38" cy="88" rx="3.2" ry="1.6" fill="#3a7a2c" transform="rotate(-43 38 88)"/><ellipse cx="80" cy="125" rx="1.6" ry="2.0" fill="#44863a" transform="rotate(-59 80 125)"/><ellipse cx="73" cy="114" rx="2.1" ry="1.8" fill="#44863a" transform="rotate(16 73 114)"/><ellipse cx="64" cy="137" rx="2.4" ry="2.0" fill="#44863a" transform="rotate(-24 64 137)"/><ellipse cx="37" cy="25" rx="2.9" ry="1.9" fill="#78b45c" transform="rotate(45 37 25)"/><ellipse cx="-2" cy="113" rx="2.4" ry="2.0" fill="#44863a" transform="rotate(-27 -2 113)"/><ellipse cx="0" cy="44" rx="1.4" ry="1.9" fill="#78b45c" transform="rotate(40 0 44)"/><ellipse cx="80" cy="50" rx="3.1" ry="1.1" fill="#3a7a2c" transform="rotate(60 80 50)"/><ellipse cx="135" cy="89" rx="2.1" ry="0.9" fill="#78b45c" transform="rotate(-5 135 89)"/><ellipse cx="71" cy="106" rx="2.1" ry="1.4" fill="#22501c" transform="rotate(42 71 106)"/><ellipse cx="39" cy="93" rx="1.3" ry="1.5" fill="#3a7a2c" transform="rotate(-52 39 93)"/><ellipse cx="33" cy="64" rx="2.4" ry="1.6" fill="#78b45c" transform="rotate(32 33 64)"/><ellipse cx="65" cy="91" rx="1.3" ry="1.2" fill="#4f9338" transform="rotate(-62 65 91)"/><ellipse cx="165" cy="65" rx="1.9" ry="2.0" fill="#4f9338" transform="rotate(63 165 65)"/><ellipse cx="145" cy="63" rx="3.5" ry="1.8" fill="#22501c" transform="rotate(28 145 63)"/><ellipse cx="163" cy="51" rx="3.3" ry="1.7" fill="#66a84c" transform="rotate(25 163 51)"/><ellipse cx="20" cy="27" rx="3.5" ry="2.1" fill="#4f9338" transform="rotate(9 20 27)"/><ellipse cx="142" cy="49" rx="1.5" ry="1.2" fill="#66a84c" transform="rotate(-63 142 49)"/><ellipse cx="69" cy="115" rx="2.5" ry="2.2" fill="#2f6a26" transform="rotate(55 69 115)"/><ellipse cx="89" cy="89" rx="2.8" ry="1.7" fill="#66a84c" transform="rotate(60 89 89)"/><ellipse cx="43" cy="125" rx="2.0" ry="1.3" fill="#22501c" transform="rotate(-31 43 125)"/><ellipse cx="138" cy="123" rx="2.0" ry="1.2" fill="#275a20" transform="rotate(16 138 123)"/><ellipse cx="4" cy="26" rx="1.9" ry="2.1" fill="#275a20" transform="rotate(15 4 26)"/><ellipse cx="157" cy="34" rx="2.5" ry="2.0" fill="#78b45c" transform="rotate(-42 157 34)"/><ellipse cx="4" cy="35" rx="2.2" ry="1.3" fill="#1f4a1a" transform="rotate(26 4 35)"/><ellipse cx="49" cy="105" rx="1.5" ry="2.1" fill="#78b45c" transform="rotate(12 49 105)"/><ellipse cx="28" cy="127" rx="2.5" ry="0.9" fill="#78b45c" transform="rotate(-36 28 127)"/><ellipse cx="3" cy="137" rx="1.5" ry="1.5" fill="#3a7a2c" transform="rotate(-23 3 137)"/><ellipse cx="70" cy="149" rx="2.8" ry="1.3" fill="#3a7a2c" transform="rotate(34 70 149)"/><ellipse cx="138" cy="147" rx="1.7" ry="1.8" fill="#3a7a2c" transform="rotate(69 138 147)"/><ellipse cx="18" cy="141" rx="2.3" ry="1.8" fill="#3a7a2c" transform="rotate(-69 18 141)"/><ellipse cx="91" cy="99" rx="1.4" ry="2.0" fill="#2f6a26" transform="rotate(59 91 99)"/><ellipse cx="161" cy="65" rx="3.0" ry="1.9" fill="#5a9c42" transform="rotate(40 161 65)"/><ellipse cx="13" cy="54" rx="1.5" ry="1.7" fill="#78b45c" transform="rotate(-10 13 54)"/><ellipse cx="23" cy="27" rx="2.6" ry="0.9" fill="#66a84c" transform="rotate(47 23 27)"/><ellipse cx="31" cy="143" rx="1.6" ry="1.4" fill="#2f6a26" transform="rotate(-52 31 143)"/><ellipse cx="96" cy="52" rx="3.3" ry="1.7" fill="#3a7a2c" transform="rotate(-6 96 52)"/><ellipse cx="75" cy="66" rx="1.7" ry="1.0" fill="#66a84c" transform="rotate(-16 75 66)"/><ellipse cx="43" cy="64" rx="3.5" ry="2.0" fill="#4f9338" transform="rotate(-10 43 64)"/><ellipse cx="2" cy="90" rx="1.8" ry="2.1" fill="#44863a" transform="rotate(-50 2 90)"/><ellipse cx="92" cy="49" rx="2.9" ry="1.6" fill="#5a9c42" transform="rotate(-40 92 49)"/><ellipse cx="145" cy="118" rx="2.9" ry="1.8" fill="#275a20" transform="rotate(58 145 118)"/><ellipse cx="130" cy="149" rx="1.6" ry="1.1" fill="#5a9c42" transform="rotate(70 130 149)"/><ellipse cx="93" cy="141" rx="2.8" ry="2.0" fill="#275a20" transform="rotate(4 93 141)"/><ellipse cx="95" cy="72" rx="3.1" ry="1.4" fill="#2f6a26" transform="rotate(-68 95 72)"/><ellipse cx="117" cy="32" rx="1.4" ry="1.5" fill="#22501c" transform="rotate(-11 117 32)"/><ellipse cx="31" cy="136" rx="3.3" ry="1.5" fill="#44863a" transform="rotate(-36 31 136)"/><ellipse cx="-1" cy="52" rx="2.6" ry="1.9" fill="#66a84c" transform="rotate(3 -1 52)"/><ellipse cx="105" cy="92" rx="2.4" ry="1.2" fill="#2f6a26" transform="rotate(-19 105 92)"/><ellipse cx="124" cy="106" rx="3.3" ry="1.6" fill="#78b45c" transform="rotate(-53 124 106)"/><ellipse cx="1" cy="149" rx="1.2" ry="1.8" fill="#22501c" transform="rotate(56 1 149)"/><ellipse cx="75" cy="68" rx="2.0" ry="1.6" fill="#5a9c42" transform="rotate(0 75 68)"/><ellipse cx="104" cy="54" rx="2.9" ry="1.7" fill="#44863a" transform="rotate(-39 104 54)"/><ellipse cx="6" cy="146" rx="2.3" ry="2.0" fill="#1f4a1a" transform="rotate(19 6 146)"/><ellipse cx="17" cy="63" rx="2.4" ry="1.5" fill="#1f4a1a" transform="rotate(-54 17 63)"/><ellipse cx="16" cy="79" rx="2.3" ry="2.1" fill="#22501c" transform="rotate(-58 16 79)"/><ellipse cx="147" cy="150" rx="2.1" ry="2.1" fill="#1f4a1a" transform="rotate(-61 147 150)"/><ellipse cx="155" cy="72" rx="1.9" ry="1.3" fill="#1f4a1a" transform="rotate(-43 155 72)"/><ellipse cx="124" cy="118" rx="2.4" ry="1.7" fill="#1f4a1a" transform="rotate(64 124 118)"/><ellipse cx="22" cy="121" rx="1.9" ry="1.8" fill="#5a9c42" transform="rotate(58 22 121)"/><ellipse cx="97" cy="80" rx="2.1" ry="0.8" fill="#2f6a26" transform="rotate(-14 97 80)"/><ellipse cx="156" cy="148" rx="3.3" ry="2.2" fill="#22501c" transform="rotate(-35 156 148)"/><ellipse cx="113" cy="115" rx="1.8" ry="1.6" fill="#1f4a1a" transform="rotate(6 113 115)"/><ellipse cx="47" cy="109" rx="1.4" ry="1.1" fill="#2f6a26" transform="rotate(-34 47 109)"/><ellipse cx="133" cy="101" rx="2.2" ry="1.6" fill="#66a84c" transform="rotate(-46 133 101)"/><ellipse cx="118" cy="49" rx="3.1" ry="1.8" fill="#1f4a1a" transform="rotate(-46 118 49)"/><ellipse cx="87" cy="105" rx="2.9" ry="1.8" fill="#3a7a2c" transform="rotate(-58 87 105)"/><ellipse cx="18" cy="115" rx="2.2" ry="1.8" fill="#66a84c" transform="rotate(38 18 115)"/><ellipse cx="119" cy="78" rx="3.3" ry="1.7" fill="#5a9c42" transform="rotate(40 119 78)"/><ellipse cx="152" cy="119" rx="2.7" ry="1.8" fill="#44863a" transform="rotate(21 152 119)"/><ellipse cx="78" cy="84" rx="2.0" ry="1.3" fill="#1f4a1a" transform="rotate(-15 78 84)"/><ellipse cx="35" cy="101" rx="2.7" ry="1.2" fill="#2f6a26" transform="rotate(55 35 101)"/><ellipse cx="43" cy="85" rx="3.4" ry="1.9" fill="#78b45c" transform="rotate(1 43 85)"/><ellipse cx="141" cy="69" rx="2.5" ry="0.8" fill="#3a7a2c" transform="rotate(-37 141 69)"/><ellipse cx="82" cy="84" rx="2.3" ry="1.7" fill="#275a20" transform="rotate(-57 82 84)"/><ellipse cx="104" cy="114" rx="2.5" ry="1.4" fill="#3a7a2c" transform="rotate(62 104 114)"/><ellipse cx="102" cy="64" rx="1.4" ry="1.7" fill="#1f4a1a" transform="rotate(-60 102 64)"/><ellipse cx="36" cy="74" rx="1.4" ry="0.9" fill="#275a20" transform="rotate(24 36 74)"/><ellipse cx="57" cy="72" rx="1.8" ry="1.9" fill="#22501c" transform="rotate(-2 57 72)"/><ellipse cx="106" cy="105" rx="2.3" ry="2.2" fill="#44863a" transform="rotate(-66 106 105)"/><ellipse cx="153" cy="145" rx="1.4" ry="2.2" fill="#4f9338" transform="rotate(-7 153 145)"/><ellipse cx="116" cy="46" rx="1.2" ry="1.3" fill="#1f4a1a" transform="rotate(51 116 46)"/><ellipse cx="28" cy="99" rx="3.2" ry="1.9" fill="#22501c" transform="rotate(-1 28 99)"/><ellipse cx="35" cy="59" rx="2.5" ry="1.2" fill="#275a20" transform="rotate(-51 35 59)"/><ellipse cx="131" cy="135" rx="3.3" ry="1.8" fill="#78b45c" transform="rotate(-11 131 135)"/><ellipse cx="45" cy="73" rx="1.3" ry="1.3" fill="#1f4a1a" transform="rotate(33 45 73)"/><ellipse cx="139" cy="87" rx="3.4" ry="2.0" fill="#78b45c" transform="rotate(-12 139 87)"/><ellipse cx="91" cy="51" rx="3.0" ry="1.6" fill="#3a7a2c" transform="rotate(-46 91 51)"/><ellipse cx="30" cy="148" rx="2.7" ry="1.3" fill="#1f4a1a" transform="rotate(60 30 148)"/><ellipse cx="64" cy="81" rx="2.7" ry="1.2" fill="#275a20" transform="rotate(-44 64 81)"/><ellipse cx="162" cy="108" rx="3.5" ry="1.6" fill="#44863a" transform="rotate(33 162 108)"/><ellipse cx="19" cy="88" rx="2.6" ry="1.0" fill="#1f4a1a" transform="rotate(66 19 88)"/><ellipse cx="109" cy="123" rx="2.1" ry="1.1" fill="#275a20" transform="rotate(52 109 123)"/><ellipse cx="122" cy="43" rx="3.3" ry="1.8" fill="#275a20" transform="rotate(-26 122 43)"/><ellipse cx="68" cy="98" rx="2.5" ry="1.5" fill="#3a7a2c" transform="rotate(-46 68 98)"/><ellipse cx="58" cy="59" rx="3.2" ry="1.9" fill="#2f6a26" transform="rotate(-1 58 59)"/><ellipse cx="42" cy="74" rx="1.5" ry="1.8" fill="#1f4a1a" transform="rotate(-29 42 74)"/><ellipse cx="68" cy="115" rx="2.1" ry="2.2" fill="#44863a" transform="rotate(-34 68 115)"/><ellipse cx="108" cy="89" rx="3.2" ry="1.1" fill="#78b45c" transform="rotate(6 108 89)"/><ellipse cx="16" cy="99" rx="1.3" ry="2.0" fill="#275a20" transform="rotate(40 16 99)"/><ellipse cx="9" cy="106" rx="2.3" ry="1.4" fill="#5a9c42" transform="rotate(-28 9 106)"/><ellipse cx="0" cy="134" rx="2.1" ry="1.1" fill="#5a9c42" transform="rotate(-42 0 134)"/><ellipse cx="104" cy="112" rx="2.6" ry="0.8" fill="#5a9c42" transform="rotate(34 104 112)"/><ellipse cx="16" cy="38" rx="2.7" ry="1.3" fill="#275a20" transform="rotate(59 16 38)"/><ellipse cx="162" cy="56" rx="1.5" ry="1.9" fill="#275a20" transform="rotate(29 162 56)"/><ellipse cx="36" cy="66" rx="3.5" ry="2.1" fill="#78b45c" transform="rotate(-67 36 66)"/><ellipse cx="68" cy="122" rx="2.0" ry="2.0" fill="#1f4a1a" transform="rotate(-20 68 122)"/><ellipse cx="-2" cy="138" rx="3.1" ry="0.9" fill="#3a7a2c" transform="rotate(-31 -2 138)"/><ellipse cx="163" cy="114" rx="2.0" ry="1.6" fill="#5a9c42" transform="rotate(46 163 114)"/><ellipse cx="52" cy="61" rx="3.4" ry="1.3" fill="#275a20" transform="rotate(15 52 61)"/><ellipse cx="157" cy="73" rx="1.5" ry="0.9" fill="#22501c" transform="rotate(-14 157 73)"/><ellipse cx="46" cy="129" rx="1.7" ry="0.8" fill="#1f4a1a" transform="rotate(53 46 129)"/><ellipse cx="27" cy="68" rx="2.9" ry="1.3" fill="#44863a" transform="rotate(61 27 68)"/><ellipse cx="158" cy="135" rx="1.7" ry="1.7" fill="#4f9338" transform="rotate(-25 158 135)"/><ellipse cx="163" cy="128" rx="1.3" ry="1.1" fill="#22501c" transform="rotate(-22 163 128)"/><ellipse cx="16" cy="69" rx="1.7" ry="0.8" fill="#5a9c42" transform="rotate(-26 16 69)"/><ellipse cx="123" cy="143" rx="1.4" ry="0.8" fill="#44863a" transform="rotate(-34 123 143)"/><ellipse cx="75" cy="135" rx="1.6" ry="1.5" fill="#5a9c42" transform="rotate(5 75 135)"/><ellipse cx="66" cy="69" rx="3.4" ry="1.7" fill="#66a84c" transform="rotate(-6 66 69)"/><ellipse cx="144" cy="63" rx="1.3" ry="2.2" fill="#78b45c" transform="rotate(63 144 63)"/><ellipse cx="99" cy="143" rx="1.3" ry="2.2" fill="#275a20" transform="rotate(-32 99 143)"/><ellipse cx="17" cy="39" rx="2.3" ry="1.0" fill="#44863a" transform="rotate(-48 17 39)"/><ellipse cx="67" cy="124" rx="2.5" ry="1.1" fill="#4f9338" transform="rotate(48 67 124)"/><ellipse cx="114" cy="100" rx="1.4" ry="1.2" fill="#44863a" transform="rotate(3 114 100)"/><ellipse cx="151" cy="109" rx="1.7" ry="1.5" fill="#44863a" transform="rotate(-68 151 109)"/><ellipse cx="9" cy="80" rx="1.9" ry="2.2" fill="#4f9338" transform="rotate(52 9 80)"/><ellipse cx="40" cy="78" rx="2.9" ry="2.0" fill="#5a9c42" transform="rotate(-3 40 78)"/><ellipse cx="79" cy="39" rx="2.9" ry="2.0" fill="#78b45c" transform="rotate(43 79 39)"/><ellipse cx="29" cy="140" rx="1.4" ry="1.1" fill="#22501c" transform="rotate(68 29 140)"/><ellipse cx="38" cy="115" rx="2.7" ry="2.1" fill="#275a20" transform="rotate(-64 38 115)"/><ellipse cx="45" cy="97" rx="2.9" ry="1.4" fill="#22501c" transform="rotate(-63 45 97)"/><ellipse cx="101" cy="131" rx="3.3" ry="1.2" fill="#2f6a26" transform="rotate(-18 101 131)"/><ellipse cx="164" cy="88" rx="2.3" ry="1.7" fill="#275a20" transform="rotate(-23 164 88)"/><ellipse cx="14" cy="133" rx="1.3" ry="1.9" fill="#22501c" transform="rotate(-19 14 133)"/><ellipse cx="166" cy="95" rx="2.1" ry="1.0" fill="#3a7a2c" transform="rotate(-61 166 95)"/><ellipse cx="45" cy="103" rx="1.5" ry="1.0" fill="#22501c" transform="rotate(-52 45 103)"/><ellipse cx="34" cy="87" rx="2.9" ry="1.3" fill="#66a84c" transform="rotate(-25 34 87)"/><ellipse cx="20" cy="124" rx="2.7" ry="1.7" fill="#5a9c42" transform="rotate(2 20 124)"/><ellipse cx="109" cy="29" rx="3.3" ry="1.6" fill="#5a9c42" transform="rotate(-46 109 29)"/><ellipse cx="141" cy="106" rx="3.2" ry="1.4" fill="#4f9338" transform="rotate(59 141 106)"/><ellipse cx="66" cy="30" rx="3.5" ry="2.1" fill="#1f4a1a" transform="rotate(-67 66 30)"/><ellipse cx="113" cy="140" rx="1.9" ry="1.7" fill="#1f4a1a" transform="rotate(-40 113 140)"/><ellipse cx="91" cy="134" rx="2.8" ry="2.1" fill="#1f4a1a" transform="rotate(37 91 134)"/><ellipse cx="79" cy="134" rx="1.6" ry="1.1" fill="#3a7a2c" transform="rotate(-42 79 134)"/><ellipse cx="32" cy="27" rx="2.5" ry="1.0" fill="#5a9c42" transform="rotate(-53 32 27)"/><ellipse cx="134" cy="80" rx="2.0" ry="1.6" fill="#3a7a2c" transform="rotate(-2 134 80)"/><ellipse cx="142" cy="68" rx="1.7" ry="1.3" fill="#78b45c" transform="rotate(43 142 68)"/><ellipse cx="77" cy="133" rx="2.1" ry="1.6" fill="#44863a" transform="rotate(26 77 133)"/><ellipse cx="44" cy="70" rx="3.2" ry="1.6" fill="#3a7a2c" transform="rotate(-41 44 70)"/><ellipse cx="107" cy="37" rx="3.0" ry="1.2" fill="#3a7a2c" transform="rotate(29 107 37)"/><ellipse cx="151" cy="91" rx="3.4" ry="1.0" fill="#275a20" transform="rotate(15 151 91)"/><ellipse cx="142" cy="126" rx="3.2" ry="1.8" fill="#2f6a26" transform="rotate(1 142 126)"/><ellipse cx="78" cy="100" rx="3.1" ry="1.1" fill="#44863a" transform="rotate(-54 78 100)"/><ellipse cx="94" cy="98" rx="2.0" ry="1.6" fill="#1f4a1a" transform="rotate(10 94 98)"/><ellipse cx="108" cy="101" rx="2.3" ry="0.9" fill="#78b45c" transform="rotate(-70 108 101)"/><ellipse cx="15" cy="140" rx="3.0" ry="1.9" fill="#4f9338" transform="rotate(-39 15 140)"/><ellipse cx="31" cy="78" rx="1.9" ry="2.0" fill="#4f9338" transform="rotate(-1 31 78)"/><ellipse cx="29" cy="88" rx="2.0" ry="0.8" fill="#5a9c42" transform="rotate(-15 29 88)"/><ellipse cx="82" cy="98" rx="2.9" ry="2.1" fill="#44863a" transform="rotate(-19 82 98)"/><ellipse cx="147" cy="64" rx="2.7" ry="0.8" fill="#44863a" transform="rotate(-39 147 64)"/><ellipse cx="168" cy="104" rx="1.5" ry="2.2" fill="#275a20" transform="rotate(37 168 104)"/>
<path d="M73 0 L103 0 L103.5 60 L105 100 L71.5 100 L73 60 Z" fill="#76695c"/>
<rect x="85" y="49" width="1.3" height="3" fill="#9a8e80" opacity="0.7"/><rect x="98" y="89" width="1.4" height="7" fill="#8e8072" opacity="0.7"/><rect x="74" y="88" width="0.9" height="6" fill="#8e8072" opacity="0.7"/><rect x="79" y="90" width="0.9" height="2" fill="#8e8072" opacity="0.7"/><rect x="98" y="23" width="1.9" height="4" fill="#9a8e80" opacity="0.7"/><rect x="78" y="7" width="1.2" height="2" fill="#5a4e44" opacity="0.7"/><rect x="89" y="59" width="1.1" height="4" fill="#5a4e44" opacity="0.7"/><rect x="100" y="66" width="0.9" height="6" fill="#8e8072" opacity="0.7"/><rect x="93" y="79" width="1.4" height="7" fill="#9a8e80" opacity="0.7"/><rect x="77" y="62" width="1.1" height="2" fill="#5a4e44" opacity="0.7"/><rect x="99" y="61" width="1.8" height="4" fill="#5a4e44" opacity="0.7"/><rect x="94" y="33" width="0.9" height="4" fill="#8e8072" opacity="0.7"/><rect x="93" y="50" width="1.9" height="6" fill="#9a8e80" opacity="0.7"/><rect x="75" y="94" width="1.3" height="6" fill="#50463c" opacity="0.7"/><rect x="80" y="20" width="0.9" height="4" fill="#50463c" opacity="0.7"/><rect x="96" y="32" width="2.0" height="6" fill="#50463c" opacity="0.7"/><rect x="92" y="61" width="1.4" height="6" fill="#50463c" opacity="0.7"/><rect x="98" y="27" width="1.2" height="3" fill="#5a4e44" opacity="0.7"/><rect x="96" y="66" width="1.0" height="3" fill="#9a8e80" opacity="0.7"/><rect x="79" y="50" width="1.2" height="3" fill="#5a4e44" opacity="0.7"/><rect x="88" y="43" width="2.0" height="5" fill="#50463c" opacity="0.7"/><rect x="82" y="19" width="1.3" height="3" fill="#5a4e44" opacity="0.7"/><rect x="88" y="40" width="1.8" height="6" fill="#8e8072" opacity="0.7"/><rect x="98" y="63" width="1.2" height="5" fill="#50463c" opacity="0.7"/><rect x="100" y="34" width="1.1" height="6" fill="#50463c" opacity="0.7"/><rect x="76" y="96" width="1.6" height="3" fill="#8e8072" opacity="0.7"/><rect x="76" y="92" width="1.1" height="6" fill="#9a8e80" opacity="0.7"/><rect x="80" y="75" width="1.4" height="5" fill="#9a8e80" opacity="0.7"/><rect x="97" y="89" width="0.9" height="4" fill="#50463c" opacity="0.7"/><rect x="99" y="68" width="1.2" height="5" fill="#8e8072" opacity="0.7"/><rect x="84" y="44" width="1.1" height="2" fill="#50463c" opacity="0.7"/><rect x="98" y="91" width="1.1" height="7" fill="#5a4e44" opacity="0.7"/><rect x="76" y="75" width="1.1" height="6" fill="#50463c" opacity="0.7"/><rect x="90" y="43" width="1.7" height="4" fill="#8e8072" opacity="0.7"/><rect x="89" y="6" width="1.1" height="6" fill="#5a4e44" opacity="0.7"/><rect x="86" y="58" width="0.9" height="3" fill="#9a8e80" opacity="0.7"/><rect x="88" y="91" width="1.0" height="4" fill="#8e8072" opacity="0.7"/><rect x="79" y="90" width="1.9" height="2" fill="#9a8e80" opacity="0.7"/><rect x="93" y="35" width="1.2" height="7" fill="#5a4e44" opacity="0.7"/><rect x="96" y="39" width="1.4" height="4" fill="#8e8072" opacity="0.7"/><rect x="88" y="84" width="1.6" height="3" fill="#5a4e44" opacity="0.7"/><rect x="98" y="8" width="1.5" height="5" fill="#50463c" opacity="0.7"/><rect x="78" y="74" width="0.9" height="5" fill="#8e8072" opacity="0.7"/><rect x="83" y="89" width="1.9" height="3" fill="#5a4e44" opacity="0.7"/><rect x="94" y="36" width="1.2" height="3" fill="#8e8072" opacity="0.7"/><rect x="91" y="17" width="1.6" height="4" fill="#5a4e44" opacity="0.7"/><rect x="89" y="6" width="1.9" height="7" fill="#8e8072" opacity="0.7"/><rect x="75" y="46" width="1.4" height="5" fill="#9a8e80" opacity="0.7"/><rect x="93" y="80" width="1.3" height="4" fill="#50463c" opacity="0.7"/><rect x="93" y="31" width="0.9" height="3" fill="#5a4e44" opacity="0.7"/><rect x="82" y="31" width="1.7" height="4" fill="#50463c" opacity="0.7"/><rect x="99" y="21" width="1.8" height="5" fill="#8e8072" opacity="0.7"/><rect x="88" y="20" width="1.5" height="4" fill="#9a8e80" opacity="0.7"/><rect x="76" y="76" width="2.0" height="7" fill="#8e8072" opacity="0.7"/><rect x="82" y="70" width="1.2" height="5" fill="#8e8072" opacity="0.7"/><rect x="100" y="80" width="2.0" height="3" fill="#9a8e80" opacity="0.7"/><rect x="77" y="88" width="0.9" height="7" fill="#5a4e44" opacity="0.7"/><rect x="90" y="51" width="1.9" height="3" fill="#50463c" opacity="0.7"/><rect x="78" y="40" width="1.4" height="6" fill="#9a8e80" opacity="0.7"/><rect x="74" y="90" width="1.0" height="3" fill="#9a8e80" opacity="0.7"/><rect x="88" y="20" width="1.1" height="5" fill="#5a4e44" opacity="0.7"/><rect x="101" y="65" width="1.0" height="6" fill="#8e8072" opacity="0.7"/><rect x="89" y="67" width="2.0" height="6" fill="#50463c" opacity="0.7"/><rect x="90" y="32" width="1.6" height="4" fill="#8e8072" opacity="0.7"/><rect x="83" y="56" width="1.6" height="3" fill="#50463c" opacity="0.7"/><rect x="83" y="73" width="0.8" height="3" fill="#50463c" opacity="0.7"/><rect x="90" y="60" width="1.6" height="4" fill="#8e8072" opacity="0.7"/><rect x="87" y="94" width="1.8" height="3" fill="#8e8072" opacity="0.7"/><rect x="101" y="93" width="1.8" height="6" fill="#5a4e44" opacity="0.7"/><rect x="101" y="40" width="1.5" height="3" fill="#8e8072" opacity="0.7"/>
<path d="M61 48 Q65 44 70 46 L76 54 L73 58 L71.5 98 L61 98 L62 62 Z" fill="#222630"/>
<circle cx="68.5" cy="43" r="3.6" fill="#d0bfae"/>
<path d="M65 40 Q68.5 36 72 40 L71.5 42 L65 42 Z" fill="#151515"/>
<path d="M101 42 Q106 39 111 42 L117 48 L116 92 L103 92 L103 62 L96 57 L101 50 Z" fill="#242838"/>
<circle cx="107.3" cy="37.5" r="3.8" fill="#d0bfae"/>
<path d="M103.5 34 Q107 30 111 34 L110.5 36 L103.5 36 Z" fill="#151515"/>
<ellipse cx="77" cy="57" rx="3" ry="2" fill="#dcc6b6"/>
<ellipse cx="88" cy="57" rx="3" ry="2.2" fill="#dcc6b6"/>
</g>
</svg>

<!-- ===== video ===== -->
<svg style="left:1188px;top:372px;overflow:hidden" width="246" height="138" viewBox="0 0 246 138">
<defs><filter id="vb" x="-5%" y="-5%" width="110%" height="110%"><feGaussianBlur stdDeviation="0.75"/></filter></defs>
<rect width="246" height="138" fill="#c0cfc8"/>
<g filter="url(#vb)">
<rect x="-5" y="-5" width="256" height="148" fill="#c0cfc8"/><rect x="-5" y="-5" width="30" height="148" fill="#b3c1bd"/>
<rect x="76" y="-5" width="64" height="88" fill="#cbdcd2"/>
<rect x="72" y="-5" width="78" height="83" fill="none" stroke="#e6ece8" stroke-width="3"/>
<rect x="47" y="-5" width="19" height="120" fill="#dcdfe6"/>
<rect x="52" y="-5" width="9" height="120" fill="#eceef3"/>
<rect x="67" y="-5" width="9" height="110" fill="#e2e6ea"/>
<rect x="140" y="-5" width="6" height="110" fill="#e4e8ea"/>
<rect x="150" y="-5" width="18" height="115" fill="#e6e9ee"/>
<rect x="154" y="-5" width="9" height="115" fill="#f0f2f5"/>
<rect x="171" y="-5" width="5" height="110" fill="#dfe4e6"/>
<rect x="242" y="-5" width="6" height="70" fill="#e4e8ea"/>
<rect x="-5" y="76" width="256" height="3" fill="#e8edea"/>
<rect x="-5" y="87" width="256" height="2" fill="#e2e9e5"/>
<rect x="-5" y="92" width="256" height="2" fill="#e4ebe7"/>
<rect x="72" y="98" width="78" height="13" fill="#cddcd3" stroke="#e6ece8" stroke-width="2"/>
<rect x="-5" y="104" width="256" height="2" fill="#dde5e0"/>
<rect x="-5" y="112" width="256" height="30" fill="#b9ab98"/>
<!-- russian flag -->
<path d="M33 -5 L47 -5 L48 40 L49 70 L36 70 L33 42 Z" fill="#eceef6"/>
<path d="M33 42 L48 69 L36 72 L33 72 Z" fill="#2f3d8e"/>
<!-- bashkir flag -->
<path d="M178 -5 L189 -5 L190 37 L178 20 Z" fill="#3266b8"/>
<path d="M178 20 L190 37 L193 62 L176 62 L176 47 Z" fill="#eef0f2"/>
<circle cx="185" cy="44" r="4" fill="none" stroke="#b9b39a" stroke-width="0.8"/>
<path d="M176 47 L183 62 L176 62 Z" fill="#1f5a3a"/>
<!-- piano -->
<rect x="205" y="61" width="46" height="80" fill="#3e2622"/>
<rect x="205" y="61" width="46" height="5" fill="#5a3a38"/>
<rect x="205" y="66" width="8" height="20" fill="#5e4a66"/>
<!-- man left --><g transform="translate(1,6)">
<path d="M18 142 L19 115 Q24 98 40 95 L62 95 Q82 99 86 114 L88 142 Z" fill="#2a2a2e"/>
<path d="M41 95 L48 112 L56 95 Z" fill="#e4e8ee"/>
<path d="M42 110 L45 104 L50 104 L50 110 L47 138 Z" fill="#1a1b22"/>
<ellipse cx="45" cy="87" rx="13" ry="17" fill="#9a7a6a"/>
<path d="M31 84 Q30 68 45 68 Q60 68 60 84 L58 77 Q48 72 33 77 Z" fill="#1f1c1c"/>
<path d="M33 89 L57 89" stroke="#666" stroke-width="1"/>
</g>
<!-- man right --><g transform="translate(-3,8)">
<path d="M156 142 L157 114 Q163 95 180 90 L205 90 Q226 97 229 118 L230 142 Z" fill="#c6c2ba"/>
<path d="M160 100 Q170 92 180 91 L178 96 Q168 98 162 104 Z" fill="#8a8680"/>
<path d="M206 91 Q220 95 226 105 L222 107 Q214 99 204 96 Z" fill="#8a8680"/>
<path d="M181 91 L189 106 L198 91 Z" fill="#aabcd4"/>
<ellipse cx="187" cy="82" rx="15" ry="19" fill="#b08474"/>
<path d="M171 78 Q170 60 187 60 Q203 61 203 78 L201 71 Q190 65 174 71 Z" fill="#4a3428"/>
<path d="M157 142 L159 108 L161 108 L160 142 Z" fill="#2a2a2a"/>
</g>
</g>
<rect x="0" y="118.5" width="220" height="19.5" fill="rgba(40,40,40,.7)"/>
<rect x="3" y="132" width="2" height="4" fill="#fff"/><rect x="6.5" y="129" width="2" height="7" fill="#fff"/><rect x="10" y="126" width="2" height="10" fill="#fff"/><rect x="13.5" y="123" width="2" height="13" fill="#fff"/>
</svg>
<div class="t" id="vlabel" style="left:1210px;top:494px;font-size:12.5px;color:#f4f4f4">Национальный музей Республи...</div>


<!-- ===== bottom toolbar ===== -->
<!-- mic -->
<svg style="left:38px;top:810px" width="28" height="28"><rect x="9.2" y="2.9" width="7.8" height="16" rx="3.9" fill="#b3b3b3"/><path d="M5.9 12.5 Q5.9 21 13.1 21 Q20.3 21 20.3 12.5" stroke="#b3b3b3" stroke-width="1.5" fill="none"/><path d="M13.1 21 L13.1 24.2 M9.5 24.8 L16.7 24.8" stroke="#b3b3b3" stroke-width="1.6"/><path d="M1.2 25.3 L24.3 2.6" stroke="#1b1b1b" stroke-width="3"/><path d="M1.2 25.3 L24.3 2.6" stroke="#e05a5a" stroke-width="1.7"/></svg>
<svg style="left:85px;top:820px" width="10" height="7"><path d="M1 6 L5 2 L9 6" stroke="#b9b9b9" stroke-width="1.5" fill="none"/></svg>
<div class="t" id="lb1" style="left:10px;top:841px;font-size:12.4px;color:#c9c9c9">Включить звук</div>
<!-- video -->
<svg style="left:146px;top:810px" width="30" height="28"><rect x="2" y="7" width="15.5" height="13.8" rx="2" fill="#b3b3b3"/><path d="M17 12 L26.2 7.5 L26.2 20.3 L17 16 Z" fill="#b3b3b3"/><path d="M1.7 24.6 L24.5 3" stroke="#1b1b1b" stroke-width="3"/><path d="M1.7 24.6 L24.5 3" stroke="#e05a5a" stroke-width="1.7"/></svg>
<svg style="left:202px;top:820px" width="10" height="7"><path d="M1 6 L5 2 L9 6" stroke="#b9b9b9" stroke-width="1.5" fill="none"/></svg>
<div class="t" id="lb2" style="left:114px;top:841px;font-size:12.4px;color:#c9c9c9">Включить видео</div>
<!-- participants -->
<svg style="left:576px;top:813px" width="28" height="22"><circle cx="19" cy="8.1" r="3.7" fill="#b3b3b3"/><rect x="14" y="14" width="11" height="5.8" rx="2.9" fill="#b3b3b3"/><circle cx="8.4" cy="6.4" r="4.1" fill="#b3b3b3"/><rect x="0.2" y="12.1" width="16.2" height="7.7" rx="3.85" fill="#1b1b1b"/><rect x="0.7" y="12.6" width="15.5" height="7.2" rx="3.6" fill="#b3b3b3"/></svg>
<div class="t" id="p90" style="left:605px;top:815px;font-size:12.5px;letter-spacing:-0.5px;color:#cfcfcf">90</div>
<svg style="left:637px;top:820px" width="10" height="7"><path d="M1 6 L5 2 L9 6" stroke="#b9b9b9" stroke-width="1.5" fill="none"/></svg>
<div class="t" id="lb3" style="left:560px;top:841px;font-size:12.4px;color:#c9c9c9">Участники</div>
<!-- chat -->
<svg style="left:682px;top:813px" width="24" height="22"><path d="M4 1 L19 1 Q22 1 22 4 L22 12 Q22 15 19 15 L10 15 L5 20 L5.5 15 L4 15 Q1 15 1 12 L1 4 Q1 1 4 1 Z" fill="#b3b3b3"/></svg>
<div class="t" id="lb4" style="left:684px;top:841px;font-size:12.4px;color:#c9c9c9">Чат</div>
<!-- share -->
<div class="a" style="left:790px;top:815px;width:25px;height:18px;border-radius:3px;background:#22c94f"></div>
<svg style="left:797px;top:818px" width="11" height="12"><path d="M5.5 1 L10 5.5 L7 5.5 L7 10 L4 10 L4 5.5 L1 5.5 Z" fill="#111"/></svg>
<div class="t" id="lb5" style="left:742px;top:841px;font-size:12.2px;color:#3fce5f">Демонстрация экрана</div>
<!-- record -->
<svg style="left:900px;top:812px" width="24" height="24"><circle cx="12" cy="12" r="10" fill="none" stroke="#b3b3b3" stroke-width="2"/><circle cx="12" cy="12" r="7" fill="#b3b3b3"/></svg>
<div class="t" id="lb6" style="left:893px;top:841px;font-size:12.4px;color:#c9c9c9">Запись</div>
<!-- reactions -->
<svg style="left:982px;top:810px" width="26" height="26"><circle cx="11" cy="14" r="9.5" fill="#b3b3b3"/><circle cx="8" cy="12" r="1.3" fill="#1b1b1b"/><circle cx="14" cy="12" r="1.3" fill="#1b1b1b"/><path d="M6.5 16 Q11 20 15.5 16" stroke="#1b1b1b" stroke-width="1.4" fill="none"/><path d="M19.5 1.5 L19.5 8.5 M16 5 L23 5" stroke="#b3b3b3" stroke-width="1.6"/></svg>
<div class="t" id="lb7" style="left:970px;top:841px;font-size:12.4px;color:#c9c9c9">Реакции</div>

<div class="a" style="left:1366px;top:820px;width:62px;height:27px;background:#c0272d;border-radius:5px"></div>
<div class="t" id="exit" style="left:1377px;top:827px;font-size:12px;letter-spacing:-0.1px;font-weight:bold;color:#fff">Выйти</div>
</body></html>
